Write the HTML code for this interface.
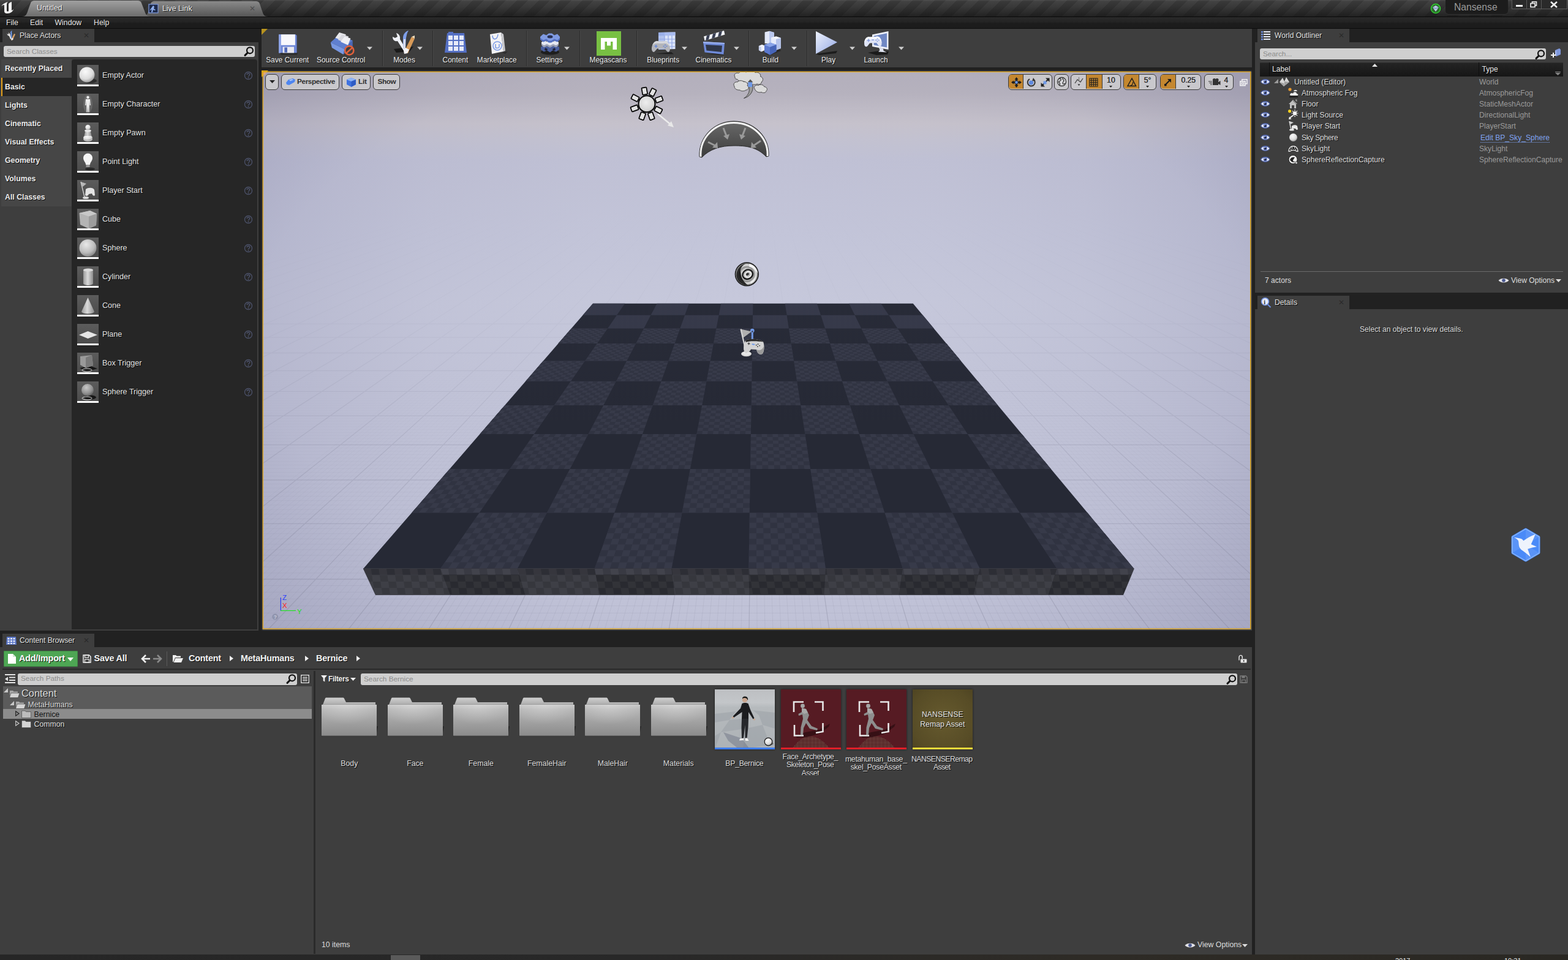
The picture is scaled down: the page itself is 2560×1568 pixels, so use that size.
<!DOCTYPE html><html><head><meta charset="utf-8"><title>Unreal Editor</title><style>
html,body{margin:0;padding:0;background:#212121;}
body{width:2560px;height:1568px;position:relative;overflow:hidden;font-family:"Liberation Sans",sans-serif;font-size:12px;color:#dedede;line-height:1;}
.a{position:absolute;white-space:nowrap}
.sh{text-shadow:1px 1px 0 rgba(0,0,0,.85)}
.b{font-weight:bold}
.panel{position:absolute;background:#3e3e3e}
.tab{position:absolute;background:#3e3e3e;height:22px}
.tab .t{position:absolute;left:28px;top:5px;font-size:12.1px;color:#e4e4e4;text-shadow:1px 1px 0 #000}
.tab .x{position:absolute;right:8px;top:5px;font-size:12px;color:#2a2a2a}
.search{position:absolute;background:#cfcfcf;border-radius:3px;color:#8c8c8c;font-size:11.8px}
.search span{position:absolute;left:5px;top:3.5px}
.mag{position:absolute}
svg{position:absolute;overflow:visible}
</style></head><body>
<div class="a" id="titlebar" style="left:0;top:0;width:2560px;height:27px;background:repeating-linear-gradient(135deg,#3d3d3d 0 12.7px,#313131 12.7px 25.4px);"></div>
<div class="a" style="left:0;top:0;width:2560px;height:27px;background:linear-gradient(#6a6a6a70 0,#50505040 8%,#30303050 40%,#161616b0 100%)"></div>
<svg style="left:0;top:0" width="480" height="28" viewBox="0 0 480 28">
 <defs>
  <linearGradient id="tg1" x1="0" y1="0" x2="0" y2="1"><stop offset="0" stop-color="#a0a0a0"/><stop offset="1" stop-color="#6c6c6c"/></linearGradient>
  <linearGradient id="tg2" x1="0" y1="0" x2="0" y2="1"><stop offset="0" stop-color="#8a8a8a"/><stop offset="1" stop-color="#565656"/></linearGradient>
 </defs>
 <path d="M232 27 C240 27 241 22 243 16 L246 6 C247 3 249 2 253 2 L417 2 C421 2 423 3 424 6 L428 18 C430 24 431 27 438 27 Z" fill="url(#tg2)"/>
 <path d="M36 27 C43 27 44 22 46 16 L50 5 C51 2 53 1 57 1 L224 1 C228 1 230 2 231 5 L236 18 C238 24 240 27 247 27 Z" fill="url(#tg1)"/>
 <!-- UE logo -->
 <g fill="#f2f2f2"><path d="M2 10 C5 6 9 4 13 3 C11 5 11 6 11 8 L11 17 C11 19 13 19 14 18 L14 7 C14 5 16 4 19 3 L19 17 C20 17 21 16 22 15 C21 19 17 22 12 22 C9 22 7 21 7 18 L7 9 C7 7 5 8 2 10 Z"/></g>
 <!-- live link icon -->
 <rect x="243" y="7" width="15" height="14" fill="#1d2a4a" stroke="#7f9be0" stroke-width="1.2"/>
 <path d="M250 9 l2 2 l-1 3 l3 2 l-1 1 l-3 -1 l-1 4 l-2 0 l1 -5 l-2 2 l-1 -1 l3 -4 z" fill="#8fb0f0"/>
</svg>
<div class="a sh" style="left:60px;top:6.5px;font-size:12.3px;color:#f0f0f0">Untitled</div>
<div class="a sh" style="left:265px;top:7.5px;font-size:12.3px;color:#f0f0f0">Live Link</div>
<div class="a" style="left:407px;top:8px;font-size:12px;color:#4c4c4c">✕</div>
<!-- right side -->
<div class="a" style="left:2360px;top:0;width:102px;height:23px;background:#1c1c1c;border-radius:0 0 5px 5px;box-shadow:0 1px 0 #333"></div>
<div class="a" style="left:2374px;top:4px;font-size:15.7px;color:#9a9a9a">Nansense</div>
<svg style="left:2334px;top:4px" width="20" height="20" viewBox="0 0 20 20"><circle cx="10" cy="10" r="7.5" fill="#2c6b2c" stroke="#2fd02f" stroke-width="1.6"/><path d="M5 8 L10 5 L15 8 L10 15 Z" fill="#b9c9e6"/><path d="M5 8 L10 10 L15 8" fill="none" stroke="#6c7fa8" stroke-width="1"/></svg>
<div class="a" style="left:2468px;top:0;width:89px;height:14px;border:1px solid #5a5a5a;border-top:none;background:#2a2a2a"></div>
<div class="a" style="left:2492px;top:0;width:1px;height:14px;background:#5a5a5a"></div>
<div class="a" style="left:2516px;top:0;width:1px;height:14px;background:#5a5a5a"></div>
<div class="a" style="left:2475px;top:8px;width:11px;height:3px;background:#f0f0f0"></div>
<svg style="left:2498px;top:2px" width="12" height="11" viewBox="0 0 12 11"><rect x="3.5" y="1" width="7" height="6" fill="none" stroke="#f0f0f0" stroke-width="1.6"/><rect x="1" y="3.5" width="7" height="6" fill="#2a2a2a" stroke="#f0f0f0" stroke-width="1.6"/></svg>
<svg style="left:2530px;top:2px" width="14" height="11" viewBox="0 0 14 11"><path d="M2 1 L12 10 M12 1 L2 10" stroke="#f0f0f0" stroke-width="2.6"/></svg>
<!-- menu bar -->
<div class="a" style="left:0;top:27px;width:2560px;height:20px;background:#202020;border-top:1px solid #0a0a0a;border-bottom:1px solid #0c0c0c;box-sizing:border-box"></div>
<div class="a" style="left:0;top:28px;width:2560px;height:18px;background:linear-gradient(#30303099 0,#26262688 45%,#1a1a1a99 55%,#18181888 100%)"></div>
<div class="a sh" style="left:10px;top:30.5px;font-size:12.3px;color:#e8e8e8">File</div>
<div class="a sh" style="left:49px;top:30.5px;font-size:12.3px;color:#e8e8e8">Edit</div>
<div class="a sh" style="left:89.5px;top:30.5px;font-size:12.3px;color:#e8e8e8">Window</div>
<div class="a sh" style="left:153px;top:30.5px;font-size:12.3px;color:#e8e8e8">Help</div>

<div class="tab" style="left:4px;top:47px;width:150px"><div class="t">Place Actors</div><div class="x">✕</div>
<svg style="left:5px;top:3px" width="18" height="17" viewBox="0 0 18 17"><path d="M3 4 C2 6 3 8 6 9 L8 14 L10 14 L8 8 C8 6 6 4 5 3 L5 6 L3.5 6 Z" fill="#e8e8e8"/><path d="M9 13 L8 3 C8.5 1 10 0 11 0 C10 1.5 10 3 10.5 4 L10.5 13Z" fill="#6f9ae8"/><path d="M9.5 14 L14 5 L16 6 L12 15 L9.5 16 Z" fill="#d8a26a"/><path d="M9.5 14 L10.5 12 L12.8 13 L12 15 L9.5 16 Z" fill="#f0f0f0"/></svg></div>
<div class="panel" style="left:0;top:69px;width:422px;height:961px"></div>
<div class="search" style="left:6px;top:75px;width:410px;height:18px"><span>Search Classes</span>
<svg style="right:1px;top:0px" width="18" height="18" viewBox="0 0 18 18"><circle cx="11" cy="7.3" r="5" fill="none" stroke="#111" stroke-width="2.2"/><path d="M7.2 11.2 L3 15.4" stroke="#111" stroke-width="3" stroke-linecap="round"/></svg></div>
<div class="a" style="left:2px;top:97px;width:115px;height:240px;background:#464646"></div>
<div class="a" style="left:2px;top:127px;width:115px;height:30px;background:#262626;border-left:2px solid #e6a11a;box-sizing:border-box"></div>
<div class="a" style="left:117px;top:97px;width:303px;height:931px;background:#262626;border-radius:4px 4px 0 0"></div>
<div class="a b sh" style="left:8px;top:105.5px;font-size:12.3px;color:#ececec">Recently Placed</div><div class="a b sh" style="left:8px;top:135.5px;font-size:12.3px;color:#ececec">Basic</div><div class="a b sh" style="left:8px;top:165.5px;font-size:12.3px;color:#ececec">Lights</div><div class="a b sh" style="left:8px;top:195.5px;font-size:12.3px;color:#ececec">Cinematic</div><div class="a b sh" style="left:8px;top:225.5px;font-size:12.3px;color:#ececec">Visual Effects</div><div class="a b sh" style="left:8px;top:255.5px;font-size:12.3px;color:#ececec">Geometry</div><div class="a b sh" style="left:8px;top:285.5px;font-size:12.3px;color:#ececec">Volumes</div><div class="a b sh" style="left:8px;top:315.5px;font-size:12.3px;color:#ececec">All Classes</div><svg width="0" height="0"><defs>
<radialGradient id="sph" cx=".4" cy=".3" r=".8"><stop offset="0" stop-color="#fafafa"/><stop offset=".6" stop-color="#dcdcdc"/><stop offset="1" stop-color="#8a8a8a"/></radialGradient>
<radialGradient id="sph2" cx=".4" cy=".3" r=".8"><stop offset="0" stop-color="#e8e8e8"/><stop offset=".6" stop-color="#bcbcbc"/><stop offset="1" stop-color="#767676"/></radialGradient>
<radialGradient id="sph3" cx=".4" cy=".3" r=".8"><stop offset="0" stop-color="#c8c8c8"/><stop offset=".6" stop-color="#909090"/><stop offset="1" stop-color="#505050"/></radialGradient>
<linearGradient id="cyl" x1="0" y1="0" x2="1" y2="0"><stop offset="0" stop-color="#9a9a9a"/><stop offset=".45" stop-color="#dadada"/><stop offset="1" stop-color="#8c8c8c"/></linearGradient>
<linearGradient id="thbg" x1="0" y1="0" x2="0" y2="1"><stop offset="0" stop-color="#5c5c5c"/><stop offset="1" stop-color="#4a4a4a"/></linearGradient>
</defs></svg><svg style="left:126px;top:105.7px" width="35" height="35" viewBox="0 0 35 35"><rect width="35" height="35" fill="url(#thbg)"/><ellipse cx="21" cy="26" rx="11" ry="4" fill="#2c2c2c"/><circle cx="16" cy="16" r="12.5" fill="url(#sph)"/><rect y="32" width="35" height="3" fill="#fafafa"/></svg><div class="a sh" style="left:167px;top:116.9px;font-size:12.6px;color:#e2e2e2">Empty Actor</div><svg style="left:398px;top:116.0px" width="15" height="15" viewBox="0 0 15 15"><circle cx="7.5" cy="7.5" r="6" fill="none" stroke="#4c526a" stroke-width="1.3"/><path d="M5.3 6 C5.3 3.4 9.7 3.4 9.7 6 C9.7 7.6 7.5 7.4 7.5 9.2" fill="none" stroke="#4c526a" stroke-width="1.4"/><circle cx="7.5" cy="11" r=".9" fill="#4c526a"/></svg><svg style="left:126px;top:152.7px" width="35" height="35" viewBox="0 0 35 35"><rect width="35" height="35" fill="url(#thbg)"/><ellipse cx="17.5" cy="17" rx="7.5" ry="15" fill="#777" opacity=".6"/><circle cx="17.5" cy="6" r="2.2" fill="#f0f0f0"/><path d="M14 9 H21 L22 19 H20.5 L20 12 L19.5 30 H18 L17.5 20 L17 30 H15.5 L15 12 L14.5 19 H13 Z" fill="#eeeeee"/><rect y="32" width="35" height="3" fill="#fafafa"/></svg><div class="a sh" style="left:167px;top:163.9px;font-size:12.6px;color:#e2e2e2">Empty Character</div><svg style="left:398px;top:163.0px" width="15" height="15" viewBox="0 0 15 15"><circle cx="7.5" cy="7.5" r="6" fill="none" stroke="#4c526a" stroke-width="1.3"/><path d="M5.3 6 C5.3 3.4 9.7 3.4 9.7 6 C9.7 7.6 7.5 7.4 7.5 9.2" fill="none" stroke="#4c526a" stroke-width="1.4"/><circle cx="7.5" cy="11" r=".9" fill="#4c526a"/></svg><svg style="left:126px;top:199.7px" width="35" height="35" viewBox="0 0 35 35"><rect width="35" height="35" fill="url(#thbg)"/><ellipse cx="17.5" cy="27.500" rx="7.500" ry="3.500" fill="#c4c4c4"/><ellipse cx="17.5" cy="25" rx="7.500" ry="4.500" fill="url(#sph)"/><path d="M13.500 13 H21.500 L23.500 22 H11.500Z" fill="url(#cyl)"/><ellipse cx="17.5" cy="13.500" rx="5.500" ry="2.200" fill="#e8e8e8"/><circle cx="17.5" cy="8" r="4.200" fill="url(#sph)"/><rect y="32" width="35" height="3" fill="#fafafa"/></svg><div class="a sh" style="left:167px;top:210.9px;font-size:12.6px;color:#e2e2e2">Empty Pawn</div><svg style="left:398px;top:210.0px" width="15" height="15" viewBox="0 0 15 15"><circle cx="7.5" cy="7.5" r="6" fill="none" stroke="#4c526a" stroke-width="1.3"/><path d="M5.3 6 C5.3 3.4 9.7 3.4 9.7 6 C9.7 7.6 7.5 7.4 7.5 9.2" fill="none" stroke="#4c526a" stroke-width="1.4"/><circle cx="7.5" cy="11" r=".9" fill="#4c526a"/></svg><svg style="left:126px;top:246.7px" width="35" height="35" viewBox="0 0 35 35"><rect width="35" height="35" fill="url(#thbg)"/><ellipse cx="21" cy="29" rx="8" ry="2.5" fill="#2a2a2a"/><path d="M10 11 A7.5 7.5 0 1 1 25 11 C25 16 21 18 21 22 H14 C14 18 10 16 10 11Z" fill="#f4f4f4"/><rect x="14.5" y="22" width="6" height="4" fill="#9a9a9a"/><rect y="32" width="35" height="3" fill="#fafafa"/></svg><div class="a sh" style="left:167px;top:257.9px;font-size:12.6px;color:#e2e2e2">Point Light</div><svg style="left:398px;top:257.0px" width="15" height="15" viewBox="0 0 15 15"><circle cx="7.5" cy="7.5" r="6" fill="none" stroke="#4c526a" stroke-width="1.3"/><path d="M5.3 6 C5.3 3.4 9.7 3.4 9.7 6 C9.7 7.6 7.5 7.4 7.5 9.2" fill="none" stroke="#4c526a" stroke-width="1.4"/><circle cx="7.5" cy="11" r=".9" fill="#4c526a"/></svg><svg style="left:126px;top:293.7px" width="35" height="35" viewBox="0 0 35 35"><rect width="35" height="35" fill="url(#thbg)"/><ellipse cx="14" cy="29" rx="5" ry="2" fill="#dcdcdc"/><path d="M6 3 L15 6 L9 11 Z" fill="#b8b8b8"/><path d="M6 3 L12 28" stroke="#d0d0d0" stroke-width="1.4"/><path d="M14 15 C18 12 26 12 28 16 L29 25 C27 27 25 25 24 22 L19 23 C18 26 15 27 13 25 Z" fill="#e4e4e4"/><rect y="32" width="35" height="3" fill="#fafafa"/></svg><div class="a sh" style="left:167px;top:304.9px;font-size:12.6px;color:#e2e2e2">Player Start</div><svg style="left:398px;top:304.0px" width="15" height="15" viewBox="0 0 15 15"><circle cx="7.5" cy="7.5" r="6" fill="none" stroke="#4c526a" stroke-width="1.3"/><path d="M5.3 6 C5.3 3.4 9.7 3.4 9.7 6 C9.7 7.6 7.5 7.4 7.5 9.2" fill="none" stroke="#4c526a" stroke-width="1.4"/><circle cx="7.5" cy="11" r=".9" fill="#4c526a"/></svg><svg style="left:126px;top:340.7px" width="35" height="35" viewBox="0 0 35 35"><rect width="35" height="35" fill="url(#thbg)"/><path d="M3.500 7 L21 3 L32 8 L31 27 L19 32.500 L5 26 Z" fill="#b4b4b4"/><path d="M3.500 7 L21 3 L32 8 L19 12.500 Z" fill="#c8c8c8"/><path d="M19 12.500 L32 8 L31 27 L19 32.500 Z" fill="#9c9c9c"/><rect y="32" width="35" height="3" fill="#fafafa"/></svg><div class="a sh" style="left:167px;top:351.9px;font-size:12.6px;color:#e2e2e2">Cube</div><svg style="left:398px;top:351.0px" width="15" height="15" viewBox="0 0 15 15"><circle cx="7.5" cy="7.5" r="6" fill="none" stroke="#4c526a" stroke-width="1.3"/><path d="M5.3 6 C5.3 3.4 9.7 3.4 9.7 6 C9.7 7.6 7.5 7.4 7.5 9.2" fill="none" stroke="#4c526a" stroke-width="1.4"/><circle cx="7.5" cy="11" r=".9" fill="#4c526a"/></svg><svg style="left:126px;top:387.7px" width="35" height="35" viewBox="0 0 35 35"><rect width="35" height="35" fill="url(#thbg)"/><circle cx="17.5" cy="17" r="14" fill="url(#sph2)"/><rect y="32" width="35" height="3" fill="#fafafa"/></svg><div class="a sh" style="left:167px;top:398.9px;font-size:12.6px;color:#e2e2e2">Sphere</div><svg style="left:398px;top:398.0px" width="15" height="15" viewBox="0 0 15 15"><circle cx="7.5" cy="7.5" r="6" fill="none" stroke="#4c526a" stroke-width="1.3"/><path d="M5.3 6 C5.3 3.4 9.7 3.4 9.7 6 C9.7 7.6 7.5 7.4 7.5 9.2" fill="none" stroke="#4c526a" stroke-width="1.4"/><circle cx="7.5" cy="11" r=".9" fill="#4c526a"/></svg><svg style="left:126px;top:434.7px" width="35" height="35" viewBox="0 0 35 35"><rect width="35" height="35" fill="url(#thbg)"/><path d="M10 6 V28 A8 3 0 0 0 26 28 V6 Z" fill="url(#cyl)"/><ellipse cx="18" cy="6" rx="8" ry="2.6" fill="#dcdcdc"/><rect y="32" width="35" height="3" fill="#fafafa"/></svg><div class="a sh" style="left:167px;top:445.9px;font-size:12.6px;color:#e2e2e2">Cylinder</div><svg style="left:398px;top:445.0px" width="15" height="15" viewBox="0 0 15 15"><circle cx="7.5" cy="7.5" r="6" fill="none" stroke="#4c526a" stroke-width="1.3"/><path d="M5.3 6 C5.3 3.4 9.7 3.4 9.7 6 C9.7 7.6 7.5 7.4 7.5 9.2" fill="none" stroke="#4c526a" stroke-width="1.4"/><circle cx="7.5" cy="11" r=".9" fill="#4c526a"/></svg><svg style="left:126px;top:481.7px" width="35" height="35" viewBox="0 0 35 35"><rect width="35" height="35" fill="url(#thbg)"/><path d="M17.5 4 L28 27 A10.5 3.5 0 0 1 7 27 Z" fill="url(#cyl)"/><rect y="32" width="35" height="3" fill="#fafafa"/></svg><div class="a sh" style="left:167px;top:492.9px;font-size:12.6px;color:#e2e2e2">Cone</div><svg style="left:398px;top:492.0px" width="15" height="15" viewBox="0 0 15 15"><circle cx="7.5" cy="7.5" r="6" fill="none" stroke="#4c526a" stroke-width="1.3"/><path d="M5.3 6 C5.3 3.4 9.7 3.4 9.7 6 C9.7 7.6 7.5 7.4 7.5 9.2" fill="none" stroke="#4c526a" stroke-width="1.4"/><circle cx="7.5" cy="11" r=".9" fill="#4c526a"/></svg><svg style="left:126px;top:528.7px" width="35" height="35" viewBox="0 0 35 35"><rect width="35" height="35" fill="url(#thbg)"/><path d="M3 18 L17.5 12 L33 18 L17.5 24 Z" fill="#e6e6e6"/><rect y="32" width="35" height="3" fill="#fafafa"/></svg><div class="a sh" style="left:167px;top:539.9px;font-size:12.6px;color:#e2e2e2">Plane</div><svg style="left:398px;top:539.0px" width="15" height="15" viewBox="0 0 15 15"><circle cx="7.5" cy="7.5" r="6" fill="none" stroke="#4c526a" stroke-width="1.3"/><path d="M5.3 6 C5.3 3.4 9.7 3.4 9.7 6 C9.7 7.6 7.5 7.4 7.5 9.2" fill="none" stroke="#4c526a" stroke-width="1.4"/><circle cx="7.5" cy="11" r=".9" fill="#4c526a"/></svg><svg style="left:126px;top:575.7px" width="35" height="35" viewBox="0 0 35 35"><rect width="35" height="35" fill="url(#thbg)"/><path d="M4 25 L22 22 L33 26 L16 31 Z" fill="#161616"/><ellipse cx="16" cy="28.5" rx="8" ry="2.5" fill="none" stroke="#ddd" stroke-width="1"/><path d="M5 6 L24 4 L26 21 L14 25 L5 20 Z" fill="#9a9a9a"/><path d="M14 8 L24 4 L26 21 L14 25Z" fill="#7a7a7a"/><rect y="32" width="35" height="3" fill="#fafafa"/></svg><div class="a sh" style="left:167px;top:586.9px;font-size:12.6px;color:#e2e2e2">Box Trigger</div><svg style="left:398px;top:586.0px" width="15" height="15" viewBox="0 0 15 15"><circle cx="7.5" cy="7.5" r="6" fill="none" stroke="#4c526a" stroke-width="1.3"/><path d="M5.3 6 C5.3 3.4 9.7 3.4 9.7 6 C9.7 7.6 7.5 7.4 7.5 9.2" fill="none" stroke="#4c526a" stroke-width="1.4"/><circle cx="7.5" cy="11" r=".9" fill="#4c526a"/></svg><svg style="left:126px;top:622.7px" width="35" height="35" viewBox="0 0 35 35"><rect width="35" height="35" fill="url(#thbg)"/><ellipse cx="21" cy="26" rx="10" ry="3.5" fill="#161616"/><ellipse cx="16" cy="27.5" rx="8" ry="2.5" fill="none" stroke="#ddd" stroke-width="1"/><circle cx="17" cy="14" r="10" fill="url(#sph3)"/><rect y="32" width="35" height="3" fill="#fafafa"/></svg><div class="a sh" style="left:167px;top:633.9px;font-size:12.6px;color:#e2e2e2">Sphere Trigger</div><svg style="left:398px;top:633.0px" width="15" height="15" viewBox="0 0 15 15"><circle cx="7.5" cy="7.5" r="6" fill="none" stroke="#4c526a" stroke-width="1.3"/><path d="M5.3 6 C5.3 3.4 9.7 3.4 9.7 6 C9.7 7.6 7.5 7.4 7.5 9.2" fill="none" stroke="#4c526a" stroke-width="1.4"/><circle cx="7.5" cy="11" r=".9" fill="#4c526a"/></svg><div class="a" style="left:427px;top:47px;width:1617px;height:63px;background:#3e3e3e"></div>
<svg style="left:427px;top:47px" width="10" height="10"><path d="M0 0 H10 L0 10Z" fill="#b8931f"/></svg><svg width="0" height="0"><defs><linearGradient id="playg" x1="0" y1="0" x2="1" y2="1"><stop offset="0" stop-color="#eef2fc"/><stop offset=".6" stop-color="#b8c6ee"/><stop offset="1" stop-color="#8ea4e0"/></linearGradient></defs></svg><svg style="left:450.0px;top:50px" width="40" height="40" viewBox="0 0 40 40"><g transform="translate(1.5 3.5) scale(.92)"><path d="M4 3 H34 L36 5 V36 H4 Z" fill="#6d86d6"/><path d="M4 3 H8 V36 H4Z" fill="#8ea4e6"/><rect x="8" y="3" width="25" height="19" fill="#f8f8fc"/><rect x="11" y="25" width="20" height="11" fill="#e8e8f0"/><rect x="14" y="26" width="5" height="9" fill="#5068b8"/><path d="M6 36 L38 36 L36 39 L8 39Z" fill="#202020" opacity=".6"/></g></svg><div class="a sh" style="left:409.4px;top:92.8px;width:120px;text-align:center;font-size:11.9px;color:#ececec">Save Current</div><svg style="left:538.0px;top:50px" width="40" height="40" viewBox="0 0 40 40"><g transform="translate(-1.500 -2.500) scale(1.09)"><path d="M3 20 L14 10 L36 17 L24 30 Z" fill="#5f7fd0"/><path d="M3 20 L24 30 L22 38 L5 28Z" fill="#7898e2"/><path d="M24 30 L36 17 L36 26 L22 38Z" fill="#4a68b8"/><path d="M10 13 L16 5 L26 8 L22 18Z" fill="#e8e8ec"/><path d="M14 16 L20 8 L30 11 L26 21Z" fill="#d8d8de"/><path d="M18 19 L24 11 L33 14 L29 24Z" fill="#f0f0f4"/><circle cx="31" cy="32" r="6.5" fill="#3e3e3e" stroke="#e0603a" stroke-width="2.4"/><path d="M26.5 36 L35.5 28" stroke="#e0603a" stroke-width="2.4"/></g></svg><div class="a sh" style="left:496.7px;top:92.8px;width:120px;text-align:center;font-size:11.9px;color:#ececec">Source Control</div><svg style="left:599.3px;top:76px" width="9" height="6"><path d="M0 .5 H9 L4.5 5.5Z" fill="#cfcfcf"/></svg><svg style="left:639.0px;top:50px" width="40" height="40" viewBox="0 0 40 40"><path d="M4 30 L36 26 L30 34 L8 36Z" fill="#111" opacity=".8"/><path d="M2 10 C2 16 6 18 10 17 L22 36 L26 34 L14 14 C15 9 12 5 8 4 L10 10 L6 12 Z" fill="#f0f2f8"/><path d="M19 30 L19 12 C19 6 23 1 28 0 C25 4 25 8 24 12 L23 30Z" fill="#7f9fe8"/><path d="M19 30 L20 14 L23 14 L23 30Z" fill="#d8dcec"/><path d="M21 34 L33 10 L38 13 L27 37Z" fill="#d89a58"/><path d="M33 10 L38 8 L38 13Z" fill="#f0e0c0"/><path d="M20 33 L23 28 L29 31 L26 37 L21 38Z" fill="#f4f4f8"/></svg><div class="a sh" style="left:600.0px;top:92.8px;width:120px;text-align:center;font-size:11.9px;color:#ececec">Modes</div><svg style="left:681.3px;top:76px" width="9" height="6"><path d="M0 .5 H9 L4.5 5.5Z" fill="#cfcfcf"/></svg><svg style="left:724.0px;top:50px" width="40" height="40" viewBox="0 0 40 40"><path d="M6 4 H34 L38 36 H2 Z" fill="#5570c4"/><path d="M8 2 H16 V5 H8Z" fill="#5570c4"/><rect x="8" y="8" width="7" height="7" fill="#e6eaf8"/><rect x="17" y="8" width="7" height="7" fill="#e6eaf8"/><rect x="26" y="8" width="7" height="7" fill="#e6eaf8"/><rect x="8" y="17" width="7" height="7" fill="#e6eaf8"/><rect x="17" y="17" width="7" height="7" fill="#e6eaf8"/><rect x="26" y="17" width="7" height="7" fill="#e6eaf8"/><rect x="8" y="26" width="7" height="7" fill="#e6eaf8"/><rect x="17" y="26" width="7" height="7" fill="#e6eaf8"/><rect x="26" y="26" width="7" height="7" fill="#e6eaf8"/></svg><div class="a sh" style="left:683.4px;top:92.8px;width:120px;text-align:center;font-size:11.9px;color:#ececec">Content</div><svg style="left:791.0px;top:50px" width="40" height="40" viewBox="0 0 40 40"><path d="M28 36 L38 34 L34 38 Z" fill="#222" opacity=".6"/><path d="M9 6 L27 3 L31 34 L12 38 Z" fill="#f2f2f4"/><path d="M27 3 L31 6 L34 33 L31 34Z" fill="#c8c8cc"/><path d="M13 8 C13 16 21 16 22 6" fill="none" stroke="#6f90e0" stroke-width="1.4"/><circle cx="21" cy="25" r="7" fill="none" stroke="#7f9de6" stroke-width="1.6"/><path d="M18 22 V27 C18 29 23 29 24 27 V22" fill="none" stroke="#7f9de6" stroke-width="1.6"/></svg><div class="a sh" style="left:751.2px;top:92.8px;width:120px;text-align:center;font-size:11.9px;color:#ececec">Marketplace</div><svg style="left:877.5px;top:50px" width="40" height="40" viewBox="0 0 40 40"><ellipse cx="20" cy="35" rx="15" ry="4.500" fill="#141414" opacity=".75"/><path d="M5 27 L9 24 L14 26 L20 24 L26 26 L31 24 L35 27 L35 31 L30 34.500 L24 32.500 L20 35.500 L15 32.500 L10 34.500 L5 31Z" fill="#4a5f9e"/><path d="M12 28 l4 2 l-1 3 l-4 -1z M24 30 l4 -2 l1 4 l-4 1z" fill="#1e2238"/><path d="M6 19 L10 16 L15 18 L20 16 L25 18 L30 16 L34 19 L34 23.500 L30 27 L25 25 L20 27.500 L15 25 L10 27 L6 23.500Z" fill="#e6e9f2"/><path d="M6 23.500 L10 27 L15 25 L20 27.500 L25 25 L30 27 L34 23.500 L34 21 L30 24 L25 22 L20 24.500 L15 22 L10 24 L6 21Z" fill="#9aa0b4"/><path d="M4 10 L9 5.500 L14 7.500 L18 4.500 L23 4.500 L27 7.500 L32 5.500 L36 10 L36 14.500 L32 18.500 L27 16.500 L22 19.500 L18 19.500 L14 16.500 L9 18.500 L4 14.500Z" fill="#7f9ae2"/><path d="M4 14.500 L9 18.500 L14 16.500 L18 19.500 L22 19.500 L27 16.500 L32 18.500 L36 14.500 L36 12 L32 15.500 L27 13.500 L22 16.500 L18 16.500 L14 13.500 L9 15.500 L4 12Z" fill="#536fc0"/><ellipse cx="20" cy="10" rx="4.500" ry="2.500" fill="#2a3152"/></svg><div class="a sh" style="left:837.0px;top:92.8px;width:120px;text-align:center;font-size:11.9px;color:#ececec">Settings</div><svg style="left:921.1px;top:76px" width="9" height="6"><path d="M0 .5 H9 L4.5 5.5Z" fill="#cfcfcf"/></svg><div class="a" style="left:974px;top:51px;width:40px;height:40px;background:#78c043"></div><svg style="left:981px;top:60.500px" width="26" height="21" viewBox="0 0 26 21"><path d="M0 20 V1 H26 V20 H19.500 V7 H16 V13.500 H10 V7 H6.500 V20Z" fill="#fff"/></svg><div class="a sh" style="left:933.0px;top:92.8px;width:120px;text-align:center;font-size:11.9px;color:#ececec">Megascans</div><svg style="left:1063.0px;top:50px" width="40" height="40" viewBox="0 0 40 40"><path d="M6 38 L33 35 L37 38.500Z" fill="#141414" opacity=".7"/><path d="M12 3 L39.500 2.500 L39.500 30 L12 31Z" fill="#dce5fa"/><path d="M12 3 L39.500 2.500 L39.500 8 L12 8.500Z" fill="#a9bcf0"/><path d="M22 8 V30 M28 8 V30 M34 8 V30 M12 14 H39.500 M12 20 H39.500 M12 26 H39.500" stroke="#8ea4e4" stroke-width="1.100"/><path d="M12 3 L22 3 L22 31 L12 31Z" fill="#8ea6e6" opacity=".55"/><path d="M2 24 C5 17 9 16 13 17.500 L20 17.500 C25 15.500 29 19 30.500 26 C32 33 29 37 26 34 L22 29.500 L10 29.500 L6 34 C3 37 -1 32 2 24Z" fill="#b4b5ba"/><path d="M2 24 C5 17 9 16 13 17.500 L20 17.500 C25 15.500 29 19 30.500 26 C27 21 24 20 20 21 L13 21 C8 20 5 21 2 24Z" fill="#d6d7dc"/><path d="M8 23 v5 M5.500 25.500 h5" stroke="#6a8ad8" stroke-width="1.600"/><circle cx="23" cy="23.500" r="1.100" fill="#6a8ad8"/><circle cx="25.500" cy="25.500" r="1.100" fill="#6a8ad8"/><circle cx="23" cy="27.500" r="1.100" fill="#6a8ad8"/><circle cx="20.500" cy="25.500" r="1.100" fill="#6a8ad8"/></svg><div class="a sh" style="left:1022.7px;top:92.8px;width:120px;text-align:center;font-size:11.9px;color:#ececec">Blueprints</div><svg style="left:1112.5px;top:76px" width="9" height="6"><path d="M0 .5 H9 L4.5 5.5Z" fill="#cfcfcf"/></svg><svg style="left:1144.5px;top:50px" width="40" height="40" viewBox="0 0 40 40"><path d="M8 38 L38 36 L36 40Z" fill="#141414" opacity=".65"/><path d="M4 9.500 L37 0 L38.500 6.500 L5.500 16.500Z" fill="#f2f4f8"/><path d="M9 8 L14 6.500 L12 14.500 L7 16Z M19 5.200 L24 3.700 L22 11.500 L17 13Z M29 2.300 L34 .8 L32 8.500 L27 10Z" fill="#3a4054"/><path d="M3 18 L38 20 L36.500 39 L5.500 35.500Z" fill="#6f8ad8"/><path d="M3 18 L38 20 L38 22 L3 20.500Z" fill="#9ab0ee"/><path d="M7 23 L34 24.500 L33 35 L8.500 32.500Z" fill="#2f3648"/></svg><div class="a sh" style="left:1105.0px;top:92.8px;width:120px;text-align:center;font-size:11.9px;color:#ececec">Cinematics</div><svg style="left:1197.5px;top:76px" width="9" height="6"><path d="M0 .5 H9 L4.5 5.5Z" fill="#cfcfcf"/></svg><svg style="left:1237.0px;top:50px" width="40" height="40" viewBox="0 0 40 40"><path d="M12 38 L36 30 L38 33 L20 40Z" fill="#141414" opacity=".5"/><path d="M11.600 2.500 L19 .8 L26.800 3 V21 H11.600Z" fill="#e2e8f8"/><path d="M19 .8 L26.800 3 V21 L19 21Z" fill="#bac8ee"/><path d="M22 11.500 L30 9.500 L37.800 12 V29 L30 32 L22 29Z" fill="#e6ebfa"/><path d="M30 9.500 L37.800 12 V29 L30 32Z" fill="#b4c2ea"/><path d="M22 11.500 L30 9.500 L37.800 12 L30 14Z" fill="#f4f6fc"/><path d="M1.900 25 L7 22.800 L11.600 24.500 V32 L6 34.500 L1.900 32Z" fill="#eef1fa"/><path d="M1.900 25 L6 27 L6 34.500 L1.900 32Z" fill="#c6d0ee"/><path d="M11 23 L21 19.800 L30.500 23 V34 L20 39.800 L11 35Z" fill="#5b79cf"/><path d="M11 23 L21 19.800 L30.500 23 L20 27Z" fill="#8aa4e8"/><path d="M20 27 L30.500 23 V34 L20 39.800Z" fill="#4765b8"/></svg><div class="a sh" style="left:1198.0px;top:92.8px;width:120px;text-align:center;font-size:11.9px;color:#ececec">Build</div><svg style="left:1292.3px;top:76px" width="9" height="6"><path d="M0 .5 H9 L4.5 5.5Z" fill="#cfcfcf"/></svg><svg style="left:1329.0px;top:50px" width="40" height="40" viewBox="0 0 40 40"><path d="M3 38 L38 33 L36 37 L8 40Z" fill="#141414" opacity=".8"/><path d="M3 1 L38 19 L3 38 Z" fill="url(#playg)"/></svg><div class="a sh" style="left:1292.6px;top:92.8px;width:120px;text-align:center;font-size:11.9px;color:#ececec">Play</div><svg style="left:1387.2px;top:76px" width="9" height="6"><path d="M0 .5 H9 L4.5 5.5Z" fill="#cfcfcf"/></svg><svg style="left:1411.0px;top:50px" width="40" height="40" viewBox="0 0 40 40"><path d="M6 36 L24 33 L40 34 L38 39 L20 40Z" fill="#111" opacity=".8"/><path d="M13 6.500 L39.500 1 L39.500 31 L13 26Z" fill="#eef1fa"/><path d="M15.500 8.800 L37 4.200 L37 27.600 L15.500 23.600Z" fill="#7088c4"/><path d="M24 28 L31 29.500 L31.500 33 L37 35.500 L23 34.500 L25.500 32Z" fill="#dfe3f0"/><path d="M0 21 C.5 13 4 9.500 9 10.500 L19 10 C24 8 28.500 13 28.500 21 C28.500 26.500 25 27 23 24 L20 20 L9 20.500 L6 24.500 C4 27.500 0 27 0 21Z" fill="#dfe4f6"/><path d="M0 21 C.5 13 4 9.500 9 10.500 L19 10 C24 8 28.500 13 28.500 21 C27 16 24 13.500 19 14 L9 14.500 C4 14 1.500 16 0 21Z" fill="#f6f8fd"/><path d="M7 13.500 v5 M4.500 16 h5" stroke="#8aa0e0" stroke-width="1.500"/><circle cx="21.500" cy="13.500" r="1" fill="#8aa0e0"/><circle cx="23.800" cy="15.500" r="1" fill="#8aa0e0"/><circle cx="21.500" cy="17.500" r="1" fill="#8aa0e0"/><circle cx="19.200" cy="15.500" r="1" fill="#8aa0e0"/><rect x="12" y="14.500" width="4" height="1.500" fill="#8aa0e0"/></svg><div class="a sh" style="left:1370.0px;top:92.8px;width:120px;text-align:center;font-size:11.9px;color:#ececec">Launch</div><svg style="left:1466.5px;top:76px" width="9" height="6"><path d="M0 .5 H9 L4.5 5.5Z" fill="#cfcfcf"/></svg><div class="a" style="left:623.8px;top:50px;width:1px;height:58px;background:#2c2c2c"></div><div class="a" style="left:624.8px;top:50px;width:1px;height:58px;background:#4a4a4a"></div><div class="a" style="left:705.8px;top:50px;width:1px;height:58px;background:#2c2c2c"></div><div class="a" style="left:706.8px;top:50px;width:1px;height:58px;background:#4a4a4a"></div><div class="a" style="left:859.0px;top:50px;width:1px;height:58px;background:#2c2c2c"></div><div class="a" style="left:860.0px;top:50px;width:1px;height:58px;background:#4a4a4a"></div><div class="a" style="left:945.6px;top:50px;width:1px;height:58px;background:#2c2c2c"></div><div class="a" style="left:946.6px;top:50px;width:1px;height:58px;background:#4a4a4a"></div><div class="a" style="left:1039.0px;top:50px;width:1px;height:58px;background:#2c2c2c"></div><div class="a" style="left:1040.0px;top:50px;width:1px;height:58px;background:#4a4a4a"></div><div class="a" style="left:1222.0px;top:50px;width:1px;height:58px;background:#2c2c2c"></div><div class="a" style="left:1223.0px;top:50px;width:1px;height:58px;background:#4a4a4a"></div><div class="a" style="left:1316.7px;top:50px;width:1px;height:58px;background:#2c2c2c"></div><div class="a" style="left:1317.7px;top:50px;width:1px;height:58px;background:#4a4a4a"></div><svg style="left:427px;top:115px" width="1617" height="914.5" viewBox="427 115 1617 914.5"><defs>
<linearGradient id="sky" x1="0" y1="0" x2="0" y2="1">
<stop offset="0" stop-color="#b3afbc"/><stop offset=".04" stop-color="#b6b2be"/><stop offset=".07" stop-color="#bfbbc6"/><stop offset=".095" stop-color="#c6c2cc"/>
<stop offset=".125" stop-color="#c3c2d1"/><stop offset=".16" stop-color="#c0c1d5"/><stop offset=".3" stop-color="#c3c5d9"/><stop offset=".415" stop-color="#c6c8db"/><stop offset=".7" stop-color="#c3c5d9"/><stop offset="1" stop-color="#c0c2d7"/></linearGradient>
<linearGradient id="vig" x1="0" y1="0" x2="1" y2="0"><stop offset="0" stop-color="#6c6c94" stop-opacity=".17"/><stop offset=".07" stop-color="#6c6c94" stop-opacity=".115"/><stop offset=".17" stop-color="#6c6c94" stop-opacity=".05"/><stop offset=".32" stop-color="#6c6c94" stop-opacity=".01"/><stop offset=".5" stop-color="#6c6c94" stop-opacity="0"/><stop offset=".68" stop-color="#6c6c94" stop-opacity=".01"/><stop offset=".83" stop-color="#6c6c94" stop-opacity=".05"/><stop offset=".93" stop-color="#6c6c94" stop-opacity=".115"/><stop offset="1" stop-color="#6c6c94" stop-opacity=".17"/></linearGradient>
<linearGradient id="gfade" gradientUnits="userSpaceOnUse" x1="0" y1="330" x2="0" y2="1029"><stop offset="0" stop-color="#77788e" stop-opacity="0"/><stop offset=".25" stop-color="#77788e" stop-opacity=".045"/><stop offset=".4" stop-color="#77788e" stop-opacity=".12"/><stop offset=".6" stop-color="#77788e" stop-opacity=".22"/><stop offset="1" stop-color="#77788e" stop-opacity=".3"/></linearGradient>
<linearGradient id="gfade2" gradientUnits="userSpaceOnUse" x1="0" y1="560" x2="0" y2="1029"><stop offset="0" stop-color="#77788e" stop-opacity="0"/><stop offset=".5" stop-color="#77788e" stop-opacity=".07"/><stop offset="1" stop-color="#77788e" stop-opacity=".13"/></linearGradient>
<radialGradient id="vig2" cx=".5" cy=".47" r=".72"><stop offset="0" stop-color="#55557a" stop-opacity="0"/><stop offset=".7" stop-color="#55557a" stop-opacity="0"/><stop offset="1" stop-color="#55557a" stop-opacity=".12"/></radialGradient><pattern id="ffx" width="25.200" height="21" patternUnits="userSpaceOnUse" patternTransform="translate(593.2 928.8) skewX(8)"><path d="M0 0 H12.600 V10.500 H0Z M12.600 10.500 H25.200 V21 H12.600Z" fill="#fff" opacity=".03"/><path d="M12.600 0 H25.200 V10.500 H12.600Z M0 10.500 H12.600 V21 H0Z" fill="#000" opacity=".045"/></pattern><clipPath id="vclip"><rect x="427" y="115" width="1615.500" height="913"/></clipPath>
<radialGradient id="rsph" cx=".5" cy=".5" r=".5"><stop offset="0" stop-color="#999"/><stop offset=".45" stop-color="#d8d8d8"/><stop offset=".62" stop-color="#8a8a8a"/><stop offset=".8" stop-color="#e8e8e8"/><stop offset=".93" stop-color="#777"/><stop offset="1" stop-color="#222"/></radialGradient>
<radialGradient id="sunb" cx=".45" cy=".4" r=".7"><stop offset="0" stop-color="#eeeeee"/><stop offset=".7" stop-color="#d4d4d4"/><stop offset="1" stop-color="#8a8a8a"/></radialGradient>
<linearGradient id="dome" x1="0" y1="0" x2="0" y2="1"><stop offset="0" stop-color="#6a6a6a"/><stop offset="1" stop-color="#3c3c3c"/></linearGradient>
</defs><defs><linearGradient id="ffog" x1="0" y1="495.7" x2="0" y2="928.8" gradientUnits="userSpaceOnUse"><stop offset="0" stop-color="#8088b0" stop-opacity=".02"/><stop offset=".5" stop-color="#8088b0" stop-opacity="0"/></linearGradient></defs><g clip-path="url(#vclip)"><rect x="427" y="115" width="1616" height="914" fill="url(#sky)"/><rect x="427" y="115" width="1616" height="914" fill="url(#vig)"/><rect x="427" y="115" width="1616" height="914" fill="url(#vig2)"/><path d="M742 338L-1528 1029M765 338L-1397 1029M788 338L-1266 1029M812 338L-1135 1029M835 338L-1004 1029M858 338L-873 1029M882 338L-742 1029M905 338L-611 1029M929 338L-480 1029M952 338L-349 1029M975 338L-218 1029M999 338L-87 1029M1022 338L44 1029M1045 338L175 1029M1069 338L306 1029M1092 338L437 1029M1115 338L568 1029M1139 338L699 1029M1162 338L830 1029M1186 338L961 1029M1209 338L1092 1029M1232 338L1223 1029M1256 338L1354 1029M1279 338L1485 1029M1302 338L1616 1029M1326 338L1747 1029M1349 338L1878 1029M1372 338L2009 1029M1396 338L2140 1029M1419 338L2271 1029M1443 338L2402 1029M1466 338L2533 1029M1489 338L2664 1029M1513 338L2795 1029M1536 338L2926 1029M1559 338L3057 1029M1583 338L3188 1029M1606 338L3318 1029M1629 338L3449 1029M1653 338L3580 1029M1676 338L3711 1029M1700 338L3842 1029M1723 338L3973 1029M427 946.0H2043M427 855.3H2043M427 784.0H2043M427 726.5H2043M427 679.1H2043M427 639.3H2043M427 605.5H2043M427 576.5H2043M427 551.2H2043M427 529.0H2043" stroke="url(#gfade)" stroke-width="1.3" fill="none"/><path d="M747 570L162 1029M759 570L188 1029M765 570L201 1029M771 570L214 1029M777 570L227 1029M783 570L240 1029M789 570L253 1029M795 570L266 1029M801 570L280 1029M807 570L293 1029M819 570L319 1029M824 570L332 1029M830 570L345 1029M836 570L358 1029M842 570L371 1029M848 570L384 1029M854 570L397 1029M860 570L411 1029M866 570L424 1029M878 570L450 1029M884 570L463 1029M890 570L476 1029M896 570L489 1029M902 570L502 1029M908 570L515 1029M914 570L528 1029M920 570L541 1029M926 570L555 1029M938 570L581 1029M943 570L594 1029M949 570L607 1029M955 570L620 1029M961 570L633 1029M967 570L646 1029M973 570L659 1029M979 570L672 1029M985 570L686 1029M997 570L712 1029M1003 570L725 1029M1009 570L738 1029M1015 570L751 1029M1021 570L764 1029M1027 570L777 1029M1033 570L790 1029M1039 570L803 1029M1045 570L817 1029M1057 570L843 1029M1062 570L856 1029M1068 570L869 1029M1074 570L882 1029M1080 570L895 1029M1086 570L908 1029M1092 570L921 1029M1098 570L934 1029M1104 570L948 1029M1116 570L974 1029M1122 570L987 1029M1128 570L1000 1029M1134 570L1013 1029M1140 570L1026 1029M1146 570L1039 1029M1152 570L1052 1029M1158 570L1065 1029M1164 570L1079 1029M1176 570L1105 1029M1181 570L1118 1029M1187 570L1131 1029M1193 570L1144 1029M1199 570L1157 1029M1205 570L1170 1029M1211 570L1183 1029M1217 570L1196 1029M1223 570L1210 1029M1235 570L1236 1029M1241 570L1249 1029M1247 570L1262 1029M1253 570L1275 1029M1259 570L1288 1029M1265 570L1301 1029M1271 570L1314 1029M1277 570L1327 1029M1283 570L1341 1029M1295 570L1367 1029M1300 570L1380 1029M1306 570L1393 1029M1312 570L1406 1029M1318 570L1419 1029M1324 570L1432 1029M1330 570L1445 1029M1336 570L1458 1029M1342 570L1472 1029M1354 570L1498 1029M1360 570L1511 1029M1366 570L1524 1029M1372 570L1537 1029M1378 570L1550 1029M1384 570L1563 1029M1390 570L1576 1029M1396 570L1589 1029M1402 570L1603 1029M1414 570L1629 1029M1419 570L1642 1029M1425 570L1655 1029M1431 570L1668 1029M1437 570L1681 1029M1443 570L1694 1029M1449 570L1707 1029M1455 570L1720 1029M1461 570L1734 1029M1473 570L1760 1029M1479 570L1773 1029M1485 570L1786 1029M1491 570L1799 1029M1497 570L1812 1029M1503 570L1825 1029M1509 570L1838 1029M1515 570L1851 1029M1521 570L1865 1029M1533 570L1891 1029M1538 570L1904 1029M1544 570L1917 1029M1550 570L1930 1029M1556 570L1943 1029M1562 570L1956 1029M1568 570L1969 1029M1574 570L1982 1029M1580 570L1995 1029M1592 570L2022 1029M1598 570L2035 1029M1604 570L2048 1029M1610 570L2061 1029M1616 570L2074 1029M1622 570L2087 1029M1628 570L2100 1029M1634 570L2113 1029M1640 570L2126 1029M1652 570L2153 1029M1657 570L2166 1029M1663 570L2179 1029M1669 570L2192 1029M1675 570L2205 1029M1681 570L2218 1029M1687 570L2231 1029M1693 570L2244 1029M1699 570L2257 1029M1711 570L2284 1029M1717 570L2297 1029M1723 570L2310 1029M427 1025.7H2043M427 1013.3H2043M427 1001.3H2043M427 989.6H2043M427 978.3H2043M427 967.2H2043M427 956.5H2043M427 935.9H2043M427 926.0H2043M427 916.3H2043M427 907.0H2043M427 897.8H2043M427 888.9H2043M427 880.2H2043M427 871.7H2043M427 863.4H2043M427 847.4H2043M427 839.7H2043M427 832.2H2043M427 824.9H2043M427 817.7H2043M427 810.6H2043M427 803.8H2043M427 797.0H2043M427 790.5H2043M427 777.7H2043M427 771.5H2043M427 765.5H2043M427 759.6H2043M427 753.8H2043M427 748.1H2043M427 742.5H2043M427 737.1H2043M427 731.7H2043M427 721.3H2043M427 716.3H2043M427 711.3H2043M427 706.5H2043M427 701.7H2043M427 697.0H2043M427 692.4H2043M427 687.9H2043M427 683.4H2043M427 674.8H2043M427 670.6H2043M427 666.4H2043M427 662.4H2043M427 658.4H2043M427 654.4H2043M427 650.6H2043M427 646.7H2043M427 643.0H2043M427 635.7H2043M427 632.1H2043M427 628.6H2043M427 625.2H2043M427 621.8H2043M427 618.4H2043M427 615.1H2043M427 611.9H2043M427 608.7H2043M427 602.4H2043" stroke="url(#gfade2)" stroke-width="1" fill="none"/><path d="M593.2 928.8 L1851.4 928.8 L1490.7 495.7 L968.1 495.7Z" fill="#262935"/><path d="M719.0 928.8 L844.8 928.8 L892.9 837.4 L782.6 837.4Z" fill="#373a49"/><path d="M970.7 928.8 L1096.5 928.8 L1113.5 837.4 L1003.2 837.4Z" fill="#373a49"/><path d="M1222.3 928.8 L1348.1 928.8 L1334.1 837.4 L1223.8 837.4Z" fill="#373a49"/><path d="M1473.9 928.8 L1599.8 928.8 L1554.7 837.4 L1444.4 837.4Z" fill="#373a49"/><path d="M1725.6 928.8 L1851.4 928.8 L1775.3 837.4 L1665.0 837.4Z" fill="#373a49"/><path d="M672.3 837.4 L782.6 837.4 L832.2 766.1 L734.1 766.1Z" fill="#373a49"/><path d="M892.9 837.4 L1003.2 837.4 L1028.6 766.1 L930.4 766.1Z" fill="#373a49"/><path d="M1113.5 837.4 L1223.8 837.4 L1225.0 766.1 L1126.8 766.1Z" fill="#373a49"/><path d="M1334.1 837.4 L1444.4 837.4 L1421.3 766.1 L1323.1 766.1Z" fill="#373a49"/><path d="M1554.7 837.4 L1665.0 837.4 L1617.7 766.1 L1519.5 766.1Z" fill="#373a49"/><path d="M832.2 766.1 L930.4 766.1 L960.5 708.9 L872.0 708.9Z" fill="#373a49"/><path d="M1028.6 766.1 L1126.8 766.1 L1137.4 708.9 L1049.0 708.9Z" fill="#373a49"/><path d="M1225.0 766.1 L1323.1 766.1 L1314.4 708.9 L1225.9 708.9Z" fill="#373a49"/><path d="M1421.3 766.1 L1519.5 766.1 L1491.3 708.9 L1402.8 708.9Z" fill="#373a49"/><path d="M1617.7 766.1 L1715.9 766.1 L1668.2 708.9 L1579.8 708.9Z" fill="#373a49"/><path d="M783.6 708.9 L872.0 708.9 L904.7 662.0 L824.2 662.0Z" fill="#373a49"/><path d="M960.5 708.9 L1049.0 708.9 L1065.7 662.0 L985.2 662.0Z" fill="#373a49"/><path d="M1137.4 708.9 L1225.9 708.9 L1226.7 662.0 L1146.2 662.0Z" fill="#373a49"/><path d="M1314.4 708.9 L1402.8 708.9 L1387.7 662.0 L1307.2 662.0Z" fill="#373a49"/><path d="M1491.3 708.9 L1579.8 708.9 L1548.7 662.0 L1468.2 662.0Z" fill="#373a49"/><path d="M904.7 662.0 L985.2 662.0 L1005.8 622.8 L931.9 622.8Z" fill="#373a49"/><path d="M1065.7 662.0 L1146.2 662.0 L1153.5 622.8 L1079.6 622.8Z" fill="#373a49"/><path d="M1226.7 662.0 L1307.2 662.0 L1301.1 622.8 L1227.3 622.8Z" fill="#373a49"/><path d="M1387.7 662.0 L1468.2 662.0 L1448.8 622.8 L1375.0 622.8Z" fill="#373a49"/><path d="M1548.7 662.0 L1629.1 662.0 L1596.5 622.8 L1522.7 622.8Z" fill="#373a49"/><path d="M858.1 622.8 L931.9 622.8 L955.0 589.6 L886.8 589.6Z" fill="#373a49"/><path d="M1005.8 622.8 L1079.6 622.8 L1091.4 589.6 L1023.2 589.6Z" fill="#373a49"/><path d="M1153.5 622.8 L1227.3 622.8 L1227.8 589.6 L1159.6 589.6Z" fill="#373a49"/><path d="M1301.1 622.8 L1375.0 622.8 L1364.3 589.6 L1296.1 589.6Z" fill="#373a49"/><path d="M1448.8 622.8 L1522.7 622.8 L1500.7 589.6 L1432.5 589.6Z" fill="#373a49"/><path d="M955.0 589.6 L1023.2 589.6 L1038.2 561.1 L974.8 561.1Z" fill="#373a49"/><path d="M1091.4 589.6 L1159.6 589.6 L1164.9 561.1 L1101.6 561.1Z" fill="#373a49"/><path d="M1227.8 589.6 L1296.1 589.6 L1291.7 561.1 L1228.3 561.1Z" fill="#373a49"/><path d="M1364.3 589.6 L1432.5 589.6 L1418.4 561.1 L1355.1 561.1Z" fill="#373a49"/><path d="M1500.7 589.6 L1568.9 589.6 L1545.2 561.1 L1481.8 561.1Z" fill="#373a49"/><path d="M911.4 561.1 L974.8 561.1 L992.0 536.4 L932.8 536.4Z" fill="#373a49"/><path d="M1038.2 561.1 L1101.6 561.1 L1110.3 536.4 L1051.2 536.4Z" fill="#373a49"/><path d="M1164.9 561.1 L1228.3 561.1 L1228.7 536.4 L1169.5 536.4Z" fill="#373a49"/><path d="M1291.7 561.1 L1355.1 561.1 L1347.1 536.4 L1287.9 536.4Z" fill="#373a49"/><path d="M1418.4 561.1 L1481.8 561.1 L1465.4 536.4 L1406.3 536.4Z" fill="#373a49"/><path d="M992.0 536.4 L1051.2 536.4 L1062.5 514.8 L1007.0 514.8Z" fill="#353848"/><path d="M1110.3 536.4 L1169.5 536.4 L1173.6 514.8 L1118.1 514.8Z" fill="#353848"/><path d="M1228.7 536.4 L1287.9 536.4 L1284.6 514.8 L1229.1 514.8Z" fill="#353848"/><path d="M1347.1 536.4 L1406.3 536.4 L1395.6 514.8 L1340.1 514.8Z" fill="#353848"/><path d="M1465.4 536.4 L1524.6 536.4 L1506.6 514.8 L1451.1 514.8Z" fill="#353848"/><path d="M951.5 514.8 L1007.0 514.8 L1020.3 495.7 L968.1 495.7Z" fill="#353848"/><path d="M1062.5 514.8 L1118.1 514.8 L1124.9 495.7 L1072.6 495.7Z" fill="#353848"/><path d="M1173.6 514.8 L1229.1 514.8 L1229.4 495.7 L1177.1 495.7Z" fill="#353848"/><path d="M1284.6 514.8 L1340.1 514.8 L1333.9 495.7 L1281.6 495.7Z" fill="#353848"/><path d="M1395.6 514.8 L1451.1 514.8 L1438.4 495.7 L1386.2 495.7Z" fill="#353848"/><path d="M719 928.8L731.6 928.8L738.6 918.5L726.2 918.5ZM744.2 928.8L756.8 928.8L763.4 918.5L751 918.5ZM769.3 928.8L781.9 928.8L788.2 918.5L775.8 918.5ZM794.5 928.8L807.1 928.8L813 918.5L800.6 918.5ZM819.7 928.8L832.3 928.8L837.8 918.5L825.4 918.5ZM738.6 918.5L751 918.5L757.6 908.5L745.4 908.5ZM763.4 918.5L775.8 918.5L782.1 908.5L769.8 908.5ZM788.2 918.5L800.6 918.5L806.6 908.5L794.3 908.5ZM813 918.5L825.4 918.5L831 908.5L818.8 908.5ZM837.8 918.5L850.2 918.5L855.5 908.5L843.3 908.5ZM733.1 908.5L745.4 908.5L752 898.8L739.9 898.8ZM757.6 908.5L769.8 908.5L776.1 898.8L764 898.8ZM782.1 908.5L794.3 908.5L800.3 898.8L788.2 898.8ZM806.6 908.5L818.8 908.5L824.4 898.8L812.3 898.8ZM831 908.5L843.3 908.5L848.6 898.8L836.5 898.8ZM752 898.8L764 898.8L770.3 889.3L758.4 889.3ZM776.1 898.8L788.2 898.8L794.1 889.3L782.2 889.3ZM800.3 898.8L812.3 898.8L818 889.3L806 889.3ZM824.4 898.8L836.5 898.8L841.8 889.3L829.9 889.3ZM848.6 898.8L860.6 898.8L865.6 889.3L853.7 889.3ZM746.5 889.3L758.4 889.3L764.7 880.1L752.9 880.1ZM770.3 889.3L782.2 889.3L788.2 880.1L776.4 880.1ZM794.1 889.3L806 889.3L811.7 880.1L799.9 880.1ZM818 889.3L829.9 889.3L835.2 880.1L823.4 880.1ZM841.8 889.3L853.7 889.3L858.7 880.1L846.9 880.1ZM764.7 880.1L776.4 880.1L782.4 871.1L770.8 871.1ZM788.2 880.1L799.9 880.1L805.6 871.1L794 871.1ZM811.7 880.1L823.4 880.1L828.8 871.1L817.2 871.1ZM835.2 880.1L846.9 880.1L852 871.1L840.4 871.1ZM858.7 880.1L870.5 880.1L875.2 871.1L863.6 871.1ZM759.2 871.1L770.8 871.1L776.7 862.4L765.2 862.4ZM782.4 871.1L794 871.1L799.6 862.4L788.2 862.4ZM805.6 871.1L817.2 871.1L822.5 862.4L811.1 862.4ZM828.8 871.1L840.4 871.1L845.4 862.4L834 862.4ZM852 871.1L863.6 871.1L868.3 862.4L856.9 862.4ZM776.7 862.4L788.2 862.4L793.8 853.8L782.5 853.8ZM799.6 862.4L811.1 862.4L816.4 853.8L805.1 853.8ZM822.5 862.4L834 862.4L839 853.8L827.7 853.8ZM845.4 862.4L856.9 862.4L861.6 853.8L850.3 853.8ZM868.3 862.4L879.8 862.4L884.3 853.8L873 853.8ZM771.2 853.8L782.5 853.8L788.1 845.5L777 845.5ZM793.8 853.8L805.1 853.8L810.5 845.5L799.3 845.5ZM816.4 853.8L827.7 853.8L832.8 845.5L821.6 845.5ZM839 853.8L850.3 853.8L855.1 845.5L844 845.5ZM861.6 853.8L873 853.8L877.5 845.5L866.3 845.5ZM788.1 845.5L799.3 845.5L804.7 837.4L793.6 837.4ZM810.5 845.5L821.6 845.5L826.7 837.4L815.7 837.4ZM832.8 845.5L844 845.5L848.8 837.4L837.8 837.4ZM855.1 845.5L866.3 845.5L870.8 837.4L859.8 837.4ZM877.5 845.5L888.6 845.5L892.9 837.4L881.9 837.4ZM970.7 928.8L983.2 928.8L986.7 918.5L974.3 918.5ZM995.8 928.8L1008.4 928.8L1011.5 918.5L999.1 918.5ZM1021 928.8L1033.6 928.8L1036.4 918.5L1024 918.5ZM1046.2 928.8L1058.7 928.8L1061.2 918.5L1048.8 918.5ZM1071.3 928.8L1083.9 928.8L1086 918.5L1073.6 918.5ZM986.7 918.5L999.1 918.5L1002.4 908.5L990.1 908.5ZM1011.5 918.5L1024 918.5L1026.8 908.5L1014.6 908.5ZM1036.4 918.5L1048.8 918.5L1051.3 908.5L1039.1 908.5ZM1061.2 918.5L1073.6 918.5L1075.8 908.5L1063.5 908.5ZM1086 918.5L1098.4 918.5L1100.3 908.5L1088 908.5ZM977.9 908.5L990.1 908.5L993.4 898.8L981.3 898.8ZM1002.4 908.5L1014.6 908.5L1017.6 898.8L1005.5 898.8ZM1026.8 908.5L1039.1 908.5L1041.7 898.8L1029.6 898.8ZM1051.3 908.5L1063.5 908.5L1065.9 898.8L1053.8 898.8ZM1075.8 908.5L1088 908.5L1090 898.8L1077.9 898.8ZM993.4 898.8L1005.5 898.8L1008.5 889.3L996.6 889.3ZM1017.6 898.8L1029.6 898.8L1032.4 889.3L1020.5 889.3ZM1041.7 898.8L1053.8 898.8L1056.2 889.3L1044.3 889.3ZM1065.9 898.8L1077.9 898.8L1080 889.3L1068.1 889.3ZM1090 898.8L1102.1 898.8L1103.8 889.3L1091.9 889.3ZM984.7 889.3L996.6 889.3L999.8 880.1L988 880.1ZM1008.5 889.3L1020.5 889.3L1023.3 880.1L1011.5 880.1ZM1032.4 889.3L1044.3 889.3L1046.8 880.1L1035 880.1ZM1056.2 889.3L1068.1 889.3L1070.3 880.1L1058.5 880.1ZM1080 889.3L1091.9 889.3L1093.8 880.1L1082 880.1ZM999.8 880.1L1011.5 880.1L1014.4 871.1L1002.8 871.1ZM1023.3 880.1L1035 880.1L1037.6 871.1L1026 871.1ZM1046.8 880.1L1058.5 880.1L1060.8 871.1L1049.2 871.1ZM1070.3 880.1L1082 880.1L1084 871.1L1072.4 871.1ZM1093.8 880.1L1105.5 880.1L1107.2 871.1L1095.6 871.1ZM991.2 871.1L1002.8 871.1L1005.8 862.4L994.3 862.4ZM1014.4 871.1L1026 871.1L1028.7 862.4L1017.2 862.4ZM1037.6 871.1L1049.2 871.1L1051.6 862.4L1040.1 862.4ZM1060.8 871.1L1072.4 871.1L1074.5 862.4L1063 862.4ZM1084 871.1L1095.6 871.1L1097.4 862.4L1085.9 862.4ZM1005.8 862.4L1017.2 862.4L1020 853.8L1008.7 853.8ZM1028.7 862.4L1040.1 862.4L1042.6 853.8L1031.3 853.8ZM1051.6 862.4L1063 862.4L1065.2 853.8L1053.9 853.8ZM1074.5 862.4L1085.9 862.4L1087.8 853.8L1076.5 853.8ZM1097.4 862.4L1108.9 862.4L1110.4 853.8L1099.1 853.8ZM997.4 853.8L1008.7 853.8L1011.5 845.5L1000.3 845.5ZM1020 853.8L1031.3 853.8L1033.8 845.5L1022.6 845.5ZM1042.6 853.8L1053.9 853.8L1056.2 845.5L1045 845.5ZM1065.2 853.8L1076.5 853.8L1078.5 845.5L1067.3 845.5ZM1087.8 853.8L1099.1 853.8L1100.8 845.5L1089.7 845.5ZM1011.5 845.5L1022.6 845.5L1025.3 837.4L1014.2 837.4ZM1033.8 845.5L1045 845.5L1047.3 837.4L1036.3 837.4ZM1056.2 845.5L1067.3 845.5L1069.4 837.4L1058.3 837.4ZM1078.5 845.5L1089.7 845.5L1091.4 837.4L1080.4 837.4ZM1100.8 845.5L1112 845.5L1113.5 837.4L1102.5 837.4ZM1222.3 928.8L1234.9 928.8L1234.9 918.5L1222.5 918.5ZM1247.5 928.8L1260 928.8L1259.7 918.5L1247.3 918.5ZM1272.6 928.8L1285.2 928.8L1284.5 918.5L1272.1 918.5ZM1297.8 928.8L1310.4 928.8L1309.3 918.5L1296.9 918.5ZM1323 928.8L1335.5 928.8L1334.1 918.5L1321.7 918.5ZM1234.9 918.5L1247.3 918.5L1247.1 908.5L1234.9 908.5ZM1259.7 918.5L1272.1 918.5L1271.6 908.5L1259.3 908.5ZM1284.5 918.5L1296.9 918.5L1296.1 908.5L1283.8 908.5ZM1309.3 918.5L1321.7 918.5L1320.5 908.5L1308.3 908.5ZM1334.1 918.5L1346.5 918.5L1345 908.5L1332.8 908.5ZM1222.6 908.5L1234.9 908.5L1234.9 898.8L1222.8 898.8ZM1247.1 908.5L1259.3 908.5L1259 898.8L1246.9 898.8ZM1271.6 908.5L1283.8 908.5L1283.2 898.8L1271.1 898.8ZM1296.1 908.5L1308.3 908.5L1307.3 898.8L1295.2 898.8ZM1320.5 908.5L1332.8 908.5L1331.4 898.8L1319.4 898.8ZM1234.9 898.8L1246.9 898.8L1246.8 889.3L1234.9 889.3ZM1259 898.8L1271.1 898.8L1270.6 889.3L1258.7 889.3ZM1283.2 898.8L1295.2 898.8L1294.4 889.3L1282.5 889.3ZM1307.3 898.8L1319.4 898.8L1318.2 889.3L1306.3 889.3ZM1331.4 898.8L1343.5 898.8L1342.1 889.3L1330.1 889.3ZM1222.9 889.3L1234.9 889.3L1234.9 880.1L1223.1 880.1ZM1246.8 889.3L1258.7 889.3L1258.4 880.1L1246.6 880.1ZM1270.6 889.3L1282.5 889.3L1281.9 880.1L1270.1 880.1ZM1294.4 889.3L1306.3 889.3L1305.4 880.1L1293.6 880.1ZM1318.2 889.3L1330.1 889.3L1328.9 880.1L1317.1 880.1ZM1234.9 880.1L1246.6 880.1L1246.4 871.1L1234.8 871.1ZM1258.4 880.1L1270.1 880.1L1269.7 871.1L1258 871.1ZM1281.9 880.1L1293.6 880.1L1292.9 871.1L1281.3 871.1ZM1305.4 880.1L1317.1 880.1L1316.1 871.1L1304.5 871.1ZM1328.9 880.1L1340.6 880.1L1339.3 871.1L1327.7 871.1ZM1223.2 871.1L1234.8 871.1L1234.8 862.4L1223.4 862.4ZM1246.4 871.1L1258 871.1L1257.7 862.4L1246.3 862.4ZM1269.7 871.1L1281.3 871.1L1280.7 862.4L1269.2 862.4ZM1292.9 871.1L1304.5 871.1L1303.6 862.4L1292.1 862.4ZM1316.1 871.1L1327.7 871.1L1326.5 862.4L1315 862.4ZM1234.8 862.4L1246.3 862.4L1246.1 853.8L1234.8 853.8ZM1257.7 862.4L1269.2 862.4L1268.8 853.8L1257.5 853.8ZM1280.7 862.4L1292.1 862.4L1291.4 853.8L1280.1 853.8ZM1303.6 862.4L1315 862.4L1314 853.8L1302.7 853.8ZM1326.5 862.4L1337.9 862.4L1336.6 853.8L1325.3 853.8ZM1223.5 853.8L1234.8 853.8L1234.8 845.5L1223.7 845.5ZM1246.1 853.8L1257.5 853.8L1257.2 845.5L1246 845.5ZM1268.8 853.8L1280.1 853.8L1279.5 845.5L1268.3 845.5ZM1291.4 853.8L1302.7 853.8L1301.8 845.5L1290.7 845.5ZM1314 853.8L1325.3 853.8L1324.2 845.5L1313 845.5ZM1234.8 845.5L1246 845.5L1245.9 837.4L1234.8 837.4ZM1257.2 845.5L1268.3 845.5L1267.9 837.4L1256.9 837.4ZM1279.5 845.5L1290.7 845.5L1290 837.4L1278.9 837.4ZM1301.8 845.5L1313 845.5L1312 837.4L1301 837.4ZM1324.2 845.5L1335.3 845.5L1334.1 837.4L1323.1 837.4ZM1473.9 928.8L1486.5 928.8L1483 918.5L1470.6 918.5ZM1499.1 928.8L1511.7 928.8L1507.8 918.5L1495.4 918.5ZM1524.3 928.8L1536.8 928.8L1532.7 918.5L1520.2 918.5ZM1549.4 928.8L1562 928.8L1557.5 918.5L1545.1 918.5ZM1574.6 928.8L1587.2 928.8L1582.3 918.5L1569.9 918.5ZM1483 918.5L1495.4 918.5L1491.9 908.5L1479.6 908.5ZM1507.8 918.5L1520.2 918.5L1516.3 908.5L1504.1 908.5ZM1532.7 918.5L1545.1 918.5L1540.8 908.5L1528.6 908.5ZM1557.5 918.5L1569.9 918.5L1565.3 908.5L1553 908.5ZM1582.3 918.5L1594.7 918.5L1589.8 908.5L1577.5 908.5ZM1467.4 908.5L1479.6 908.5L1476.3 898.8L1464.2 898.8ZM1491.9 908.5L1504.1 908.5L1500.5 898.8L1488.4 898.8ZM1516.3 908.5L1528.6 908.5L1524.6 898.8L1512.5 898.8ZM1540.8 908.5L1553 908.5L1548.7 898.8L1536.7 898.8ZM1565.3 908.5L1577.5 908.5L1572.9 898.8L1560.8 898.8ZM1476.3 898.8L1488.4 898.8L1485 889.3L1473.1 889.3ZM1500.5 898.8L1512.5 898.8L1508.8 889.3L1496.9 889.3ZM1524.6 898.8L1536.7 898.8L1532.6 889.3L1520.7 889.3ZM1548.7 898.8L1560.8 898.8L1556.5 889.3L1544.6 889.3ZM1572.9 898.8L1585 898.8L1580.3 889.3L1568.4 889.3ZM1461.2 889.3L1473.1 889.3L1469.9 880.1L1458.2 880.1ZM1485 889.3L1496.9 889.3L1493.5 880.1L1481.7 880.1ZM1508.8 889.3L1520.7 889.3L1517 880.1L1505.2 880.1ZM1532.6 889.3L1544.6 889.3L1540.5 880.1L1528.7 880.1ZM1556.5 889.3L1568.4 889.3L1564 880.1L1552.2 880.1ZM1469.9 880.1L1481.7 880.1L1478.5 871.1L1466.9 871.1ZM1493.5 880.1L1505.2 880.1L1501.7 871.1L1490.1 871.1ZM1517 880.1L1528.7 880.1L1524.9 871.1L1513.3 871.1ZM1540.5 880.1L1552.2 880.1L1548.1 871.1L1536.5 871.1ZM1564 880.1L1575.7 880.1L1571.3 871.1L1559.7 871.1ZM1455.3 871.1L1466.9 871.1L1463.9 862.4L1452.5 862.4ZM1478.5 871.1L1490.1 871.1L1486.8 862.4L1475.4 862.4ZM1501.7 871.1L1513.3 871.1L1509.7 862.4L1498.3 862.4ZM1524.9 871.1L1536.5 871.1L1532.6 862.4L1521.2 862.4ZM1548.1 871.1L1559.7 871.1L1555.5 862.4L1544.1 862.4ZM1463.9 862.4L1475.4 862.4L1472.3 853.8L1461 853.8ZM1486.8 862.4L1498.3 862.4L1494.9 853.8L1483.6 853.8ZM1509.7 862.4L1521.2 862.4L1517.5 853.8L1506.2 853.8ZM1532.6 862.4L1544.1 862.4L1540.2 853.8L1528.9 853.8ZM1555.5 862.4L1567 862.4L1562.8 853.8L1551.5 853.8ZM1449.7 853.8L1461 853.8L1458.2 845.5L1447 845.5ZM1472.3 853.8L1483.6 853.8L1480.5 845.5L1469.3 845.5ZM1494.9 853.8L1506.2 853.8L1502.8 845.5L1491.7 845.5ZM1517.5 853.8L1528.9 853.8L1525.2 845.5L1514 845.5ZM1540.2 853.8L1551.5 853.8L1547.5 845.5L1536.3 845.5ZM1458.2 845.5L1469.3 845.5L1466.4 837.4L1455.4 837.4ZM1480.5 845.5L1491.7 845.5L1488.5 837.4L1477.5 837.4ZM1502.8 845.5L1514 845.5L1510.6 837.4L1499.5 837.4ZM1525.2 845.5L1536.3 845.5L1532.6 837.4L1521.6 837.4ZM1547.5 845.5L1558.7 845.5L1554.7 837.4L1543.6 837.4ZM1725.6 928.8L1738.2 928.8L1731.2 918.5L1718.8 918.5ZM1750.7 928.8L1763.3 928.8L1756 918.5L1743.6 918.5ZM1775.9 928.8L1788.5 928.8L1780.8 918.5L1768.4 918.5ZM1801.1 928.8L1813.7 928.8L1805.6 918.5L1793.2 918.5ZM1826.2 928.8L1838.8 928.8L1830.4 918.5L1818 918.5ZM1731.2 918.5L1743.6 918.5L1736.6 908.5L1724.4 908.5ZM1756 918.5L1768.4 918.5L1761.1 908.5L1748.8 908.5ZM1780.8 918.5L1793.2 918.5L1785.6 908.5L1773.3 908.5ZM1805.6 918.5L1818 918.5L1810 908.5L1797.8 908.5ZM1830.4 918.5L1842.8 918.5L1834.5 908.5L1822.3 908.5ZM1712.1 908.5L1724.4 908.5L1717.8 898.8L1705.7 898.8ZM1736.6 908.5L1748.8 908.5L1741.9 898.8L1729.8 898.8ZM1761.1 908.5L1773.3 908.5L1766 898.8L1754 898.8ZM1785.6 908.5L1797.8 908.5L1790.2 898.8L1778.1 898.8ZM1810 908.5L1822.3 908.5L1814.3 898.8L1802.3 898.8ZM1717.8 898.8L1729.8 898.8L1723.2 889.3L1711.3 889.3ZM1741.9 898.8L1754 898.8L1747 889.3L1735.1 889.3ZM1766 898.8L1778.1 898.8L1770.9 889.3L1759 889.3ZM1790.2 898.8L1802.3 898.8L1794.7 889.3L1782.8 889.3ZM1814.3 898.8L1826.4 898.8L1818.5 889.3L1806.6 889.3ZM1699.4 889.3L1711.3 889.3L1705 880.1L1693.3 880.1ZM1723.2 889.3L1735.1 889.3L1728.5 880.1L1716.8 880.1ZM1747 889.3L1759 889.3L1752.1 880.1L1740.3 880.1ZM1770.9 889.3L1782.8 889.3L1775.6 880.1L1763.8 880.1ZM1794.7 889.3L1806.6 889.3L1799.1 880.1L1787.3 880.1ZM1705 880.1L1716.8 880.1L1710.5 871.1L1698.9 871.1ZM1728.5 880.1L1740.3 880.1L1733.7 871.1L1722.1 871.1ZM1752.1 880.1L1763.8 880.1L1756.9 871.1L1745.3 871.1ZM1775.6 880.1L1787.3 880.1L1780.1 871.1L1768.5 871.1ZM1799.1 880.1L1810.8 880.1L1803.4 871.1L1791.7 871.1ZM1687.3 871.1L1698.9 871.1L1693 862.4L1681.5 862.4ZM1710.5 871.1L1722.1 871.1L1715.9 862.4L1704.4 862.4ZM1733.7 871.1L1745.3 871.1L1738.8 862.4L1727.3 862.4ZM1756.9 871.1L1768.5 871.1L1761.7 862.4L1750.2 862.4ZM1780.1 871.1L1791.7 871.1L1784.6 862.4L1773.2 862.4ZM1693 862.4L1704.4 862.4L1698.5 853.8L1687.2 853.8ZM1715.9 862.4L1727.3 862.4L1721.1 853.8L1709.8 853.8ZM1738.8 862.4L1750.2 862.4L1743.7 853.8L1732.4 853.8ZM1761.7 862.4L1773.2 862.4L1766.3 853.8L1755 853.8ZM1784.6 862.4L1796.1 862.4L1789 853.8L1777.6 853.8ZM1675.9 853.8L1687.2 853.8L1681.5 845.5L1670.4 845.5ZM1698.5 853.8L1709.8 853.8L1703.9 845.5L1692.7 845.5ZM1721.1 853.8L1732.4 853.8L1726.2 845.5L1715 845.5ZM1743.7 853.8L1755 853.8L1748.5 845.5L1737.4 845.5ZM1766.3 853.8L1777.6 853.8L1770.9 845.5L1759.7 845.5ZM1681.5 845.5L1692.7 845.5L1687 837.4L1676 837.4ZM1703.9 845.5L1715 845.5L1709.1 837.4L1698.1 837.4ZM1726.2 845.5L1737.4 845.5L1731.2 837.4L1720.1 837.4ZM1748.5 845.5L1759.7 845.5L1753.2 837.4L1742.2 837.4ZM1770.9 845.5L1782 845.5L1775.3 837.4L1764.2 837.4ZM672.3 837.4L683.3 837.4L690.1 829.5L679.2 829.5ZM694.4 837.4L705.4 837.4L711.9 829.5L701 829.5ZM716.4 837.4L727.5 837.4L733.6 829.5L722.7 829.5ZM738.5 837.4L749.5 837.4L755.4 829.5L744.5 829.5ZM760.6 837.4L771.6 837.4L777.2 829.5L766.3 829.5ZM690.1 829.5L701 829.5L707.4 821.8L696.6 821.8ZM711.9 829.5L722.7 829.5L728.9 821.8L718.1 821.8ZM733.6 829.5L744.5 829.5L750.4 821.8L739.7 821.8ZM755.4 829.5L766.3 829.5L772 821.8L761.2 821.8ZM777.2 829.5L788.1 829.5L793.5 821.8L782.7 821.8ZM685.9 821.8L696.6 821.8L703 814.2L692.4 814.2ZM707.4 821.8L718.1 821.8L724.3 814.2L713.7 814.2ZM728.9 821.8L739.7 821.8L745.6 814.2L734.9 814.2ZM750.4 821.8L761.2 821.8L766.8 814.2L756.2 814.2ZM772 821.8L782.7 821.8L788.1 814.2L777.5 814.2ZM703 814.2L713.7 814.2L719.8 806.9L709.3 806.9ZM724.3 814.2L734.9 814.2L740.8 806.9L730.3 806.9ZM745.6 814.2L756.2 814.2L761.8 806.9L751.3 806.9ZM766.8 814.2L777.5 814.2L782.8 806.9L772.3 806.9ZM788.1 814.2L798.7 814.2L803.9 806.9L793.3 806.9ZM698.8 806.9L709.3 806.9L715.4 799.7L705 799.7ZM719.8 806.9L730.3 806.9L736.1 799.7L725.8 799.7ZM740.8 806.9L751.3 806.9L756.9 799.7L746.5 799.7ZM761.8 806.9L772.3 806.9L777.7 799.7L767.3 799.7ZM782.8 806.9L793.3 806.9L798.5 799.7L788.1 799.7ZM715.4 799.7L725.8 799.7L731.6 792.6L721.3 792.6ZM736.1 799.7L746.5 799.7L752.1 792.6L741.9 792.6ZM756.9 799.7L767.3 799.7L772.7 792.6L762.4 792.6ZM777.7 799.7L788.1 799.7L793.2 792.6L782.9 792.6ZM798.5 799.7L808.9 799.7L813.8 792.6L803.5 792.6ZM711.1 792.6L721.3 792.6L727.2 785.8L717 785.8ZM731.6 792.6L741.9 792.6L747.5 785.8L737.3 785.8ZM752.1 792.6L762.4 792.6L767.8 785.8L757.6 785.8ZM772.7 792.6L782.9 792.6L788.1 785.8L777.9 785.8ZM793.2 792.6L803.5 792.6L808.4 785.8L798.2 785.8ZM727.2 785.8L737.3 785.8L742.9 779.1L732.9 779.1ZM747.5 785.8L757.6 785.8L763 779.1L752.9 779.1ZM767.8 785.8L777.9 785.8L783 779.1L773 779.1ZM788.1 785.8L798.2 785.8L803.1 779.1L793.1 779.1ZM808.4 785.8L818.5 785.8L823.2 779.1L813.2 779.1ZM722.8 779.1L732.9 779.1L738.4 772.5L728.5 772.5ZM742.9 779.1L752.9 779.1L758.3 772.5L748.3 772.5ZM763 779.1L773 779.1L778.1 772.5L768.2 772.5ZM783 779.1L793.1 779.1L798 772.5L788.1 772.5ZM803.1 779.1L813.2 779.1L817.8 772.5L807.9 772.5ZM738.4 772.5L748.3 772.5L753.7 766.1L743.9 766.1ZM758.3 772.5L768.2 772.5L773.3 766.1L763.5 766.1ZM778.1 772.5L788.1 772.5L793 766.1L783.1 766.1ZM798 772.5L807.9 772.5L812.6 766.1L802.8 766.1ZM817.8 772.5L827.8 772.5L832.2 766.1L822.4 766.1ZM892.9 837.4L903.9 837.4L908 829.5L897.1 829.5ZM915 837.4L926 837.4L929.8 829.5L918.9 829.5ZM937 837.4L948.1 837.4L951.5 829.5L940.6 829.5ZM959.1 837.4L970.1 837.4L973.3 829.5L962.4 829.5ZM981.1 837.4L992.2 837.4L995.1 829.5L984.2 829.5ZM908 829.5L918.9 829.5L922.7 821.8L911.9 821.8ZM929.8 829.5L940.6 829.5L944.2 821.8L933.4 821.8ZM951.5 829.5L962.4 829.5L965.7 821.8L955 821.8ZM973.3 829.5L984.2 829.5L987.2 821.8L976.5 821.8ZM995.1 829.5L1006 829.5L1008.8 821.8L998 821.8ZM901.1 821.8L911.9 821.8L915.7 814.2L905.1 814.2ZM922.7 821.8L933.4 821.8L937 814.2L926.4 814.2ZM944.2 821.8L955 821.8L958.3 814.2L947.6 814.2ZM965.7 821.8L976.5 821.8L979.5 814.2L968.9 814.2ZM987.2 821.8L998 821.8L1000.8 814.2L990.2 814.2ZM915.7 814.2L926.4 814.2L930 806.9L919.5 806.9ZM937 814.2L947.6 814.2L951 806.9L940.5 806.9ZM958.3 814.2L968.9 814.2L972 806.9L961.5 806.9ZM979.5 814.2L990.2 814.2L993.1 806.9L982.5 806.9ZM1000.8 814.2L1011.5 814.2L1014.1 806.9L1003.6 806.9ZM909 806.9L919.5 806.9L923.1 799.7L912.8 799.7ZM930 806.9L940.5 806.9L943.9 799.7L933.5 799.7ZM951 806.9L961.5 806.9L964.7 799.7L954.3 799.7ZM972 806.9L982.5 806.9L985.5 799.7L975.1 799.7ZM993.1 806.9L1003.6 806.9L1006.2 799.7L995.9 799.7ZM923.1 799.7L933.5 799.7L937 792.6L926.7 792.6ZM943.9 799.7L954.3 799.7L957.5 792.6L947.3 792.6ZM964.7 799.7L975.1 799.7L978.1 792.6L967.8 792.6ZM985.5 799.7L995.9 799.7L998.6 792.6L988.3 792.6ZM1006.2 799.7L1016.6 799.7L1019.1 792.6L1008.9 792.6ZM916.4 792.6L926.7 792.6L930.2 785.8L920.1 785.8ZM937 792.6L947.3 792.6L950.5 785.8L940.4 785.8ZM957.5 792.6L967.8 792.6L970.8 785.8L960.7 785.8ZM978.1 792.6L988.3 792.6L991.1 785.8L981 785.8ZM998.6 792.6L1008.9 792.6L1011.4 785.8L1001.3 785.8ZM930.2 785.8L940.4 785.8L943.7 779.1L933.6 779.1ZM950.5 785.8L960.7 785.8L963.7 779.1L953.7 779.1ZM970.8 785.8L981 785.8L983.8 779.1L973.8 779.1ZM991.1 785.8L1001.3 785.8L1003.9 779.1L993.9 779.1ZM1011.4 785.8L1021.6 785.8L1024 779.1L1013.9 779.1ZM923.6 779.1L933.6 779.1L937 772.5L927 772.5ZM943.7 779.1L953.7 779.1L956.8 772.5L946.9 772.5ZM963.7 779.1L973.8 779.1L976.7 772.5L966.7 772.5ZM983.8 779.1L993.9 779.1L996.5 772.5L986.6 772.5ZM1003.9 779.1L1013.9 779.1L1016.4 772.5L1006.5 772.5ZM937 772.5L946.9 772.5L950.1 766.1L940.2 766.1ZM956.8 772.5L966.7 772.5L969.7 766.1L959.9 766.1ZM976.7 772.5L986.6 772.5L989.3 766.1L979.5 766.1ZM996.5 772.5L1006.5 772.5L1009 766.1L999.1 766.1ZM1016.4 772.5L1026.3 772.5L1028.6 766.1L1018.8 766.1ZM1113.5 837.4L1124.5 837.4L1125.9 829.5L1115 829.5ZM1135.6 837.4L1146.6 837.4L1147.7 829.5L1136.8 829.5ZM1157.6 837.4L1168.6 837.4L1169.4 829.5L1158.6 829.5ZM1179.7 837.4L1190.7 837.4L1191.2 829.5L1180.3 829.5ZM1201.7 837.4L1212.8 837.4L1213 829.5L1202.1 829.5ZM1125.9 829.5L1136.8 829.5L1137.9 821.8L1127.2 821.8ZM1147.7 829.5L1158.6 829.5L1159.5 821.8L1148.7 821.8ZM1169.4 829.5L1180.3 829.5L1181 821.8L1170.2 821.8ZM1191.2 829.5L1202.1 829.5L1202.5 821.8L1191.8 821.8ZM1213 829.5L1223.9 829.5L1224 821.8L1213.3 821.8ZM1116.4 821.8L1127.2 821.8L1128.4 814.2L1117.8 814.2ZM1137.9 821.8L1148.7 821.8L1149.7 814.2L1139.1 814.2ZM1159.5 821.8L1170.2 821.8L1171 814.2L1160.4 814.2ZM1181 821.8L1191.8 821.8L1192.3 814.2L1181.6 814.2ZM1202.5 821.8L1213.3 821.8L1213.5 814.2L1202.9 814.2ZM1128.4 814.2L1139.1 814.2L1140.2 806.9L1129.7 806.9ZM1149.7 814.2L1160.4 814.2L1161.2 806.9L1150.7 806.9ZM1171 814.2L1181.6 814.2L1182.2 806.9L1171.7 806.9ZM1192.3 814.2L1202.9 814.2L1203.3 806.9L1192.8 806.9ZM1213.5 814.2L1224.2 814.2L1224.3 806.9L1213.8 806.9ZM1119.2 806.9L1129.7 806.9L1130.9 799.7L1120.5 799.7ZM1140.2 806.9L1150.7 806.9L1151.7 799.7L1141.3 799.7ZM1161.2 806.9L1171.7 806.9L1172.5 799.7L1162.1 799.7ZM1182.2 806.9L1192.8 806.9L1193.2 799.7L1182.9 799.7ZM1203.3 806.9L1213.8 806.9L1214 799.7L1203.6 799.7ZM1130.9 799.7L1141.3 799.7L1142.4 792.6L1132.1 792.6ZM1151.7 799.7L1162.1 799.7L1162.9 792.6L1152.6 792.6ZM1172.5 799.7L1182.9 799.7L1183.4 792.6L1173.2 792.6ZM1193.2 799.7L1203.6 799.7L1204 792.6L1193.7 792.6ZM1214 799.7L1224.4 799.7L1224.5 792.6L1214.3 792.6ZM1121.8 792.6L1132.1 792.6L1133.3 785.8L1123.1 785.8ZM1142.4 792.6L1152.6 792.6L1153.6 785.8L1143.4 785.8ZM1162.9 792.6L1173.2 792.6L1173.9 785.8L1163.7 785.8ZM1183.4 792.6L1193.7 792.6L1194.2 785.8L1184 785.8ZM1204 792.6L1214.3 792.6L1214.5 785.8L1204.3 785.8ZM1133.3 785.8L1143.4 785.8L1144.4 779.1L1134.4 779.1ZM1153.6 785.8L1163.7 785.8L1164.5 779.1L1154.5 779.1ZM1173.9 785.8L1184 785.8L1184.6 779.1L1174.6 779.1ZM1194.2 785.8L1204.3 785.8L1204.7 779.1L1194.6 779.1ZM1214.5 785.8L1224.6 785.8L1224.7 779.1L1214.7 779.1ZM1124.4 779.1L1134.4 779.1L1135.5 772.5L1125.6 772.5ZM1144.4 779.1L1154.5 779.1L1155.4 772.5L1145.4 772.5ZM1164.5 779.1L1174.6 779.1L1175.2 772.5L1165.3 772.5ZM1184.6 779.1L1194.6 779.1L1195.1 772.5L1185.1 772.5ZM1204.7 779.1L1214.7 779.1L1214.9 772.5L1205 772.5ZM1135.5 772.5L1145.4 772.5L1146.4 766.1L1136.6 766.1ZM1155.4 772.5L1165.3 772.5L1166 766.1L1156.2 766.1ZM1175.2 772.5L1185.1 772.5L1185.7 766.1L1175.9 766.1ZM1195.1 772.5L1205 772.5L1205.3 766.1L1195.5 766.1ZM1214.9 772.5L1224.9 772.5L1225 766.1L1215.1 766.1ZM1334.1 837.4L1345.1 837.4L1343.8 829.5L1332.9 829.5ZM1356.1 837.4L1367.2 837.4L1365.6 829.5L1354.7 829.5ZM1378.2 837.4L1389.2 837.4L1387.3 829.5L1376.5 829.5ZM1400.3 837.4L1411.3 837.4L1409.1 829.5L1398.2 829.5ZM1422.3 837.4L1433.4 837.4L1430.9 829.5L1420 829.5ZM1343.8 829.5L1354.7 829.5L1353.2 821.8L1342.5 821.8ZM1365.6 829.5L1376.5 829.5L1374.7 821.8L1364 821.8ZM1387.3 829.5L1398.2 829.5L1396.3 821.8L1385.5 821.8ZM1409.1 829.5L1420 829.5L1417.8 821.8L1407 821.8ZM1430.9 829.5L1441.8 829.5L1439.3 821.8L1428.6 821.8ZM1331.7 821.8L1342.5 821.8L1341.2 814.2L1330.5 814.2ZM1353.2 821.8L1364 821.8L1362.4 814.2L1351.8 814.2ZM1374.7 821.8L1385.5 821.8L1383.7 814.2L1373.1 814.2ZM1396.3 821.8L1407 821.8L1405 814.2L1394.3 814.2ZM1417.8 821.8L1428.6 821.8L1426.3 814.2L1415.6 814.2ZM1341.2 814.2L1351.8 814.2L1350.4 806.9L1339.9 806.9ZM1362.4 814.2L1373.1 814.2L1371.4 806.9L1360.9 806.9ZM1383.7 814.2L1394.3 814.2L1392.5 806.9L1382 806.9ZM1405 814.2L1415.6 814.2L1413.5 806.9L1403 806.9ZM1426.3 814.2L1436.9 814.2L1434.5 806.9L1424 806.9ZM1329.4 806.9L1339.9 806.9L1338.7 799.7L1328.3 799.7ZM1350.4 806.9L1360.9 806.9L1359.5 799.7L1349.1 799.7ZM1371.4 806.9L1382 806.9L1380.2 799.7L1369.9 799.7ZM1392.5 806.9L1403 806.9L1401 799.7L1390.6 799.7ZM1413.5 806.9L1424 806.9L1421.8 799.7L1411.4 799.7ZM1338.7 799.7L1349.1 799.7L1347.8 792.6L1337.5 792.6ZM1359.5 799.7L1369.9 799.7L1368.3 792.6L1358 792.6ZM1380.2 799.7L1390.6 799.7L1388.8 792.6L1378.6 792.6ZM1401 799.7L1411.4 799.7L1409.4 792.6L1399.1 792.6ZM1421.8 799.7L1432.2 799.7L1429.9 792.6L1419.6 792.6ZM1327.2 792.6L1337.5 792.6L1336.3 785.8L1326.2 785.8ZM1347.8 792.6L1358 792.6L1356.6 785.8L1346.5 785.8ZM1368.3 792.6L1378.6 792.6L1376.9 785.8L1366.8 785.8ZM1388.8 792.6L1399.1 792.6L1397.2 785.8L1387.1 785.8ZM1409.4 792.6L1419.6 792.6L1417.5 785.8L1407.4 785.8ZM1336.3 785.8L1346.5 785.8L1345.2 779.1L1335.2 779.1ZM1356.6 785.8L1366.8 785.8L1365.3 779.1L1355.2 779.1ZM1376.9 785.8L1387.1 785.8L1385.4 779.1L1375.3 779.1ZM1397.2 785.8L1407.4 785.8L1405.4 779.1L1395.4 779.1ZM1417.5 785.8L1427.7 785.8L1425.5 779.1L1415.5 779.1ZM1325.1 779.1L1335.2 779.1L1334.1 772.5L1324.1 772.5ZM1345.2 779.1L1355.2 779.1L1353.9 772.5L1344 772.5ZM1365.3 779.1L1375.3 779.1L1373.8 772.5L1363.8 772.5ZM1385.4 779.1L1395.4 779.1L1393.6 772.5L1383.7 772.5ZM1405.4 779.1L1415.5 779.1L1413.5 772.5L1403.5 772.5ZM1334.1 772.5L1344 772.5L1342.8 766.1L1333 766.1ZM1353.9 772.5L1363.8 772.5L1362.4 766.1L1352.6 766.1ZM1373.8 772.5L1383.7 772.5L1382 766.1L1372.2 766.1ZM1393.6 772.5L1403.5 772.5L1401.7 766.1L1391.9 766.1ZM1413.5 772.5L1423.4 772.5L1421.3 766.1L1411.5 766.1ZM1554.7 837.4L1565.7 837.4L1561.7 829.5L1550.8 829.5ZM1576.7 837.4L1587.8 837.4L1583.5 829.5L1572.6 829.5ZM1598.8 837.4L1609.8 837.4L1605.3 829.5L1594.4 829.5ZM1620.9 837.4L1631.9 837.4L1627 829.5L1616.1 829.5ZM1642.9 837.4L1653.9 837.4L1648.8 829.5L1637.9 829.5ZM1561.7 829.5L1572.6 829.5L1568.5 821.8L1557.7 821.8ZM1583.5 829.5L1594.4 829.5L1590 821.8L1579.3 821.8ZM1605.3 829.5L1616.1 829.5L1611.5 821.8L1600.8 821.8ZM1627 829.5L1637.9 829.5L1633.1 821.8L1622.3 821.8ZM1648.8 829.5L1659.7 829.5L1654.6 821.8L1643.8 821.8ZM1547 821.8L1557.7 821.8L1553.9 814.2L1543.2 814.2ZM1568.5 821.8L1579.3 821.8L1575.2 814.2L1564.5 814.2ZM1590 821.8L1600.8 821.8L1596.4 814.2L1585.8 814.2ZM1611.5 821.8L1622.3 821.8L1617.7 814.2L1607.1 814.2ZM1633.1 821.8L1643.8 821.8L1639 814.2L1628.3 814.2ZM1553.9 814.2L1564.5 814.2L1560.6 806.9L1550.1 806.9ZM1575.2 814.2L1585.8 814.2L1581.7 806.9L1571.1 806.9ZM1596.4 814.2L1607.1 814.2L1602.7 806.9L1592.2 806.9ZM1617.7 814.2L1628.3 814.2L1623.7 806.9L1613.2 806.9ZM1639 814.2L1649.6 814.2L1644.7 806.9L1634.2 806.9ZM1539.6 806.9L1550.1 806.9L1546.5 799.7L1536.1 799.7ZM1560.6 806.9L1571.1 806.9L1567.2 799.7L1556.8 799.7ZM1581.7 806.9L1592.2 806.9L1588 799.7L1577.6 799.7ZM1602.7 806.9L1613.2 806.9L1608.8 799.7L1598.4 799.7ZM1623.7 806.9L1634.2 806.9L1629.6 799.7L1619.2 799.7ZM1546.5 799.7L1556.8 799.7L1553.1 792.6L1542.9 792.6ZM1567.2 799.7L1577.6 799.7L1573.7 792.6L1563.4 792.6ZM1588 799.7L1598.4 799.7L1594.2 792.6L1583.9 792.6ZM1608.8 799.7L1619.2 799.7L1614.8 792.6L1604.5 792.6ZM1629.6 799.7L1640 799.7L1635.3 792.6L1625 792.6ZM1532.6 792.6L1542.9 792.6L1539.4 785.8L1529.2 785.8ZM1553.1 792.6L1563.4 792.6L1559.7 785.8L1549.5 785.8ZM1573.7 792.6L1583.9 792.6L1580 785.8L1569.8 785.8ZM1594.2 792.6L1604.5 792.6L1600.3 785.8L1590.1 785.8ZM1614.8 792.6L1625 792.6L1620.6 785.8L1610.4 785.8ZM1539.4 785.8L1549.5 785.8L1546 779.1L1535.9 779.1ZM1559.7 785.8L1569.8 785.8L1566.1 779.1L1556 779.1ZM1580 785.8L1590.1 785.8L1586.1 779.1L1576.1 779.1ZM1600.3 785.8L1610.4 785.8L1606.2 779.1L1596.2 779.1ZM1620.6 785.8L1630.7 785.8L1626.3 779.1L1616.3 779.1ZM1525.9 779.1L1535.9 779.1L1532.6 772.5L1522.7 772.5ZM1546 779.1L1556 779.1L1552.4 772.5L1542.5 772.5ZM1566.1 779.1L1576.1 779.1L1572.3 772.5L1562.4 772.5ZM1586.1 779.1L1596.2 779.1L1592.2 772.5L1582.2 772.5ZM1606.2 779.1L1616.3 779.1L1612 772.5L1602.1 772.5ZM1532.6 772.5L1542.5 772.5L1539.1 766.1L1529.3 766.1ZM1552.4 772.5L1562.4 772.5L1558.8 766.1L1549 766.1ZM1572.3 772.5L1582.2 772.5L1578.4 766.1L1568.6 766.1ZM1592.2 772.5L1602.1 772.5L1598 766.1L1588.2 766.1ZM1612 772.5L1621.9 772.5L1617.7 766.1L1607.9 766.1ZM832.2 766.1L842.1 766.1L846.3 759.8L836.6 759.8ZM851.9 766.1L861.7 766.1L865.7 759.8L856 759.8ZM871.5 766.1L881.3 766.1L885.2 759.8L875.4 759.8ZM891.1 766.1L901 766.1L904.6 759.8L894.9 759.8ZM910.8 766.1L920.6 766.1L924 759.8L914.3 759.8ZM846.3 759.8L856 759.8L860.1 753.6L850.5 753.6ZM865.7 759.8L875.4 759.8L879.3 753.6L869.7 753.6ZM885.2 759.8L894.9 759.8L898.5 753.6L888.9 753.6ZM904.6 759.8L914.3 759.8L917.7 753.6L908.1 753.6ZM924 759.8L933.7 759.8L936.9 753.6L927.3 753.6ZM840.9 753.6L850.5 753.6L854.6 747.6L845.1 747.6ZM860.1 753.6L869.7 753.6L873.6 747.6L864.1 747.6ZM879.3 753.6L888.9 753.6L892.6 747.6L883.1 747.6ZM898.5 753.6L908.1 753.6L911.6 747.6L902.1 747.6ZM917.7 753.6L927.3 753.6L930.6 747.6L921.1 747.6ZM854.6 747.6L864.1 747.6L868 741.7L858.6 741.7ZM873.6 747.6L883.1 747.6L886.8 741.7L877.4 741.7ZM892.6 747.6L902.1 747.6L905.6 741.7L896.2 741.7ZM911.6 747.6L921.1 747.6L924.4 741.7L915 741.7ZM930.6 747.6L940.1 747.6L943.2 741.7L933.8 741.7ZM849.2 741.7L858.6 741.7L862.5 736L853.2 736ZM868 741.7L877.4 741.7L881.1 736L871.8 736ZM886.8 741.7L896.2 741.7L899.7 736L890.4 736ZM905.6 741.7L915 741.7L918.3 736L909 736ZM924.4 741.7L933.8 741.7L936.9 736L927.6 736ZM862.5 736L871.8 736L875.5 730.3L866.3 730.3ZM881.1 736L890.4 736L893.9 730.3L884.7 730.3ZM899.7 736L909 736L912.4 730.3L903.2 730.3ZM918.3 736L927.6 736L930.8 730.3L921.6 730.3ZM936.9 736L946.2 736L949.2 730.3L940 730.3ZM857.1 730.3L866.3 730.3L870.1 724.8L860.9 724.8ZM875.5 730.3L884.7 730.3L888.3 724.8L879.2 724.8ZM893.9 730.3L903.2 730.3L906.5 724.8L897.4 724.8ZM912.4 730.3L921.6 730.3L924.8 724.8L915.6 724.8ZM930.8 730.3L940 730.3L943 724.8L933.9 724.8ZM870.1 724.8L879.2 724.8L882.8 719.4L873.7 719.4ZM888.3 724.8L897.4 724.8L900.8 719.4L891.8 719.4ZM906.5 724.8L915.6 724.8L918.9 719.4L909.8 719.4ZM924.8 724.8L933.9 724.8L936.9 719.4L927.9 719.4ZM943 724.8L952.1 724.8L955 719.4L945.9 719.4ZM864.7 719.4L873.7 719.4L877.3 714.1L868.4 714.1ZM882.8 719.4L891.8 719.4L895.2 714.1L886.3 714.1ZM900.8 719.4L909.8 719.4L913.1 714.1L904.2 714.1ZM918.9 719.4L927.9 719.4L931 714.1L922 714.1ZM936.9 719.4L945.9 719.4L948.8 714.1L939.9 714.1ZM877.3 714.1L886.3 714.1L889.7 708.9L880.9 708.9ZM895.2 714.1L904.2 714.1L907.4 708.9L898.6 708.9ZM913.1 714.1L922 714.1L925.1 708.9L916.3 708.9ZM931 714.1L939.9 714.1L942.8 708.9L934 708.9ZM948.8 714.1L957.8 714.1L960.5 708.9L951.7 708.9ZM1028.6 766.1L1038.4 766.1L1040.5 759.8L1030.8 759.8ZM1048.2 766.1L1058 766.1L1060 759.8L1050.3 759.8ZM1067.9 766.1L1077.7 766.1L1079.4 759.8L1069.7 759.8ZM1087.5 766.1L1097.3 766.1L1098.8 759.8L1089.1 759.8ZM1107.1 766.1L1117 766.1L1118.2 759.8L1108.5 759.8ZM1040.5 759.8L1050.3 759.8L1052.2 753.6L1042.6 753.6ZM1060 759.8L1069.7 759.8L1071.4 753.6L1061.8 753.6ZM1079.4 759.8L1089.1 759.8L1090.7 753.6L1081.1 753.6ZM1098.8 759.8L1108.5 759.8L1109.9 753.6L1100.3 753.6ZM1118.2 759.8L1127.9 759.8L1129.1 753.6L1119.5 753.6ZM1033 753.6L1042.6 753.6L1044.7 747.6L1035.2 747.6ZM1052.2 753.6L1061.8 753.6L1063.7 747.6L1054.2 747.6ZM1071.4 753.6L1081.1 753.6L1082.7 747.6L1073.2 747.6ZM1090.7 753.6L1100.3 753.6L1101.7 747.6L1092.2 747.6ZM1109.9 753.6L1119.5 753.6L1120.7 747.6L1111.2 747.6ZM1044.7 747.6L1054.2 747.6L1056.1 741.7L1046.7 741.7ZM1063.7 747.6L1073.2 747.6L1074.9 741.7L1065.5 741.7ZM1082.7 747.6L1092.2 747.6L1093.7 741.7L1084.3 741.7ZM1101.7 747.6L1111.2 747.6L1112.5 741.7L1103.1 741.7ZM1120.7 747.6L1130.2 747.6L1131.3 741.7L1121.9 741.7ZM1037.3 741.7L1046.7 741.7L1048.6 736L1039.3 736ZM1056.1 741.7L1065.5 741.7L1067.2 736L1057.9 736ZM1074.9 741.7L1084.3 741.7L1085.8 736L1076.5 736ZM1093.7 741.7L1103.1 741.7L1104.5 736L1095.2 736ZM1112.5 741.7L1121.9 741.7L1123.1 736L1113.8 736ZM1048.6 736L1057.9 736L1059.7 730.3L1050.5 730.3ZM1067.2 736L1076.5 736L1078.2 730.3L1069 730.3ZM1085.8 736L1095.2 736L1096.6 730.3L1087.4 730.3ZM1104.5 736L1113.8 736L1115 730.3L1105.8 730.3ZM1123.1 736L1132.4 736L1133.4 730.3L1124.2 730.3ZM1041.3 730.3L1050.5 730.3L1052.4 724.8L1043.3 724.8ZM1059.7 730.3L1069 730.3L1070.6 724.8L1061.5 724.8ZM1078.2 730.3L1087.4 730.3L1088.9 724.8L1079.8 724.8ZM1096.6 730.3L1105.8 730.3L1107.1 724.8L1098 724.8ZM1115 730.3L1124.2 730.3L1125.3 724.8L1116.2 724.8ZM1052.4 724.8L1061.5 724.8L1063.3 719.4L1054.2 719.4ZM1070.6 724.8L1079.8 724.8L1081.3 719.4L1072.3 719.4ZM1088.9 724.8L1098 724.8L1099.4 719.4L1090.3 719.4ZM1107.1 724.8L1116.2 724.8L1117.4 719.4L1108.4 719.4ZM1125.3 724.8L1134.5 724.8L1135.5 719.4L1126.4 719.4ZM1045.2 719.4L1054.2 719.4L1056 714.1L1047.1 714.1ZM1063.3 719.4L1072.3 719.4L1073.9 714.1L1065 714.1ZM1081.3 719.4L1090.3 719.4L1091.8 714.1L1082.8 714.1ZM1099.4 719.4L1108.4 719.4L1109.7 714.1L1100.7 714.1ZM1117.4 719.4L1126.4 719.4L1127.5 714.1L1118.6 714.1ZM1056 714.1L1065 714.1L1066.7 708.9L1057.8 708.9ZM1073.9 714.1L1082.8 714.1L1084.3 708.9L1075.5 708.9ZM1091.8 714.1L1100.7 714.1L1102 708.9L1093.2 708.9ZM1109.7 714.1L1118.6 714.1L1119.7 708.9L1110.9 708.9ZM1127.5 714.1L1136.5 714.1L1137.4 708.9L1128.6 708.9ZM1225 766.1L1234.8 766.1L1234.8 759.8L1225.1 759.8ZM1244.6 766.1L1254.4 766.1L1254.2 759.8L1244.5 759.8ZM1264.2 766.1L1274 766.1L1273.6 759.8L1263.9 759.8ZM1283.9 766.1L1293.7 766.1L1293 759.8L1283.3 759.8ZM1303.5 766.1L1313.3 766.1L1312.5 759.8L1302.8 759.8ZM1234.8 759.8L1244.5 759.8L1244.4 753.6L1234.8 753.6ZM1254.2 759.8L1263.9 759.8L1263.6 753.6L1254 753.6ZM1273.6 759.8L1283.3 759.8L1282.8 753.6L1273.2 753.6ZM1293 759.8L1302.8 759.8L1302 753.6L1292.4 753.6ZM1312.5 759.8L1322.2 759.8L1321.2 753.6L1311.6 753.6ZM1225.2 753.6L1234.8 753.6L1234.8 747.6L1225.3 747.6ZM1244.4 753.6L1254 753.6L1253.8 747.6L1244.3 747.6ZM1263.6 753.6L1273.2 753.6L1272.8 747.6L1263.3 747.6ZM1282.8 753.6L1292.4 753.6L1291.8 747.6L1282.3 747.6ZM1302 753.6L1311.6 753.6L1310.8 747.6L1301.3 747.6ZM1234.8 747.6L1244.3 747.6L1244.2 741.7L1234.8 741.7ZM1253.8 747.6L1263.3 747.6L1263 741.7L1253.6 741.7ZM1272.8 747.6L1282.3 747.6L1281.8 741.7L1272.4 741.7ZM1291.8 747.6L1301.3 747.6L1300.6 741.7L1291.2 741.7ZM1310.8 747.6L1320.3 747.6L1319.4 741.7L1310 741.7ZM1225.4 741.7L1234.8 741.7L1234.8 736L1225.4 736ZM1244.2 741.7L1253.6 741.7L1253.4 736L1244.1 736ZM1263 741.7L1272.4 741.7L1272 736L1262.7 736ZM1281.8 741.7L1291.2 741.7L1290.6 736L1281.3 736ZM1300.6 741.7L1310 741.7L1309.2 736L1299.9 736ZM1234.8 736L1244.1 736L1244 730.3L1234.8 730.3ZM1253.4 736L1262.7 736L1262.4 730.3L1253.2 730.3ZM1272 736L1281.3 736L1280.8 730.3L1271.6 730.3ZM1290.6 736L1299.9 736L1299.2 730.3L1290 730.3ZM1309.2 736L1318.5 736L1317.7 730.3L1308.4 730.3ZM1225.5 730.3L1234.8 730.3L1234.7 724.8L1225.6 724.8ZM1244 730.3L1253.2 730.3L1253 724.8L1243.9 724.8ZM1262.4 730.3L1271.6 730.3L1271.2 724.8L1262.1 724.8ZM1280.8 730.3L1290 730.3L1289.5 724.8L1280.3 724.8ZM1299.2 730.3L1308.4 730.3L1307.7 724.8L1298.6 724.8ZM1234.7 724.8L1243.9 724.8L1243.8 719.4L1234.7 719.4ZM1253 724.8L1262.1 724.8L1261.8 719.4L1252.8 719.4ZM1271.2 724.8L1280.3 724.8L1279.9 719.4L1270.8 719.4ZM1289.5 724.8L1298.6 724.8L1297.9 719.4L1288.9 719.4ZM1307.7 724.8L1316.8 724.8L1316 719.4L1306.9 719.4ZM1225.7 719.4L1234.7 719.4L1234.7 714.1L1225.8 714.1ZM1243.8 719.4L1252.8 719.4L1252.6 714.1L1243.7 714.1ZM1261.8 719.4L1270.8 719.4L1270.5 714.1L1261.5 714.1ZM1279.9 719.4L1288.9 719.4L1288.4 714.1L1279.4 714.1ZM1297.9 719.4L1306.9 719.4L1306.2 714.1L1297.3 714.1ZM1234.7 714.1L1243.7 714.1L1243.6 708.9L1234.7 708.9ZM1252.6 714.1L1261.5 714.1L1261.3 708.9L1252.4 708.9ZM1270.5 714.1L1279.4 714.1L1279 708.9L1270.1 708.9ZM1288.4 714.1L1297.3 714.1L1296.7 708.9L1287.8 708.9ZM1306.2 714.1L1315.2 714.1L1314.4 708.9L1305.5 708.9ZM1421.3 766.1L1431.1 766.1L1429 759.8L1419.3 759.8ZM1441 766.1L1450.8 766.1L1448.4 759.8L1438.7 759.8ZM1460.6 766.1L1470.4 766.1L1467.8 759.8L1458.1 759.8ZM1480.2 766.1L1490 766.1L1487.3 759.8L1477.6 759.8ZM1499.9 766.1L1509.7 766.1L1506.7 759.8L1497 759.8ZM1429 759.8L1438.7 759.8L1436.5 753.6L1426.9 753.6ZM1448.4 759.8L1458.1 759.8L1455.7 753.6L1446.1 753.6ZM1467.8 759.8L1477.6 759.8L1474.9 753.6L1465.3 753.6ZM1487.3 759.8L1497 759.8L1494.2 753.6L1484.6 753.6ZM1506.7 759.8L1516.4 759.8L1513.4 753.6L1503.8 753.6ZM1417.3 753.6L1426.9 753.6L1424.9 747.6L1415.4 747.6ZM1436.5 753.6L1446.1 753.6L1443.9 747.6L1434.4 747.6ZM1455.7 753.6L1465.3 753.6L1462.9 747.6L1453.4 747.6ZM1474.9 753.6L1484.6 753.6L1481.9 747.6L1472.4 747.6ZM1494.2 753.6L1503.8 753.6L1500.9 747.6L1491.4 747.6ZM1424.9 747.6L1434.4 747.6L1432.3 741.7L1422.9 741.7ZM1443.9 747.6L1453.4 747.6L1451.1 741.7L1441.7 741.7ZM1462.9 747.6L1472.4 747.6L1469.9 741.7L1460.5 741.7ZM1481.9 747.6L1491.4 747.6L1488.7 741.7L1479.3 741.7ZM1500.9 747.6L1510.4 747.6L1507.5 741.7L1498.1 741.7ZM1413.5 741.7L1422.9 741.7L1420.9 736L1411.6 736ZM1432.3 741.7L1441.7 741.7L1439.5 736L1430.2 736ZM1451.1 741.7L1460.5 741.7L1458.1 736L1448.8 736ZM1469.9 741.7L1479.3 741.7L1476.7 736L1467.4 736ZM1488.7 741.7L1498.1 741.7L1495.4 736L1486 736ZM1420.9 736L1430.2 736L1428.2 730.3L1419 730.3ZM1439.5 736L1448.8 736L1446.6 730.3L1437.4 730.3ZM1458.1 736L1467.4 736L1465 730.3L1455.8 730.3ZM1476.7 736L1486 736L1483.5 730.3L1474.2 730.3ZM1495.4 736L1504.7 736L1501.9 730.3L1492.7 730.3ZM1409.8 730.3L1419 730.3L1417.1 724.8L1408 724.8ZM1428.2 730.3L1437.4 730.3L1435.3 724.8L1426.2 724.8ZM1446.6 730.3L1455.8 730.3L1453.6 724.8L1444.4 724.8ZM1465 730.3L1474.2 730.3L1471.8 724.8L1462.7 724.8ZM1483.5 730.3L1492.7 730.3L1490 724.8L1480.9 724.8ZM1417.1 724.8L1426.2 724.8L1424.3 719.4L1415.2 719.4ZM1435.3 724.8L1444.4 724.8L1442.3 719.4L1433.3 719.4ZM1453.6 724.8L1462.7 724.8L1460.4 719.4L1451.3 719.4ZM1471.8 724.8L1480.9 724.8L1478.4 719.4L1469.4 719.4ZM1490 724.8L1499.1 724.8L1496.5 719.4L1487.4 719.4ZM1406.2 719.4L1415.2 719.4L1413.4 714.1L1404.5 714.1ZM1424.3 719.4L1433.3 719.4L1431.3 714.1L1422.4 714.1ZM1442.3 719.4L1451.3 719.4L1449.2 714.1L1440.2 714.1ZM1460.4 719.4L1469.4 719.4L1467 714.1L1458.1 714.1ZM1478.4 719.4L1487.4 719.4L1484.9 714.1L1476 714.1ZM1413.4 714.1L1422.4 714.1L1420.5 708.9L1411.7 708.9ZM1431.3 714.1L1440.2 714.1L1438.2 708.9L1429.4 708.9ZM1449.2 714.1L1458.1 714.1L1455.9 708.9L1447.1 708.9ZM1467 714.1L1476 714.1L1473.6 708.9L1464.7 708.9ZM1484.9 714.1L1493.9 714.1L1491.3 708.9L1482.4 708.9ZM1617.7 766.1L1627.5 766.1L1623.2 759.8L1613.5 759.8ZM1637.3 766.1L1647.1 766.1L1642.7 759.8L1632.9 759.8ZM1657 766.1L1666.8 766.1L1662.1 759.8L1652.4 759.8ZM1676.6 766.1L1686.4 766.1L1681.5 759.8L1671.8 759.8ZM1696.2 766.1L1706 766.1L1700.9 759.8L1691.2 759.8ZM1623.2 759.8L1632.9 759.8L1628.7 753.6L1619.1 753.6ZM1642.7 759.8L1652.4 759.8L1647.9 753.6L1638.3 753.6ZM1662.1 759.8L1671.8 759.8L1667.1 753.6L1657.5 753.6ZM1681.5 759.8L1691.2 759.8L1686.3 753.6L1676.7 753.6ZM1700.9 759.8L1710.6 759.8L1705.5 753.6L1695.9 753.6ZM1609.4 753.6L1619.1 753.6L1615 747.6L1605.5 747.6ZM1628.7 753.6L1638.3 753.6L1634 747.6L1624.5 747.6ZM1647.9 753.6L1657.5 753.6L1653 747.6L1643.5 747.6ZM1667.1 753.6L1676.7 753.6L1672 747.6L1662.5 747.6ZM1686.3 753.6L1695.9 753.6L1691 747.6L1681.5 747.6ZM1615 747.6L1624.5 747.6L1620.4 741.7L1611 741.7ZM1634 747.6L1643.5 747.6L1639.2 741.7L1629.8 741.7ZM1653 747.6L1662.5 747.6L1658 741.7L1648.6 741.7ZM1672 747.6L1681.5 747.6L1676.8 741.7L1667.4 741.7ZM1691 747.6L1700.5 747.6L1695.6 741.7L1686.2 741.7ZM1601.6 741.7L1611 741.7L1607 736L1597.7 736ZM1620.4 741.7L1629.8 741.7L1625.7 736L1616.3 736ZM1639.2 741.7L1648.6 741.7L1644.3 736L1635 736ZM1658 741.7L1667.4 741.7L1662.9 736L1653.6 736ZM1676.8 741.7L1686.2 741.7L1681.5 736L1672.2 736ZM1607 736L1616.3 736L1612.4 730.3L1603.2 730.3ZM1625.7 736L1635 736L1630.8 730.3L1621.6 730.3ZM1644.3 736L1653.6 736L1649.3 730.3L1640 730.3ZM1662.9 736L1672.2 736L1667.7 730.3L1658.5 730.3ZM1681.5 736L1690.8 736L1686.1 730.3L1676.9 730.3ZM1594 730.3L1603.2 730.3L1599.4 724.8L1590.3 724.8ZM1612.4 730.3L1621.6 730.3L1617.7 724.8L1608.6 724.8ZM1630.8 730.3L1640 730.3L1635.9 724.8L1626.8 724.8ZM1649.3 730.3L1658.5 730.3L1654.1 724.8L1645 724.8ZM1667.7 730.3L1676.9 730.3L1672.4 724.8L1663.3 724.8ZM1599.4 724.8L1608.6 724.8L1604.8 719.4L1595.7 719.4ZM1617.7 724.8L1626.8 724.8L1622.8 719.4L1613.8 719.4ZM1635.9 724.8L1645 724.8L1640.9 719.4L1631.9 719.4ZM1654.1 724.8L1663.3 724.8L1658.9 719.4L1649.9 719.4ZM1672.4 724.8L1681.5 724.8L1677 719.4L1668 719.4ZM1586.7 719.4L1595.7 719.4L1592.1 714.1L1583.2 714.1ZM1604.8 719.4L1613.8 719.4L1610 714.1L1601.1 714.1ZM1622.8 719.4L1631.9 719.4L1627.9 714.1L1618.9 714.1ZM1640.9 719.4L1649.9 719.4L1645.7 714.1L1636.8 714.1ZM1658.9 719.4L1668 719.4L1663.6 714.1L1654.7 714.1ZM1592.1 714.1L1601.1 714.1L1597.4 708.9L1588.6 708.9ZM1610 714.1L1618.9 714.1L1615.1 708.9L1606.3 708.9ZM1627.9 714.1L1636.8 714.1L1632.8 708.9L1624 708.9ZM1645.7 714.1L1654.7 714.1L1650.5 708.9L1641.7 708.9ZM1663.6 714.1L1672.6 714.1L1668.2 708.9L1659.4 708.9ZM783.6 708.9L792.4 708.9L796.7 703.8L788 703.8ZM801.3 708.9L810.1 708.9L814.3 703.8L805.5 703.8ZM819 708.9L827.8 708.9L831.8 703.8L823 703.8ZM836.6 708.9L845.5 708.9L849.3 703.8L840.5 703.8ZM854.3 708.9L863.2 708.9L866.8 703.8L858.1 703.8ZM796.7 703.8L805.5 703.8L809.7 698.8L801 698.8ZM814.3 703.8L823 703.8L827 698.8L818.3 698.8ZM831.8 703.8L840.5 703.8L844.4 698.8L835.7 698.8ZM849.3 703.8L858.1 703.8L861.7 698.8L853 698.8ZM866.8 703.8L875.6 703.8L879.1 698.8L870.4 698.8ZM792.3 698.8L801 698.8L805.2 693.8L796.6 693.8ZM809.7 698.8L818.3 698.8L822.3 693.8L813.8 693.8ZM827 698.8L835.7 698.8L839.5 693.8L830.9 693.8ZM844.4 698.8L853 698.8L856.7 693.8L848.1 693.8ZM861.7 698.8L870.4 698.8L873.9 693.8L865.3 693.8ZM805.2 693.8L813.8 693.8L817.8 689L809.2 689ZM822.3 693.8L830.9 693.8L834.8 689L826.3 689ZM839.5 693.8L848.1 693.8L851.8 689L843.3 689ZM856.7 693.8L865.3 693.8L868.8 689L860.3 689ZM873.9 693.8L882.5 693.8L885.8 689L877.3 689ZM800.7 689L809.2 689L813.3 684.3L804.8 684.3ZM817.8 689L826.3 689L830.1 684.3L821.7 684.3ZM834.8 689L843.3 689L847 684.3L838.5 684.3ZM851.8 689L860.3 689L863.8 684.3L855.4 684.3ZM868.8 689L877.3 689L880.7 684.3L872.3 684.3ZM813.3 684.3L821.7 684.3L825.5 679.7L817.2 679.7ZM830.1 684.3L838.5 684.3L842.2 679.7L833.9 679.7ZM847 684.3L855.4 684.3L858.9 679.7L850.6 679.7ZM863.8 684.3L872.3 684.3L875.6 679.7L867.3 679.7ZM880.7 684.3L889.1 684.3L892.3 679.7L884 679.7ZM808.8 679.7L817.2 679.7L821.1 675.1L812.8 675.1ZM825.5 679.7L833.9 679.7L837.6 675.1L829.3 675.1ZM842.2 679.7L850.6 679.7L854.1 675.1L845.9 675.1ZM858.9 679.7L867.3 679.7L870.7 675.1L862.4 675.1ZM875.6 679.7L884 679.7L887.2 675.1L879 675.1ZM821.1 675.1L829.3 675.1L833 670.6L824.8 670.6ZM837.6 675.1L845.9 675.1L849.4 670.6L841.2 670.6ZM854.1 675.1L862.4 675.1L865.8 670.6L857.6 670.6ZM870.7 675.1L879 675.1L882.2 670.6L874 670.6ZM887.2 675.1L895.5 675.1L898.6 670.6L890.4 670.6ZM816.6 670.6L824.8 670.6L828.6 666.3L820.4 666.3ZM833 670.6L841.2 670.6L844.8 666.3L836.7 666.3ZM849.4 670.6L857.6 670.6L861.1 666.3L852.9 666.3ZM865.8 670.6L874 670.6L877.3 666.3L869.2 666.3ZM882.2 670.6L890.4 670.6L893.5 666.3L885.4 666.3ZM828.6 666.3L836.7 666.3L840.3 662L832.2 662ZM844.8 666.3L852.9 666.3L856.4 662L848.3 662ZM861.1 666.3L869.2 666.3L872.5 662L864.4 662ZM877.3 666.3L885.4 666.3L888.6 662L880.5 662ZM893.5 666.3L901.7 666.3L904.7 662L896.6 662ZM960.5 708.9L969.3 708.9L971.9 703.8L963.2 703.8ZM978.2 708.9L987 708.9L989.5 703.8L980.7 703.8ZM995.9 708.9L1004.7 708.9L1007 703.8L998.2 703.8ZM1013.6 708.9L1022.4 708.9L1024.5 703.8L1015.7 703.8ZM1031.3 708.9L1040.1 708.9L1042 703.8L1033.3 703.8ZM971.9 703.8L980.7 703.8L983.2 698.8L974.5 698.8ZM989.5 703.8L998.2 703.8L1000.5 698.8L991.8 698.8ZM1007 703.8L1015.7 703.8L1017.9 698.8L1009.2 698.8ZM1024.5 703.8L1033.3 703.8L1035.2 698.8L1026.5 698.8ZM1042 703.8L1050.8 703.8L1052.6 698.8L1043.9 698.8ZM965.8 698.8L974.5 698.8L977 693.8L968.4 693.8ZM983.2 698.8L991.8 698.8L994.2 693.8L985.6 693.8ZM1000.5 698.8L1009.2 698.8L1011.4 693.8L1002.8 693.8ZM1017.9 698.8L1026.5 698.8L1028.5 693.8L1019.9 693.8ZM1035.2 698.8L1043.9 698.8L1045.7 693.8L1037.1 693.8ZM977 693.8L985.6 693.8L987.9 689L979.4 689ZM994.2 693.8L1002.8 693.8L1005 689L996.5 689ZM1011.4 693.8L1019.9 693.8L1022 689L1013.5 689ZM1028.5 693.8L1037.1 693.8L1039 689L1030.5 689ZM1045.7 693.8L1054.3 693.8L1056 689L1047.5 689ZM970.9 689L979.4 689L981.8 684.3L973.4 684.3ZM987.9 689L996.5 689L998.7 684.3L990.3 684.3ZM1005 689L1013.5 689L1015.6 684.3L1007.1 684.3ZM1022 689L1030.5 689L1032.4 684.3L1024 684.3ZM1039 689L1047.5 689L1049.3 684.3L1040.8 684.3ZM981.8 684.3L990.3 684.3L992.6 679.7L984.2 679.7ZM998.7 684.3L1007.1 684.3L1009.3 679.7L1000.9 679.7ZM1015.6 684.3L1024 684.3L1026 679.7L1017.6 679.7ZM1032.4 684.3L1040.8 684.3L1042.7 679.7L1034.3 679.7ZM1049.3 684.3L1057.7 684.3L1059.4 679.7L1051 679.7ZM975.9 679.7L984.2 679.7L986.5 675.1L978.2 675.1ZM992.6 679.7L1000.9 679.7L1003.1 675.1L994.8 675.1ZM1009.3 679.7L1017.6 679.7L1019.6 675.1L1011.3 675.1ZM1026 679.7L1034.3 679.7L1036.2 675.1L1027.9 675.1ZM1042.7 679.7L1051 679.7L1052.7 675.1L1044.4 675.1ZM986.5 675.1L994.8 675.1L997 670.6L988.8 670.6ZM1003.1 675.1L1011.3 675.1L1013.4 670.6L1005.2 670.6ZM1019.6 675.1L1027.9 675.1L1029.8 670.6L1021.6 670.6ZM1036.2 675.1L1044.4 675.1L1046.2 670.6L1038 670.6ZM1052.7 675.1L1061 675.1L1062.6 670.6L1054.4 670.6ZM980.6 670.6L988.8 670.6L991 666.3L982.9 666.3ZM997 670.6L1005.2 670.6L1007.3 666.3L999.1 666.3ZM1013.4 670.6L1021.6 670.6L1023.5 666.3L1015.4 666.3ZM1029.8 670.6L1038 670.6L1039.8 666.3L1031.6 666.3ZM1046.2 670.6L1054.4 670.6L1056 666.3L1047.9 666.3ZM991 666.3L999.1 666.3L1001.3 662L993.2 662ZM1007.3 666.3L1015.4 666.3L1017.4 662L1009.3 662ZM1023.5 666.3L1031.6 666.3L1033.5 662L1025.4 662ZM1039.8 666.3L1047.9 666.3L1049.6 662L1041.5 662ZM1056 666.3L1064.1 666.3L1065.7 662L1057.6 662ZM1137.4 708.9L1146.3 708.9L1147.1 703.8L1138.4 703.8ZM1155.1 708.9L1164 708.9L1164.7 703.8L1155.9 703.8ZM1172.8 708.9L1181.7 708.9L1182.2 703.8L1173.4 703.8ZM1190.5 708.9L1199.4 708.9L1199.7 703.8L1190.9 703.8ZM1208.2 708.9L1217 708.9L1217.2 703.8L1208.5 703.8ZM1147.1 703.8L1155.9 703.8L1156.7 698.8L1148 698.8ZM1164.7 703.8L1173.4 703.8L1174 698.8L1165.3 698.8ZM1182.2 703.8L1190.9 703.8L1191.4 698.8L1182.7 698.8ZM1199.7 703.8L1208.5 703.8L1208.7 698.8L1200 698.8ZM1217.2 703.8L1226 703.8L1226.1 698.8L1217.4 698.8ZM1139.3 698.8L1148 698.8L1148.8 693.8L1140.2 693.8ZM1156.7 698.8L1165.3 698.8L1166 693.8L1157.4 693.8ZM1174 698.8L1182.7 698.8L1183.2 693.8L1174.6 693.8ZM1191.4 698.8L1200 698.8L1200.4 693.8L1191.8 693.8ZM1208.7 698.8L1217.4 698.8L1217.5 693.8L1209 693.8ZM1148.8 693.8L1157.4 693.8L1158.1 689L1149.6 689ZM1166 693.8L1174.6 693.8L1175.2 689L1166.6 689ZM1183.2 693.8L1191.8 693.8L1192.2 689L1183.7 689ZM1200.4 693.8L1209 693.8L1209.2 689L1200.7 689ZM1217.5 693.8L1226.1 693.8L1226.2 689L1217.7 689ZM1141.1 689L1149.6 689L1150.4 684.3L1142 684.3ZM1158.1 689L1166.6 689L1167.3 684.3L1158.9 684.3ZM1175.2 689L1183.7 689L1184.1 684.3L1175.7 684.3ZM1192.2 689L1200.7 689L1201 684.3L1192.6 684.3ZM1209.2 689L1217.7 689L1217.9 684.3L1209.4 684.3ZM1150.4 684.3L1158.9 684.3L1159.6 679.7L1151.2 679.7ZM1167.3 684.3L1175.7 684.3L1176.3 679.7L1167.9 679.7ZM1184.1 684.3L1192.6 684.3L1193 679.7L1184.6 679.7ZM1201 684.3L1209.4 684.3L1209.7 679.7L1201.3 679.7ZM1217.9 684.3L1226.3 684.3L1226.4 679.7L1218 679.7ZM1142.9 679.7L1151.2 679.7L1152 675.1L1143.7 675.1ZM1159.6 679.7L1167.9 679.7L1168.5 675.1L1160.3 675.1ZM1176.3 679.7L1184.6 679.7L1185.1 675.1L1176.8 675.1ZM1193 679.7L1201.3 679.7L1201.6 675.1L1193.4 675.1ZM1209.7 679.7L1218 679.7L1218.2 675.1L1209.9 675.1ZM1152 675.1L1160.3 675.1L1160.9 670.6L1152.7 670.6ZM1168.5 675.1L1176.8 675.1L1177.3 670.6L1169.1 670.6ZM1185.1 675.1L1193.4 675.1L1193.7 670.6L1185.5 670.6ZM1201.6 675.1L1209.9 675.1L1210.1 670.6L1201.9 670.6ZM1218.2 675.1L1226.4 675.1L1226.5 670.6L1218.3 670.6ZM1144.5 670.6L1152.7 670.6L1153.5 666.3L1145.4 666.3ZM1160.9 670.6L1169.1 670.6L1169.7 666.3L1161.6 666.3ZM1177.3 670.6L1185.5 670.6L1186 666.3L1177.9 666.3ZM1193.7 670.6L1201.9 670.6L1202.2 666.3L1194.1 666.3ZM1210.1 670.6L1218.3 670.6L1218.5 666.3L1210.3 666.3ZM1153.5 666.3L1161.6 666.3L1162.3 662L1154.2 662ZM1169.7 666.3L1177.9 666.3L1178.4 662L1170.3 662ZM1186 666.3L1194.1 666.3L1194.5 662L1186.4 662ZM1202.2 666.3L1210.3 666.3L1210.6 662L1202.5 662ZM1218.5 666.3L1226.6 666.3L1226.7 662L1218.6 662ZM1314.4 708.9L1323.2 708.9L1322.3 703.8L1313.6 703.8ZM1332.1 708.9L1340.9 708.9L1339.9 703.8L1331.1 703.8ZM1349.7 708.9L1358.6 708.9L1357.4 703.8L1348.6 703.8ZM1367.4 708.9L1376.3 708.9L1374.9 703.8L1366.1 703.8ZM1385.1 708.9L1394 708.9L1392.4 703.8L1383.7 703.8ZM1322.3 703.8L1331.1 703.8L1330.2 698.8L1321.5 698.8ZM1339.9 703.8L1348.6 703.8L1347.5 698.8L1338.8 698.8ZM1357.4 703.8L1366.1 703.8L1364.9 698.8L1356.2 698.8ZM1374.9 703.8L1383.7 703.8L1382.2 698.8L1373.5 698.8ZM1392.4 703.8L1401.2 703.8L1399.6 698.8L1390.9 698.8ZM1312.8 698.8L1321.5 698.8L1320.6 693.8L1312.1 693.8ZM1330.2 698.8L1338.8 698.8L1337.8 693.8L1329.2 693.8ZM1347.5 698.8L1356.2 698.8L1355 693.8L1346.4 693.8ZM1364.9 698.8L1373.5 698.8L1372.2 693.8L1363.6 693.8ZM1382.2 698.8L1390.9 698.8L1389.4 693.8L1380.8 693.8ZM1320.6 693.8L1329.2 693.8L1328.3 689L1319.8 689ZM1337.8 693.8L1346.4 693.8L1345.4 689L1336.8 689ZM1355 693.8L1363.6 693.8L1362.4 689L1353.9 689ZM1372.2 693.8L1380.8 693.8L1379.4 689L1370.9 689ZM1389.4 693.8L1398 693.8L1396.4 689L1387.9 689ZM1311.3 689L1319.8 689L1319 684.3L1310.6 684.3ZM1328.3 689L1336.8 689L1335.9 684.3L1327.4 684.3ZM1345.4 689L1353.9 689L1352.7 684.3L1344.3 684.3ZM1362.4 689L1370.9 689L1369.6 684.3L1361.2 684.3ZM1379.4 689L1387.9 689L1386.5 684.3L1378 684.3ZM1319 684.3L1327.4 684.3L1326.6 679.7L1318.2 679.7ZM1335.9 684.3L1344.3 684.3L1343.3 679.7L1334.9 679.7ZM1352.7 684.3L1361.2 684.3L1360 679.7L1351.6 679.7ZM1369.6 684.3L1378 684.3L1376.7 679.7L1368.3 679.7ZM1386.5 684.3L1394.9 684.3L1393.4 679.7L1385 679.7ZM1309.9 679.7L1318.2 679.7L1317.5 675.1L1309.2 675.1ZM1326.6 679.7L1334.9 679.7L1334 675.1L1325.7 675.1ZM1343.3 679.7L1351.6 679.7L1350.5 675.1L1342.3 675.1ZM1360 679.7L1368.3 679.7L1367.1 675.1L1358.8 675.1ZM1376.7 679.7L1385 679.7L1383.6 675.1L1375.4 675.1ZM1317.5 675.1L1325.7 675.1L1324.9 670.6L1316.7 670.6ZM1334 675.1L1342.3 675.1L1341.3 670.6L1333.1 670.6ZM1350.5 675.1L1358.8 675.1L1357.7 670.6L1349.5 670.6ZM1367.1 675.1L1375.4 675.1L1374.1 670.6L1365.9 670.6ZM1383.6 675.1L1391.9 675.1L1390.5 670.6L1382.3 670.6ZM1308.5 670.6L1316.7 670.6L1315.9 666.3L1307.8 666.3ZM1324.9 670.6L1333.1 670.6L1332.2 666.3L1324.1 666.3ZM1341.3 670.6L1349.5 670.6L1348.4 666.3L1340.3 666.3ZM1357.7 670.6L1365.9 670.6L1364.7 666.3L1356.6 666.3ZM1374.1 670.6L1382.3 670.6L1380.9 666.3L1372.8 666.3ZM1315.9 666.3L1324.1 666.3L1323.3 662L1315.2 662ZM1332.2 666.3L1340.3 666.3L1339.4 662L1331.3 662ZM1348.4 666.3L1356.6 666.3L1355.5 662L1347.4 662ZM1364.7 666.3L1372.8 666.3L1371.6 662L1363.5 662ZM1380.9 666.3L1389 666.3L1387.7 662L1379.6 662ZM1491.3 708.9L1500.1 708.9L1497.5 703.8L1488.8 703.8ZM1509 708.9L1517.8 708.9L1515 703.8L1506.3 703.8ZM1526.7 708.9L1535.5 708.9L1532.6 703.8L1523.8 703.8ZM1544.4 708.9L1553.2 708.9L1550.1 703.8L1541.3 703.8ZM1562.1 708.9L1570.9 708.9L1567.6 703.8L1558.8 703.8ZM1497.5 703.8L1506.3 703.8L1503.7 698.8L1495 698.8ZM1515 703.8L1523.8 703.8L1521 698.8L1512.3 698.8ZM1532.6 703.8L1541.3 703.8L1538.3 698.8L1529.7 698.8ZM1550.1 703.8L1558.8 703.8L1555.7 698.8L1547 698.8ZM1567.6 703.8L1576.4 703.8L1573 698.8L1564.4 698.8ZM1486.3 698.8L1495 698.8L1492.5 693.8L1483.9 693.8ZM1503.7 698.8L1512.3 698.8L1509.7 693.8L1501.1 693.8ZM1521 698.8L1529.7 698.8L1526.8 693.8L1518.2 693.8ZM1538.3 698.8L1547 698.8L1544 693.8L1535.4 693.8ZM1555.7 698.8L1564.4 698.8L1561.2 693.8L1552.6 693.8ZM1492.5 693.8L1501.1 693.8L1498.5 689L1490 689ZM1509.7 693.8L1518.2 693.8L1515.5 689L1507 689ZM1526.8 693.8L1535.4 693.8L1532.6 689L1524.1 689ZM1544 693.8L1552.6 693.8L1549.6 689L1541.1 689ZM1561.2 693.8L1569.8 693.8L1566.6 689L1558.1 689ZM1481.5 689L1490 689L1487.6 684.3L1479.2 684.3ZM1498.5 689L1507 689L1504.5 684.3L1496 684.3ZM1515.5 689L1524.1 689L1521.3 684.3L1512.9 684.3ZM1532.6 689L1541.1 689L1538.2 684.3L1529.8 684.3ZM1549.6 689L1558.1 689L1555 684.3L1546.6 684.3ZM1487.6 684.3L1496 684.3L1493.6 679.7L1485.2 679.7ZM1504.5 684.3L1512.9 684.3L1510.3 679.7L1501.9 679.7ZM1521.3 684.3L1529.8 684.3L1527 679.7L1518.6 679.7ZM1538.2 684.3L1546.6 684.3L1543.7 679.7L1535.3 679.7ZM1555 684.3L1563.5 684.3L1560.4 679.7L1552 679.7ZM1476.9 679.7L1485.2 679.7L1482.9 675.1L1474.6 675.1ZM1493.6 679.7L1501.9 679.7L1499.5 675.1L1491.2 675.1ZM1510.3 679.7L1518.6 679.7L1516 675.1L1507.7 675.1ZM1527 679.7L1535.3 679.7L1532.6 675.1L1524.3 675.1ZM1543.7 679.7L1552 679.7L1549.1 675.1L1540.8 675.1ZM1482.9 675.1L1491.2 675.1L1488.8 670.6L1480.6 670.6ZM1499.5 675.1L1507.7 675.1L1505.2 670.6L1497 670.6ZM1516 675.1L1524.3 675.1L1521.6 670.6L1513.4 670.6ZM1532.6 675.1L1540.8 675.1L1538 670.6L1529.8 670.6ZM1549.1 675.1L1557.4 675.1L1554.4 670.6L1546.2 670.6ZM1472.4 670.6L1480.6 670.6L1478.4 666.3L1470.3 666.3ZM1488.8 670.6L1497 670.6L1494.6 666.3L1486.5 666.3ZM1505.2 670.6L1513.4 670.6L1510.9 666.3L1502.8 666.3ZM1521.6 670.6L1529.8 670.6L1527.1 666.3L1519 666.3ZM1538 670.6L1546.2 670.6L1543.4 666.3L1535.3 666.3ZM1478.4 666.3L1486.5 666.3L1484.3 662L1476.2 662ZM1494.6 666.3L1502.8 666.3L1500.4 662L1492.3 662ZM1510.9 666.3L1519 666.3L1516.5 662L1508.4 662ZM1527.1 666.3L1535.3 666.3L1532.6 662L1524.5 662ZM1543.4 666.3L1551.5 666.3L1548.7 662L1540.6 662ZM904.7 662L912.7 662L915.6 657.7L907.6 657.7ZM920.8 662L928.8 662L931.5 657.7L923.6 657.7ZM936.9 662L944.9 662L947.5 657.7L939.5 657.7ZM953 662L961 662L963.5 657.7L955.5 657.7ZM969.1 662L977.1 662L979.4 657.7L971.4 657.7ZM915.6 657.7L923.6 657.7L926.3 653.6L918.4 653.6ZM931.5 657.7L939.5 657.7L942.1 653.6L934.2 653.6ZM947.5 657.7L955.5 657.7L957.9 653.6L950 653.6ZM963.5 657.7L971.4 657.7L973.8 653.6L965.9 653.6ZM979.4 657.7L987.4 657.7L989.6 653.6L981.7 653.6ZM910.5 653.6L918.4 653.6L921.2 649.5L913.3 649.5ZM926.3 653.6L934.2 653.6L936.9 649.5L929 649.5ZM942.1 653.6L950 653.6L952.5 649.5L944.7 649.5ZM957.9 653.6L965.9 653.6L968.2 649.5L960.4 649.5ZM973.8 653.6L981.7 653.6L983.9 649.5L976 649.5ZM921.2 649.5L929 649.5L931.7 645.5L923.9 645.5ZM936.9 649.5L944.7 649.5L947.2 645.5L939.4 645.5ZM952.5 649.5L960.4 649.5L962.7 645.5L955 645.5ZM968.2 649.5L976 649.5L978.3 645.5L970.5 645.5ZM983.9 649.5L991.7 649.5L993.8 645.5L986.1 645.5ZM916.1 645.5L923.9 645.5L926.6 641.5L918.9 641.5ZM931.7 645.5L939.4 645.5L942 641.5L934.3 641.5ZM947.2 645.5L955 645.5L957.4 641.5L949.7 641.5ZM962.7 645.5L970.5 645.5L972.8 641.5L965.1 641.5ZM978.3 645.5L986.1 645.5L988.2 641.5L980.5 641.5ZM926.6 641.5L934.3 641.5L936.8 637.7L929.2 637.7ZM942 641.5L949.7 641.5L952.1 637.7L944.5 637.7ZM957.4 641.5L965.1 641.5L967.4 637.7L959.8 637.7ZM972.8 641.5L980.5 641.5L982.7 637.7L975 637.7ZM988.2 641.5L995.9 641.5L997.9 637.7L990.3 637.7ZM921.6 637.7L929.2 637.7L931.8 633.9L924.2 633.9ZM936.8 637.7L944.5 637.7L946.9 633.9L939.4 633.9ZM952.1 637.7L959.8 637.7L962.1 633.9L954.5 633.9ZM967.4 637.7L975 637.7L977.2 633.9L969.7 633.9ZM982.7 637.7L990.3 637.7L992.4 633.9L984.8 633.9ZM931.8 633.9L939.4 633.9L941.8 630.1L934.3 630.1ZM946.9 633.9L954.5 633.9L956.9 630.1L949.4 630.1ZM962.1 633.9L969.7 633.9L971.9 630.1L964.4 630.1ZM977.2 633.9L984.8 633.9L986.9 630.1L979.4 630.1ZM992.4 633.9L999.9 633.9L1001.9 630.1L994.4 630.1ZM926.8 630.1L934.3 630.1L936.8 626.4L929.4 626.4ZM941.8 630.1L949.4 630.1L951.7 626.4L944.3 626.4ZM956.9 630.1L964.4 630.1L966.6 626.4L959.2 626.4ZM971.9 630.1L979.4 630.1L981.5 626.4L974.1 626.4ZM986.9 630.1L994.4 630.1L996.4 626.4L989 626.4ZM936.8 626.4L944.3 626.4L946.7 622.8L939.3 622.8ZM951.7 626.4L959.2 626.4L961.4 622.8L954.1 622.8ZM966.6 626.4L974.1 626.4L976.2 622.8L968.8 622.8ZM981.5 626.4L989 626.4L991 622.8L983.6 622.8ZM996.4 626.4L1003.8 626.4L1005.8 622.8L998.4 622.8ZM1065.7 662L1073.7 662L1075.1 657.7L1067.2 657.7ZM1081.8 662L1089.8 662L1091.1 657.7L1083.1 657.7ZM1097.9 662L1105.9 662L1107.1 657.7L1099.1 657.7ZM1114 662L1122 662L1123 657.7L1115 657.7ZM1130.1 662L1138.1 662L1139 657.7L1131 657.7ZM1075.1 657.7L1083.1 657.7L1084.5 653.6L1076.6 653.6ZM1091.1 657.7L1099.1 657.7L1100.3 653.6L1092.4 653.6ZM1107.1 657.7L1115 657.7L1116.1 653.6L1108.2 653.6ZM1123 657.7L1131 657.7L1131.9 653.6L1124 653.6ZM1139 657.7L1146.9 657.7L1147.7 653.6L1139.8 653.6ZM1068.6 653.6L1076.6 653.6L1077.9 649.5L1070.1 649.5ZM1084.5 653.6L1092.4 653.6L1093.6 649.5L1085.8 649.5ZM1100.3 653.6L1108.2 653.6L1109.3 649.5L1101.5 649.5ZM1116.1 653.6L1124 653.6L1125 649.5L1117.1 649.5ZM1131.9 653.6L1139.8 653.6L1140.6 649.5L1132.8 649.5ZM1077.9 649.5L1085.8 649.5L1087.1 645.5L1079.3 645.5ZM1093.6 649.5L1101.5 649.5L1102.6 645.5L1094.8 645.5ZM1109.3 649.5L1117.1 649.5L1118.1 645.5L1110.4 645.5ZM1125 649.5L1132.8 649.5L1133.7 645.5L1125.9 645.5ZM1140.6 649.5L1148.5 649.5L1149.2 645.5L1141.5 645.5ZM1071.5 645.5L1079.3 645.5L1080.6 641.5L1072.9 641.5ZM1087.1 645.5L1094.8 645.5L1096 641.5L1088.3 641.5ZM1102.6 645.5L1110.4 645.5L1111.4 641.5L1103.7 641.5ZM1118.1 645.5L1125.9 645.5L1126.9 641.5L1119.2 641.5ZM1133.7 645.5L1141.5 645.5L1142.3 641.5L1134.6 641.5ZM1080.6 641.5L1088.3 641.5L1089.6 637.7L1081.9 637.7ZM1096 641.5L1103.7 641.5L1104.9 637.7L1097.2 637.7ZM1111.4 641.5L1119.2 641.5L1120.1 637.7L1112.5 637.7ZM1126.9 641.5L1134.6 641.5L1135.4 637.7L1127.8 637.7ZM1142.3 641.5L1150 641.5L1150.7 637.7L1143 637.7ZM1074.3 637.7L1081.9 637.7L1083.2 633.9L1075.7 633.9ZM1089.6 637.7L1097.2 637.7L1098.4 633.9L1090.8 633.9ZM1104.9 637.7L1112.5 637.7L1113.5 633.9L1106 633.9ZM1120.1 637.7L1127.8 637.7L1128.7 633.9L1121.1 633.9ZM1135.4 637.7L1143 637.7L1143.8 633.9L1136.2 633.9ZM1083.2 633.9L1090.8 633.9L1092 630.1L1084.5 630.1ZM1098.4 633.9L1106 633.9L1107 630.1L1099.5 630.1ZM1113.5 633.9L1121.1 633.9L1122.1 630.1L1114.5 630.1ZM1128.7 633.9L1136.2 633.9L1137.1 630.1L1129.6 630.1ZM1143.8 633.9L1151.4 633.9L1152.1 630.1L1144.6 630.1ZM1077 630.1L1084.5 630.1L1085.8 626.4L1078.3 626.4ZM1092 630.1L1099.5 630.1L1100.7 626.4L1093.2 626.4ZM1107 630.1L1114.5 630.1L1115.5 626.4L1108.1 626.4ZM1122.1 630.1L1129.6 630.1L1130.4 626.4L1123 626.4ZM1137.1 630.1L1144.6 630.1L1145.3 626.4L1137.9 626.4ZM1085.8 626.4L1093.2 626.4L1094.4 622.8L1087 622.8ZM1100.7 626.4L1108.1 626.4L1109.1 622.8L1101.8 622.8ZM1115.5 626.4L1123 626.4L1123.9 622.8L1116.5 622.8ZM1130.4 626.4L1137.9 626.4L1138.7 622.8L1131.3 622.8ZM1145.3 626.4L1152.8 626.4L1153.5 622.8L1146.1 622.8ZM1226.7 662L1234.7 662L1234.7 657.7L1226.7 657.7ZM1242.8 662L1250.8 662L1250.7 657.7L1242.7 657.7ZM1258.9 662L1266.9 662L1266.6 657.7L1258.6 657.7ZM1275 662L1283 662L1282.6 657.7L1274.6 657.7ZM1291.1 662L1299.1 662L1298.5 657.7L1290.6 657.7ZM1234.7 657.7L1242.7 657.7L1242.6 653.6L1234.7 653.6ZM1250.7 657.7L1258.6 657.7L1258.4 653.6L1250.5 653.6ZM1266.6 657.7L1274.6 657.7L1274.2 653.6L1266.3 653.6ZM1282.6 657.7L1290.6 657.7L1290.1 653.6L1282.1 653.6ZM1298.5 657.7L1306.5 657.7L1305.9 653.6L1298 653.6ZM1226.8 653.6L1234.7 653.6L1234.7 649.5L1226.9 649.5ZM1242.6 653.6L1250.5 653.6L1250.4 649.5L1242.5 649.5ZM1258.4 653.6L1266.3 653.6L1266.1 649.5L1258.2 649.5ZM1274.2 653.6L1282.1 653.6L1281.7 649.5L1273.9 649.5ZM1290.1 653.6L1298 653.6L1297.4 649.5L1289.6 649.5ZM1234.7 649.5L1242.5 649.5L1242.5 645.5L1234.7 645.5ZM1250.4 649.5L1258.2 649.5L1258 645.5L1250.2 645.5ZM1266.1 649.5L1273.9 649.5L1273.5 645.5L1265.8 645.5ZM1281.7 649.5L1289.6 649.5L1289.1 645.5L1281.3 645.5ZM1297.4 649.5L1305.2 649.5L1304.6 645.5L1296.9 645.5ZM1226.9 645.5L1234.7 645.5L1234.7 641.5L1227 641.5ZM1242.5 645.5L1250.2 645.5L1250.1 641.5L1242.4 641.5ZM1258 645.5L1265.8 645.5L1265.5 641.5L1257.8 641.5ZM1273.5 645.5L1281.3 645.5L1280.9 641.5L1273.2 641.5ZM1289.1 645.5L1296.9 645.5L1296.3 641.5L1288.6 641.5ZM1234.7 641.5L1242.4 641.5L1242.3 637.7L1234.7 637.7ZM1250.1 641.5L1257.8 641.5L1257.6 637.7L1250 637.7ZM1265.5 641.5L1273.2 641.5L1272.9 637.7L1265.2 637.7ZM1280.9 641.5L1288.6 641.5L1288.2 637.7L1280.5 637.7ZM1296.3 641.5L1304 641.5L1303.4 637.7L1295.8 637.7ZM1227.1 637.7L1234.7 637.7L1234.7 633.9L1227.1 633.9ZM1242.3 637.7L1250 637.7L1249.8 633.9L1242.3 633.9ZM1257.6 637.7L1265.2 637.7L1265 633.9L1257.4 633.9ZM1272.9 637.7L1280.5 637.7L1280.1 633.9L1272.6 633.9ZM1288.2 637.7L1295.8 637.7L1295.3 633.9L1287.7 633.9ZM1234.7 633.9L1242.3 633.9L1242.2 630.1L1234.7 630.1ZM1249.8 633.9L1257.4 633.9L1257.2 630.1L1249.7 630.1ZM1265 633.9L1272.6 633.9L1272.2 630.1L1264.7 630.1ZM1280.1 633.9L1287.7 633.9L1287.2 630.1L1279.7 630.1ZM1295.3 633.9L1302.8 633.9L1302.3 630.1L1294.8 630.1ZM1227.2 630.1L1234.7 630.1L1234.7 626.4L1227.2 626.4ZM1242.2 630.1L1249.7 630.1L1249.6 626.4L1242.1 626.4ZM1257.2 630.1L1264.7 630.1L1264.5 626.4L1257 626.4ZM1272.2 630.1L1279.7 630.1L1279.4 626.4L1271.9 626.4ZM1287.2 630.1L1294.8 630.1L1294.3 626.4L1286.8 626.4ZM1234.7 626.4L1242.1 626.4L1242.1 622.8L1234.7 622.8ZM1249.6 626.4L1257 626.4L1256.8 622.8L1249.5 622.8ZM1264.5 626.4L1271.9 626.4L1271.6 622.8L1264.2 622.8ZM1279.4 626.4L1286.8 626.4L1286.4 622.8L1279 622.8ZM1294.3 626.4L1301.7 626.4L1301.1 622.8L1293.8 622.8ZM1387.7 662L1395.7 662L1394.3 657.7L1386.3 657.7ZM1403.8 662L1411.8 662L1410.2 657.7L1402.2 657.7ZM1419.9 662L1427.9 662L1426.2 657.7L1418.2 657.7ZM1436 662L1444 662L1442.1 657.7L1434.2 657.7ZM1452.1 662L1460.1 662L1458.1 657.7L1450.1 657.7ZM1394.3 657.7L1402.2 657.7L1400.8 653.6L1392.9 653.6ZM1410.2 657.7L1418.2 657.7L1416.6 653.6L1408.7 653.6ZM1426.2 657.7L1434.2 657.7L1432.4 653.6L1424.5 653.6ZM1442.1 657.7L1450.1 657.7L1448.2 653.6L1440.3 653.6ZM1458.1 657.7L1466.1 657.7L1464 653.6L1456.1 653.6ZM1384.9 653.6L1392.9 653.6L1391.5 649.5L1383.6 649.5ZM1400.8 653.6L1408.7 653.6L1407.1 649.5L1399.3 649.5ZM1416.6 653.6L1424.5 653.6L1422.8 649.5L1415 649.5ZM1432.4 653.6L1440.3 653.6L1438.5 649.5L1430.7 649.5ZM1448.2 653.6L1456.1 653.6L1454.2 649.5L1446.3 649.5ZM1391.5 649.5L1399.3 649.5L1397.9 645.5L1390.1 645.5ZM1407.1 649.5L1415 649.5L1413.4 645.5L1405.6 645.5ZM1422.8 649.5L1430.7 649.5L1428.9 645.5L1421.2 645.5ZM1438.5 649.5L1446.3 649.5L1444.5 645.5L1436.7 645.5ZM1454.2 649.5L1462 649.5L1460 645.5L1452.3 645.5ZM1382.3 645.5L1390.1 645.5L1388.8 641.5L1381.1 641.5ZM1397.9 645.5L1405.6 645.5L1404.2 641.5L1396.5 641.5ZM1413.4 645.5L1421.2 645.5L1419.6 641.5L1411.9 641.5ZM1428.9 645.5L1436.7 645.5L1435 641.5L1427.3 641.5ZM1444.5 645.5L1452.3 645.5L1450.4 641.5L1442.7 641.5ZM1388.8 641.5L1396.5 641.5L1395.1 637.7L1387.4 637.7ZM1404.2 641.5L1411.9 641.5L1410.3 637.7L1402.7 637.7ZM1419.6 641.5L1427.3 641.5L1425.6 637.7L1418 637.7ZM1435 641.5L1442.7 641.5L1440.9 637.7L1433.3 637.7ZM1450.4 641.5L1458.1 641.5L1456.2 637.7L1448.5 637.7ZM1379.8 637.7L1387.4 637.7L1386.1 633.9L1378.6 633.9ZM1395.1 637.7L1402.7 637.7L1401.3 633.9L1393.7 633.9ZM1410.3 637.7L1418 637.7L1416.4 633.9L1408.9 633.9ZM1425.6 637.7L1433.3 637.7L1431.6 633.9L1424 633.9ZM1440.9 637.7L1448.5 637.7L1446.7 633.9L1439.1 633.9ZM1386.1 633.9L1393.7 633.9L1392.4 630.1L1384.9 630.1ZM1401.3 633.9L1408.9 633.9L1407.4 630.1L1399.9 630.1ZM1416.4 633.9L1424 633.9L1422.4 630.1L1414.9 630.1ZM1431.6 633.9L1439.1 633.9L1437.4 630.1L1429.9 630.1ZM1446.7 633.9L1454.3 633.9L1452.4 630.1L1444.9 630.1ZM1377.4 630.1L1384.9 630.1L1383.6 626.4L1376.2 626.4ZM1392.4 630.1L1399.9 630.1L1398.5 626.4L1391.1 626.4ZM1407.4 630.1L1414.9 630.1L1413.4 626.4L1406 626.4ZM1422.4 630.1L1429.9 630.1L1428.3 626.4L1420.8 626.4ZM1437.4 630.1L1444.9 630.1L1443.2 626.4L1435.7 626.4ZM1383.6 626.4L1391.1 626.4L1389.8 622.8L1382.4 622.8ZM1398.5 626.4L1406 626.4L1404.5 622.8L1397.1 622.8ZM1413.4 626.4L1420.8 626.4L1419.3 622.8L1411.9 622.8ZM1428.3 626.4L1435.7 626.4L1434.1 622.8L1426.7 622.8ZM1443.2 626.4L1450.6 626.4L1448.8 622.8L1441.5 622.8ZM1548.7 662L1556.7 662L1553.8 657.7L1545.8 657.7ZM1564.8 662L1572.8 662L1569.8 657.7L1561.8 657.7ZM1580.9 662L1588.9 662L1585.7 657.7L1577.8 657.7ZM1597 662L1605 662L1601.7 657.7L1593.7 657.7ZM1613.1 662L1621.1 662L1617.6 657.7L1609.7 657.7ZM1553.8 657.7L1561.8 657.7L1558.9 653.6L1551 653.6ZM1569.8 657.7L1577.8 657.7L1574.7 653.6L1566.8 653.6ZM1585.7 657.7L1593.7 657.7L1590.5 653.6L1582.6 653.6ZM1601.7 657.7L1609.7 657.7L1606.4 653.6L1598.4 653.6ZM1617.6 657.7L1625.6 657.7L1622.2 653.6L1614.3 653.6ZM1543.1 653.6L1551 653.6L1548.2 649.5L1540.4 649.5ZM1558.9 653.6L1566.8 653.6L1563.9 649.5L1556.1 649.5ZM1574.7 653.6L1582.6 653.6L1579.6 649.5L1571.7 649.5ZM1590.5 653.6L1598.4 653.6L1595.3 649.5L1587.4 649.5ZM1606.4 653.6L1614.3 653.6L1610.9 649.5L1603.1 649.5ZM1548.2 649.5L1556.1 649.5L1553.3 645.5L1545.5 645.5ZM1563.9 649.5L1571.7 649.5L1568.8 645.5L1561 645.5ZM1579.6 649.5L1587.4 649.5L1584.3 645.5L1576.6 645.5ZM1595.3 649.5L1603.1 649.5L1599.9 645.5L1592.1 645.5ZM1610.9 649.5L1618.8 649.5L1615.4 645.5L1607.7 645.5ZM1537.7 645.5L1545.5 645.5L1542.8 641.5L1535.1 641.5ZM1553.3 645.5L1561 645.5L1558.2 641.5L1550.5 641.5ZM1568.8 645.5L1576.6 645.5L1573.6 641.5L1565.9 641.5ZM1584.3 645.5L1592.1 645.5L1589 641.5L1581.3 641.5ZM1599.9 645.5L1607.7 645.5L1604.4 641.5L1596.7 641.5ZM1542.8 641.5L1550.5 641.5L1547.8 637.7L1540.2 637.7ZM1558.2 641.5L1565.9 641.5L1563.1 637.7L1555.5 637.7ZM1573.6 641.5L1581.3 641.5L1578.4 637.7L1570.7 637.7ZM1589 641.5L1596.7 641.5L1593.6 637.7L1586 637.7ZM1604.4 641.5L1612.1 641.5L1608.9 637.7L1601.3 637.7ZM1532.5 637.7L1540.2 637.7L1537.6 633.9L1530 633.9ZM1547.8 637.7L1555.5 637.7L1552.7 633.9L1545.2 633.9ZM1563.1 637.7L1570.7 637.7L1567.9 633.9L1560.3 633.9ZM1578.4 637.7L1586 637.7L1583 633.9L1575.5 633.9ZM1593.6 637.7L1601.3 637.7L1598.2 633.9L1590.6 633.9ZM1537.6 633.9L1545.2 633.9L1542.6 630.1L1535 630.1ZM1552.7 633.9L1560.3 633.9L1557.6 630.1L1550.1 630.1ZM1567.9 633.9L1575.5 633.9L1572.6 630.1L1565.1 630.1ZM1583 633.9L1590.6 633.9L1587.6 630.1L1580.1 630.1ZM1598.2 633.9L1605.7 633.9L1602.6 630.1L1595.1 630.1ZM1527.5 630.1L1535 630.1L1532.5 626.4L1525.1 626.4ZM1542.6 630.1L1550.1 630.1L1547.4 626.4L1540 626.4ZM1557.6 630.1L1565.1 630.1L1562.3 626.4L1554.9 626.4ZM1572.6 630.1L1580.1 630.1L1577.2 626.4L1569.8 626.4ZM1587.6 630.1L1595.1 630.1L1592.1 626.4L1584.7 626.4ZM1532.5 626.4L1540 626.4L1537.5 622.8L1530.1 622.8ZM1547.4 626.4L1554.9 626.4L1552.2 622.8L1544.8 622.8ZM1562.3 626.4L1569.8 626.4L1567 622.8L1559.6 622.8ZM1577.2 626.4L1584.7 626.4L1581.8 622.8L1574.4 622.8ZM1592.1 626.4L1599.6 626.4L1596.5 622.8L1589.2 622.8ZM858.1 622.8L865.4 622.8L868.5 619.2L861.1 619.2ZM872.8 622.8L880.2 622.8L883.1 619.2L875.8 619.2ZM887.6 622.8L895 622.8L897.8 619.2L890.4 619.2ZM902.4 622.8L909.8 622.8L912.4 619.2L905.1 619.2ZM917.1 622.8L924.5 622.8L927.1 619.2L919.7 619.2ZM868.5 619.2L875.8 619.2L878.7 615.7L871.4 615.7ZM883.1 619.2L890.4 619.2L893.2 615.7L886 615.7ZM897.8 619.2L905.1 619.2L907.8 615.7L900.5 615.7ZM912.4 619.2L919.7 619.2L922.3 615.7L915 615.7ZM927.1 619.2L934.4 619.2L936.8 615.7L929.6 615.7ZM864.2 615.7L871.4 615.7L874.4 612.3L867.2 612.3ZM878.7 615.7L886 615.7L888.8 612.3L881.6 612.3ZM893.2 615.7L900.5 615.7L903.2 612.3L896 612.3ZM907.8 615.7L915 615.7L917.6 612.3L910.4 612.3ZM922.3 615.7L929.6 615.7L932 612.3L924.8 612.3ZM874.4 612.3L881.6 612.3L884.4 608.9L877.2 608.9ZM888.8 612.3L896 612.3L898.7 608.9L891.5 608.9ZM903.2 612.3L910.4 612.3L913 608.9L905.8 608.9ZM917.6 612.3L924.8 612.3L927.3 608.9L920.1 608.9ZM932 612.3L939.2 612.3L941.6 608.9L934.4 608.9ZM870.1 608.9L877.2 608.9L880.1 605.6L873 605.6ZM884.4 608.9L891.5 608.9L894.3 605.6L887.2 605.6ZM898.7 608.9L905.8 608.9L908.4 605.6L901.4 605.6ZM913 608.9L920.1 608.9L922.6 605.6L915.5 605.6ZM927.3 608.9L934.4 608.9L936.8 605.6L929.7 605.6ZM880.1 605.6L887.2 605.6L889.9 602.3L882.9 602.3ZM894.3 605.6L901.4 605.6L904 602.3L896.9 602.3ZM908.4 605.6L915.5 605.6L918 602.3L911 602.3ZM922.6 605.6L929.7 605.6L932.1 602.3L925.1 602.3ZM936.8 605.6L943.9 605.6L946.2 602.3L939.2 602.3ZM875.8 602.3L882.9 602.3L885.6 599L878.6 599ZM889.9 602.3L896.9 602.3L899.6 599L892.6 599ZM904 602.3L911 602.3L913.5 599L906.6 599ZM918 602.3L925.1 602.3L927.5 599L920.5 599ZM932.1 602.3L939.2 602.3L941.5 599L934.5 599ZM885.6 599L892.6 599L895.2 595.8L888.3 595.8ZM899.6 599L906.6 599L909.1 595.8L902.2 595.8ZM913.5 599L920.5 599L923 595.8L916 595.8ZM927.5 599L934.5 599L936.8 595.8L929.9 595.8ZM941.5 599L948.4 599L950.7 595.8L943.7 595.8ZM881.4 595.8L888.3 595.8L891 592.7L884.1 592.7ZM895.2 595.8L902.2 595.8L904.7 592.7L897.9 592.7ZM909.1 595.8L916 595.8L918.5 592.7L911.6 592.7ZM923 595.8L929.9 595.8L932.2 592.7L925.3 592.7ZM936.8 595.8L943.7 595.8L946 592.7L939.1 592.7ZM891 592.7L897.9 592.7L900.4 589.6L893.6 589.6ZM904.7 592.7L911.6 592.7L914.1 589.6L907.2 589.6ZM918.5 592.7L925.3 592.7L927.7 589.6L920.9 589.6ZM932.2 592.7L939.1 592.7L941.3 589.6L934.5 589.6ZM946 592.7L952.8 592.7L955 589.6L948.2 589.6ZM1005.8 622.8L1013.1 622.8L1015 619.2L1007.6 619.2ZM1020.5 622.8L1027.9 622.8L1029.6 619.2L1022.3 619.2ZM1035.3 622.8L1042.7 622.8L1044.2 619.2L1036.9 619.2ZM1050.1 622.8L1057.4 622.8L1058.9 619.2L1051.6 619.2ZM1064.8 622.8L1072.2 622.8L1073.5 619.2L1066.2 619.2ZM1015 619.2L1022.3 619.2L1024 615.7L1016.7 615.7ZM1029.6 619.2L1036.9 619.2L1038.5 615.7L1031.3 615.7ZM1044.2 619.2L1051.6 619.2L1053.1 615.7L1045.8 615.7ZM1058.9 619.2L1066.2 619.2L1067.6 615.7L1060.3 615.7ZM1073.5 619.2L1080.9 619.2L1082.1 615.7L1074.9 615.7ZM1009.5 615.7L1016.7 615.7L1018.5 612.3L1011.3 612.3ZM1024 615.7L1031.3 615.7L1032.9 612.3L1025.7 612.3ZM1038.5 615.7L1045.8 615.7L1047.3 612.3L1040.1 612.3ZM1053.1 615.7L1060.3 615.7L1061.7 612.3L1054.5 612.3ZM1067.6 615.7L1074.9 615.7L1076.1 612.3L1068.9 612.3ZM1018.5 612.3L1025.7 612.3L1027.4 608.9L1020.2 608.9ZM1032.9 612.3L1040.1 612.3L1041.7 608.9L1034.5 608.9ZM1047.3 612.3L1054.5 612.3L1056 608.9L1048.8 608.9ZM1061.7 612.3L1068.9 612.3L1070.3 608.9L1063.1 608.9ZM1076.1 612.3L1083.3 612.3L1084.6 608.9L1077.4 608.9ZM1013.1 608.9L1020.2 608.9L1021.9 605.6L1014.8 605.6ZM1027.4 608.9L1034.5 608.9L1036.1 605.6L1029 605.6ZM1041.7 608.9L1048.8 608.9L1050.3 605.6L1043.2 605.6ZM1056 608.9L1063.1 608.9L1064.5 605.6L1057.4 605.6ZM1070.3 608.9L1077.4 608.9L1078.7 605.6L1071.6 605.6ZM1021.9 605.6L1029 605.6L1030.6 602.3L1023.6 602.3ZM1036.1 605.6L1043.2 605.6L1044.7 602.3L1037.7 602.3ZM1050.3 605.6L1057.4 605.6L1058.8 602.3L1051.7 602.3ZM1064.5 605.6L1071.6 605.6L1072.8 602.3L1065.8 602.3ZM1078.7 605.6L1085.7 605.6L1086.9 602.3L1079.9 602.3ZM1016.6 602.3L1023.6 602.3L1025.2 599L1018.3 599ZM1030.6 602.3L1037.7 602.3L1039.2 599L1032.2 599ZM1044.7 602.3L1051.7 602.3L1053.2 599L1046.2 599ZM1058.8 602.3L1065.8 602.3L1067.1 599L1060.1 599ZM1072.8 602.3L1079.9 602.3L1081.1 599L1074.1 599ZM1025.2 599L1032.2 599L1033.8 595.8L1026.9 595.8ZM1039.2 599L1046.2 599L1047.6 595.8L1040.7 595.8ZM1053.2 599L1060.1 599L1061.5 595.8L1054.6 595.8ZM1067.1 599L1074.1 599L1075.3 595.8L1068.4 595.8ZM1081.1 599L1088.1 599L1089.2 595.8L1082.3 595.8ZM1019.9 595.8L1026.9 595.8L1028.5 592.7L1021.6 592.7ZM1033.8 595.8L1040.7 595.8L1042.2 592.7L1035.3 592.7ZM1047.6 595.8L1054.6 595.8L1055.9 592.7L1049.1 592.7ZM1061.5 595.8L1068.4 595.8L1069.7 592.7L1062.8 592.7ZM1075.3 595.8L1082.3 595.8L1083.4 592.7L1076.6 592.7ZM1028.5 592.7L1035.3 592.7L1036.8 589.6L1030 589.6ZM1042.2 592.7L1049.1 592.7L1050.5 589.6L1043.7 589.6ZM1055.9 592.7L1062.8 592.7L1064.1 589.6L1057.3 589.6ZM1069.7 592.7L1076.6 592.7L1077.8 589.6L1071 589.6ZM1083.4 592.7L1090.3 592.7L1091.4 589.6L1084.6 589.6ZM1153.5 622.8L1160.8 622.8L1161.4 619.2L1154.1 619.2ZM1168.2 622.8L1175.6 622.8L1176.1 619.2L1168.8 619.2ZM1183 622.8L1190.4 622.8L1190.7 619.2L1183.4 619.2ZM1197.8 622.8L1205.1 622.8L1205.4 619.2L1198.1 619.2ZM1212.5 622.8L1219.9 622.8L1220 619.2L1212.7 619.2ZM1161.4 619.2L1168.8 619.2L1169.3 615.7L1162 615.7ZM1176.1 619.2L1183.4 619.2L1183.8 615.7L1176.6 615.7ZM1190.7 619.2L1198.1 619.2L1198.4 615.7L1191.1 615.7ZM1205.4 619.2L1212.7 619.2L1212.9 615.7L1205.6 615.7ZM1220 619.2L1227.4 619.2L1227.4 615.7L1220.1 615.7ZM1154.8 615.7L1162 615.7L1162.6 612.3L1155.4 612.3ZM1169.3 615.7L1176.6 615.7L1177 612.3L1169.8 612.3ZM1183.8 615.7L1191.1 615.7L1191.4 612.3L1184.2 612.3ZM1198.4 615.7L1205.6 615.7L1205.9 612.3L1198.6 612.3ZM1212.9 615.7L1220.1 615.7L1220.3 612.3L1213.1 612.3ZM1162.6 612.3L1169.8 612.3L1170.3 608.9L1163.2 608.9ZM1177 612.3L1184.2 612.3L1184.6 608.9L1177.5 608.9ZM1191.4 612.3L1198.6 612.3L1198.9 608.9L1191.8 608.9ZM1205.9 612.3L1213.1 612.3L1213.2 608.9L1206.1 608.9ZM1220.3 612.3L1227.5 612.3L1227.5 608.9L1220.4 608.9ZM1156 608.9L1163.2 608.9L1163.8 605.6L1156.7 605.6ZM1170.3 608.9L1177.5 608.9L1177.9 605.6L1170.8 605.6ZM1184.6 608.9L1191.8 608.9L1192.1 605.6L1185 605.6ZM1198.9 608.9L1206.1 608.9L1206.3 605.6L1199.2 605.6ZM1213.2 608.9L1220.4 608.9L1220.5 605.6L1213.4 605.6ZM1163.8 605.6L1170.8 605.6L1171.3 602.3L1164.3 602.3ZM1177.9 605.6L1185 605.6L1185.4 602.3L1178.4 602.3ZM1192.1 605.6L1199.2 605.6L1199.5 602.3L1192.5 602.3ZM1206.3 605.6L1213.4 605.6L1213.6 602.3L1206.5 602.3ZM1220.5 605.6L1227.6 605.6L1227.6 602.3L1220.6 602.3ZM1157.3 602.3L1164.3 602.3L1164.9 599L1157.9 599ZM1171.3 602.3L1178.4 602.3L1178.8 599L1171.8 599ZM1185.4 602.3L1192.5 602.3L1192.8 599L1185.8 599ZM1199.5 602.3L1206.5 602.3L1206.7 599L1199.8 599ZM1213.6 602.3L1220.6 602.3L1220.7 599L1213.7 599ZM1164.9 599L1171.8 599L1172.3 595.8L1165.4 595.8ZM1178.8 599L1185.8 599L1186.2 595.8L1179.2 595.8ZM1192.8 599L1199.8 599L1200 595.8L1193.1 595.8ZM1206.7 599L1213.7 599L1213.9 595.8L1207 595.8ZM1220.7 599L1227.7 599L1227.7 595.8L1220.8 595.8ZM1158.5 595.8L1165.4 595.8L1165.9 592.7L1159.1 592.7ZM1172.3 595.8L1179.2 595.8L1179.7 592.7L1172.8 592.7ZM1186.2 595.8L1193.1 595.8L1193.4 592.7L1186.5 592.7ZM1200 595.8L1207 595.8L1207.2 592.7L1200.3 592.7ZM1213.9 595.8L1220.8 595.8L1220.9 592.7L1214 592.7ZM1165.9 592.7L1172.8 592.7L1173.3 589.6L1166.4 589.6ZM1179.7 592.7L1186.5 592.7L1186.9 589.6L1180.1 589.6ZM1193.4 592.7L1200.3 592.7L1200.6 589.6L1193.7 589.6ZM1207.2 592.7L1214 592.7L1214.2 589.6L1207.4 589.6ZM1220.9 592.7L1227.8 592.7L1227.8 589.6L1221 589.6ZM1301.1 622.8L1308.5 622.8L1307.9 619.2L1300.6 619.2ZM1315.9 622.8L1323.3 622.8L1322.6 619.2L1315.2 619.2ZM1330.7 622.8L1338.1 622.8L1337.2 619.2L1329.9 619.2ZM1345.5 622.8L1352.8 622.8L1351.9 619.2L1344.5 619.2ZM1360.2 622.8L1367.6 622.8L1366.5 619.2L1359.2 619.2ZM1307.9 619.2L1315.2 619.2L1314.6 615.7L1307.3 615.7ZM1322.6 619.2L1329.9 619.2L1329.1 615.7L1321.9 615.7ZM1337.2 619.2L1344.5 619.2L1343.6 615.7L1336.4 615.7ZM1351.9 619.2L1359.2 619.2L1358.2 615.7L1350.9 615.7ZM1366.5 619.2L1373.8 619.2L1372.7 615.7L1365.4 615.7ZM1300.1 615.7L1307.3 615.7L1306.7 612.3L1299.5 612.3ZM1314.6 615.7L1321.9 615.7L1321.2 612.3L1313.9 612.3ZM1329.1 615.7L1336.4 615.7L1335.6 612.3L1328.4 612.3ZM1343.6 615.7L1350.9 615.7L1350 612.3L1342.8 612.3ZM1358.2 615.7L1365.4 615.7L1364.4 612.3L1357.2 612.3ZM1306.7 612.3L1313.9 612.3L1313.3 608.9L1306.2 608.9ZM1321.2 612.3L1328.4 612.3L1327.6 608.9L1320.5 608.9ZM1335.6 612.3L1342.8 612.3L1341.9 608.9L1334.8 608.9ZM1350 612.3L1357.2 612.3L1356.2 608.9L1349.1 608.9ZM1364.4 612.3L1371.6 612.3L1370.5 608.9L1363.3 608.9ZM1299 608.9L1306.2 608.9L1305.6 605.6L1298.5 605.6ZM1313.3 608.9L1320.5 608.9L1319.8 605.6L1312.7 605.6ZM1327.6 608.9L1334.8 608.9L1334 605.6L1326.9 605.6ZM1341.9 608.9L1349.1 608.9L1348.1 605.6L1341 605.6ZM1356.2 608.9L1363.3 608.9L1362.3 605.6L1355.2 605.6ZM1305.6 605.6L1312.7 605.6L1312.1 602.3L1305 602.3ZM1319.8 605.6L1326.9 605.6L1326.1 602.3L1319.1 602.3ZM1334 605.6L1341 605.6L1340.2 602.3L1333.2 602.3ZM1348.1 605.6L1355.2 605.6L1354.3 602.3L1347.2 602.3ZM1362.3 605.6L1369.4 605.6L1368.4 602.3L1361.3 602.3ZM1298 602.3L1305 602.3L1304.5 599L1297.5 599ZM1312.1 602.3L1319.1 602.3L1318.4 599L1311.5 599ZM1326.1 602.3L1333.2 602.3L1332.4 599L1325.4 599ZM1340.2 602.3L1347.2 602.3L1346.4 599L1339.4 599ZM1354.3 602.3L1361.3 602.3L1360.3 599L1353.3 599ZM1304.5 599L1311.5 599L1310.9 595.8L1303.9 595.8ZM1318.4 599L1325.4 599L1324.7 595.8L1317.8 595.8ZM1332.4 599L1339.4 599L1338.6 595.8L1331.6 595.8ZM1346.4 599L1353.3 599L1352.4 595.8L1345.5 595.8ZM1360.3 599L1367.3 599L1366.3 595.8L1359.4 595.8ZM1297 595.8L1303.9 595.8L1303.4 592.7L1296.5 592.7ZM1310.9 595.8L1317.8 595.8L1317.1 592.7L1310.3 592.7ZM1324.7 595.8L1331.6 595.8L1330.9 592.7L1324 592.7ZM1338.6 595.8L1345.5 595.8L1344.6 592.7L1337.8 592.7ZM1352.4 595.8L1359.4 595.8L1358.4 592.7L1351.5 592.7ZM1303.4 592.7L1310.3 592.7L1309.7 589.6L1302.9 589.6ZM1317.1 592.7L1324 592.7L1323.3 589.6L1316.5 589.6ZM1330.9 592.7L1337.8 592.7L1337 589.6L1330.2 589.6ZM1344.6 592.7L1351.5 592.7L1350.6 589.6L1343.8 589.6ZM1358.4 592.7L1365.3 592.7L1364.3 589.6L1357.4 589.6ZM1448.8 622.8L1456.2 622.8L1454.4 619.2L1447.1 619.2ZM1463.6 622.8L1471 622.8L1469.1 619.2L1461.7 619.2ZM1478.4 622.8L1485.8 622.8L1483.7 619.2L1476.4 619.2ZM1493.2 622.8L1500.5 622.8L1498.4 619.2L1491 619.2ZM1507.9 622.8L1515.3 622.8L1513 619.2L1505.7 619.2ZM1454.4 619.2L1461.7 619.2L1459.9 615.7L1452.6 615.7ZM1469.1 619.2L1476.4 619.2L1474.4 615.7L1467.2 615.7ZM1483.7 619.2L1491 619.2L1488.9 615.7L1481.7 615.7ZM1498.4 619.2L1505.7 619.2L1503.5 615.7L1496.2 615.7ZM1513 619.2L1520.3 619.2L1518 615.7L1510.7 615.7ZM1445.4 615.7L1452.6 615.7L1450.9 612.3L1443.7 612.3ZM1459.9 615.7L1467.2 615.7L1465.3 612.3L1458.1 612.3ZM1474.4 615.7L1481.7 615.7L1479.7 612.3L1472.5 612.3ZM1488.9 615.7L1496.2 615.7L1494.1 612.3L1486.9 612.3ZM1503.5 615.7L1510.7 615.7L1508.5 612.3L1501.3 612.3ZM1450.9 612.3L1458.1 612.3L1456.3 608.9L1449.1 608.9ZM1465.3 612.3L1472.5 612.3L1470.6 608.9L1463.4 608.9ZM1479.7 612.3L1486.9 612.3L1484.9 608.9L1477.7 608.9ZM1494.1 612.3L1501.3 612.3L1499.2 608.9L1492 608.9ZM1508.5 612.3L1515.7 612.3L1513.5 608.9L1506.3 608.9ZM1442 608.9L1449.1 608.9L1447.4 605.6L1440.3 605.6ZM1456.3 608.9L1463.4 608.9L1461.6 605.6L1454.5 605.6ZM1470.6 608.9L1477.7 608.9L1475.8 605.6L1468.7 605.6ZM1484.9 608.9L1492 608.9L1490 605.6L1482.9 605.6ZM1499.2 608.9L1506.3 608.9L1504.2 605.6L1497.1 605.6ZM1447.4 605.6L1454.5 605.6L1452.8 602.3L1445.8 602.3ZM1461.6 605.6L1468.7 605.6L1466.9 602.3L1459.8 602.3ZM1475.8 605.6L1482.9 605.6L1480.9 602.3L1473.9 602.3ZM1490 605.6L1497.1 605.6L1495 602.3L1488 602.3ZM1504.2 605.6L1511.3 605.6L1509.1 602.3L1502 602.3ZM1438.7 602.3L1445.8 602.3L1444.1 599L1437.1 599ZM1452.8 602.3L1459.8 602.3L1458.1 599L1451.1 599ZM1466.9 602.3L1473.9 602.3L1472 599L1465 599ZM1480.9 602.3L1488 602.3L1486 599L1479 599ZM1495 602.3L1502 602.3L1499.9 599L1493 599ZM1444.1 599L1451.1 599L1449.4 595.8L1442.5 595.8ZM1458.1 599L1465 599L1463.3 595.8L1456.3 595.8ZM1472 599L1479 599L1477.1 595.8L1470.2 595.8ZM1486 599L1493 599L1491 595.8L1484 595.8ZM1499.9 599L1506.9 599L1504.8 595.8L1497.9 595.8ZM1435.5 595.8L1442.5 595.8L1440.9 592.7L1434 592.7ZM1449.4 595.8L1456.3 595.8L1454.6 592.7L1447.7 592.7ZM1463.3 595.8L1470.2 595.8L1468.4 592.7L1461.5 592.7ZM1477.1 595.8L1484 595.8L1482.1 592.7L1475.2 592.7ZM1491 595.8L1497.9 595.8L1495.9 592.7L1489 592.7ZM1440.9 592.7L1447.7 592.7L1446.1 589.6L1439.3 589.6ZM1454.6 592.7L1461.5 592.7L1459.8 589.6L1452.9 589.6ZM1468.4 592.7L1475.2 592.7L1473.4 589.6L1466.6 589.6ZM1482.1 592.7L1489 592.7L1487 589.6L1480.2 589.6ZM1495.9 592.7L1502.7 592.7L1500.7 589.6L1493.9 589.6ZM955 589.6L961.8 589.6L963.9 586.6L957.1 586.6ZM968.6 589.6L975.5 589.6L977.4 586.6L970.6 586.6ZM982.3 589.6L989.1 589.6L991 586.6L984.2 586.6ZM995.9 589.6L1002.7 589.6L1004.5 586.6L997.7 586.6ZM1009.6 589.6L1016.4 589.6L1018 586.6L1011.3 586.6ZM963.9 586.6L970.6 586.6L972.6 583.6L965.9 583.6ZM977.4 586.6L984.2 586.6L986.1 583.6L979.3 583.6ZM991 586.6L997.7 586.6L999.5 583.6L992.8 583.6ZM1004.5 586.6L1011.3 586.6L1012.9 583.6L1006.2 583.6ZM1018 586.6L1024.8 586.6L1026.4 583.6L1019.7 583.6ZM959.2 583.6L965.9 583.6L967.9 580.6L961.2 580.6ZM972.6 583.6L979.3 583.6L981.2 580.6L974.6 580.6ZM986.1 583.6L992.8 583.6L994.6 580.6L987.9 580.6ZM999.5 583.6L1006.2 583.6L1007.9 580.6L1001.3 580.6ZM1012.9 583.6L1019.7 583.6L1021.3 580.6L1014.6 580.6ZM967.9 580.6L974.6 580.6L976.5 577.7L969.9 577.7ZM981.2 580.6L987.9 580.6L989.7 577.7L983.1 577.7ZM994.6 580.6L1001.3 580.6L1003 577.7L996.4 577.7ZM1007.9 580.6L1014.6 580.6L1016.2 577.7L1009.6 577.7ZM1021.3 580.6L1027.9 580.6L1029.5 577.7L1022.8 577.7ZM963.3 577.7L969.9 577.7L971.8 574.9L965.3 574.9ZM976.5 577.7L983.1 577.7L985 574.9L978.4 574.9ZM989.7 577.7L996.4 577.7L998.1 574.9L991.5 574.9ZM1003 577.7L1009.6 577.7L1011.3 574.9L1004.7 574.9ZM1016.2 577.7L1022.8 577.7L1024.4 574.9L1017.8 574.9ZM971.8 574.9L978.4 574.9L980.3 572L973.7 572ZM985 574.9L991.5 574.9L993.3 572L986.8 572ZM998.1 574.9L1004.7 574.9L1006.4 572L999.8 572ZM1011.3 574.9L1017.8 574.9L1019.4 572L1012.9 572ZM1024.4 574.9L1031 574.9L1032.4 572L1025.9 572ZM967.2 572L973.7 572L975.6 569.3L969.2 569.3ZM980.3 572L986.8 572L988.6 569.3L982.1 569.3ZM993.3 572L999.8 572L1001.5 569.3L995.1 569.3ZM1006.4 572L1012.9 572L1014.5 569.3L1008 569.3ZM1019.4 572L1025.9 572L1027.4 569.3L1021 569.3ZM975.6 569.3L982.1 569.3L983.9 566.5L977.5 566.5ZM988.6 569.3L995.1 569.3L996.8 566.5L990.4 566.5ZM1001.5 569.3L1008 569.3L1009.6 566.5L1003.2 566.5ZM1014.5 569.3L1021 569.3L1022.5 566.5L1016.1 566.5ZM1027.4 569.3L1033.9 569.3L1035.4 566.5L1028.9 566.5ZM971.1 566.5L977.5 566.5L979.3 563.8L972.9 563.8ZM983.9 566.5L990.4 566.5L992.1 563.8L985.7 563.8ZM996.8 566.5L1003.2 566.5L1004.9 563.8L998.5 563.8ZM1009.6 566.5L1016.1 566.5L1017.6 563.8L1011.2 563.8ZM1022.5 566.5L1028.9 566.5L1030.4 563.8L1024 563.8ZM979.3 563.8L985.7 563.8L987.5 561.1L981.1 561.1ZM992.1 563.8L998.5 563.8L1000.1 561.1L993.8 561.1ZM1004.9 563.8L1011.2 563.8L1012.8 561.1L1006.5 561.1ZM1017.6 563.8L1024 563.8L1025.5 561.1L1019.2 561.1ZM1030.4 563.8L1036.8 563.8L1038.2 561.1L1031.8 561.1ZM1091.4 589.6L1098.2 589.6L1099.3 586.6L1092.5 586.6ZM1105.1 589.6L1111.9 589.6L1112.8 586.6L1106 586.6ZM1118.7 589.6L1125.5 589.6L1126.3 586.6L1119.6 586.6ZM1132.3 589.6L1139.2 589.6L1139.9 586.6L1133.1 586.6ZM1146 589.6L1152.8 589.6L1153.4 586.6L1146.7 586.6ZM1099.3 586.6L1106 586.6L1107 583.6L1100.3 583.6ZM1112.8 586.6L1119.6 586.6L1120.4 583.6L1113.7 583.6ZM1126.3 586.6L1133.1 586.6L1133.9 583.6L1127.2 583.6ZM1139.9 586.6L1146.7 586.6L1147.3 583.6L1140.6 583.6ZM1153.4 586.6L1160.2 586.6L1160.8 583.6L1154 583.6ZM1093.6 583.6L1100.3 583.6L1101.3 580.6L1094.6 580.6ZM1107 583.6L1113.7 583.6L1114.6 580.6L1108 580.6ZM1120.4 583.6L1127.2 583.6L1128 580.6L1121.3 580.6ZM1133.9 583.6L1140.6 583.6L1141.3 580.6L1134.6 580.6ZM1147.3 583.6L1154 583.6L1154.6 580.6L1148 580.6ZM1101.3 580.6L1108 580.6L1108.9 577.7L1102.3 577.7ZM1114.6 580.6L1121.3 580.6L1122.1 577.7L1115.5 577.7ZM1128 580.6L1134.6 580.6L1135.4 577.7L1128.7 577.7ZM1141.3 580.6L1148 580.6L1148.6 577.7L1142 577.7ZM1154.6 580.6L1161.3 580.6L1161.8 577.7L1155.2 577.7ZM1095.6 577.7L1102.3 577.7L1103.2 574.9L1096.7 574.9ZM1108.9 577.7L1115.5 577.7L1116.4 574.9L1109.8 574.9ZM1122.1 577.7L1128.7 577.7L1129.5 574.9L1123 574.9ZM1135.4 577.7L1142 577.7L1142.7 574.9L1136.1 574.9ZM1148.6 577.7L1155.2 577.7L1155.8 574.9L1149.2 574.9ZM1103.2 574.9L1109.8 574.9L1110.7 572L1104.2 572ZM1116.4 574.9L1123 574.9L1123.8 572L1117.2 572ZM1129.5 574.9L1136.1 574.9L1136.8 572L1130.3 572ZM1142.7 574.9L1149.2 574.9L1149.9 572L1143.3 572ZM1155.8 574.9L1162.4 574.9L1162.9 572L1156.4 572ZM1097.7 572L1104.2 572L1105.1 569.3L1098.7 569.3ZM1110.7 572L1117.2 572L1118.1 569.3L1111.6 569.3ZM1123.8 572L1130.3 572L1131 569.3L1124.6 569.3ZM1136.8 572L1143.3 572L1144 569.3L1137.5 569.3ZM1149.9 572L1156.4 572L1156.9 569.3L1150.5 569.3ZM1105.1 569.3L1111.6 569.3L1112.5 566.5L1106.1 566.5ZM1118.1 569.3L1124.6 569.3L1125.4 566.5L1118.9 566.5ZM1131 569.3L1137.5 569.3L1138.2 566.5L1131.8 566.5ZM1144 569.3L1150.5 569.3L1151.1 566.5L1144.6 566.5ZM1156.9 569.3L1163.4 569.3L1163.9 566.5L1157.5 566.5ZM1099.6 566.5L1106.1 566.5L1107 563.8L1100.6 563.8ZM1112.5 566.5L1118.9 566.5L1119.8 563.8L1113.4 563.8ZM1125.4 566.5L1131.8 566.5L1132.5 563.8L1126.1 563.8ZM1138.2 566.5L1144.6 566.5L1145.3 563.8L1138.9 563.8ZM1151.1 566.5L1157.5 566.5L1158 563.8L1151.7 563.8ZM1107 563.8L1113.4 563.8L1114.2 561.1L1107.9 561.1ZM1119.8 563.8L1126.1 563.8L1126.9 561.1L1120.6 561.1ZM1132.5 563.8L1138.9 563.8L1139.6 561.1L1133.2 561.1ZM1145.3 563.8L1151.7 563.8L1152.3 561.1L1145.9 561.1ZM1158 563.8L1164.4 563.8L1164.9 561.1L1158.6 561.1ZM1227.8 589.6L1234.7 589.6L1234.7 586.6L1227.9 586.6ZM1241.5 589.6L1248.3 589.6L1248.2 586.6L1241.4 586.6ZM1255.1 589.6L1261.9 589.6L1261.7 586.6L1255 586.6ZM1268.8 589.6L1275.6 589.6L1275.3 586.6L1268.5 586.6ZM1282.4 589.6L1289.2 589.6L1288.8 586.6L1282 586.6ZM1234.7 586.6L1241.4 586.6L1241.4 583.6L1234.7 583.6ZM1248.2 586.6L1255 586.6L1254.8 583.6L1248.1 583.6ZM1261.7 586.6L1268.5 586.6L1268.3 583.6L1261.5 583.6ZM1275.3 586.6L1282 586.6L1281.7 583.6L1275 583.6ZM1288.8 586.6L1295.6 586.6L1295.1 583.6L1288.4 583.6ZM1227.9 583.6L1234.7 583.6L1234.7 580.6L1228 580.6ZM1241.4 583.6L1248.1 583.6L1248 580.6L1241.3 580.6ZM1254.8 583.6L1261.5 583.6L1261.3 580.6L1254.7 580.6ZM1268.3 583.6L1275 583.6L1274.7 580.6L1268 580.6ZM1281.7 583.6L1288.4 583.6L1288 580.6L1281.3 580.6ZM1234.7 580.6L1241.3 580.6L1241.3 577.7L1234.7 577.7ZM1248 580.6L1254.7 580.6L1254.5 577.7L1247.9 577.7ZM1261.3 580.6L1268 580.6L1267.7 577.7L1261.1 577.7ZM1274.7 580.6L1281.3 580.6L1281 577.7L1274.4 577.7ZM1288 580.6L1294.7 580.6L1294.2 577.7L1287.6 577.7ZM1228 577.7L1234.7 577.7L1234.7 574.9L1228.1 574.9ZM1241.3 577.7L1247.9 577.7L1247.8 574.9L1241.2 574.9ZM1254.5 577.7L1261.1 577.7L1260.9 574.9L1254.4 574.9ZM1267.7 577.7L1274.4 577.7L1274.1 574.9L1267.5 574.9ZM1281 577.7L1287.6 577.7L1287.2 574.9L1280.6 574.9ZM1234.7 574.9L1241.2 574.9L1241.2 572L1234.6 572ZM1247.8 574.9L1254.4 574.9L1254.2 572L1247.7 572ZM1260.9 574.9L1267.5 574.9L1267.3 572L1260.7 572ZM1274.1 574.9L1280.6 574.9L1280.3 572L1273.8 572ZM1287.2 574.9L1293.8 574.9L1293.4 572L1286.8 572ZM1228.1 572L1234.6 572L1234.6 569.3L1228.2 569.3ZM1241.2 572L1247.7 572L1247.6 569.3L1241.1 569.3ZM1254.2 572L1260.7 572L1260.5 569.3L1254.1 569.3ZM1267.3 572L1273.8 572L1273.5 569.3L1267 569.3ZM1280.3 572L1286.8 572L1286.5 569.3L1280 569.3ZM1234.6 569.3L1241.1 569.3L1241.1 566.5L1234.6 566.5ZM1247.6 569.3L1254.1 569.3L1253.9 566.5L1247.5 566.5ZM1260.5 569.3L1267 569.3L1266.8 566.5L1260.4 566.5ZM1273.5 569.3L1280 569.3L1279.6 566.5L1273.2 566.5ZM1286.5 569.3L1292.9 569.3L1292.5 566.5L1286.1 566.5ZM1228.2 566.5L1234.6 566.5L1234.6 563.8L1228.3 563.8ZM1241.1 566.5L1247.5 566.5L1247.4 563.8L1241 563.8ZM1253.9 566.5L1260.4 566.5L1260.2 563.8L1253.8 563.8ZM1266.8 566.5L1273.2 566.5L1272.9 563.8L1266.6 563.8ZM1279.6 566.5L1286.1 566.5L1285.7 563.8L1279.3 563.8ZM1234.6 563.8L1241 563.8L1241 561.1L1234.6 561.1ZM1247.4 563.8L1253.8 563.8L1253.7 561.1L1247.3 561.1ZM1260.2 563.8L1266.6 563.8L1266.3 561.1L1260 561.1ZM1272.9 563.8L1279.3 563.8L1279 561.1L1272.7 561.1ZM1285.7 563.8L1292.1 563.8L1291.7 561.1L1285.3 561.1ZM1364.3 589.6L1371.1 589.6L1370.1 586.6L1363.3 586.6ZM1377.9 589.6L1384.7 589.6L1383.6 586.6L1376.8 586.6ZM1391.6 589.6L1398.4 589.6L1397.1 586.6L1390.4 586.6ZM1405.2 589.6L1412 589.6L1410.7 586.6L1403.9 586.6ZM1418.8 589.6L1425.7 589.6L1424.2 586.6L1417.4 586.6ZM1370.1 586.6L1376.8 586.6L1375.8 583.6L1369 583.6ZM1383.6 586.6L1390.4 586.6L1389.2 583.6L1382.5 583.6ZM1397.1 586.6L1403.9 586.6L1402.6 583.6L1395.9 583.6ZM1410.7 586.6L1417.4 586.6L1416.1 583.6L1409.3 583.6ZM1424.2 586.6L1431 586.6L1429.5 583.6L1422.8 583.6ZM1362.3 583.6L1369 583.6L1368 580.6L1361.4 580.6ZM1375.8 583.6L1382.5 583.6L1381.4 580.6L1374.7 580.6ZM1389.2 583.6L1395.9 583.6L1394.7 580.6L1388 580.6ZM1402.6 583.6L1409.3 583.6L1408 580.6L1401.4 580.6ZM1416.1 583.6L1422.8 583.6L1421.4 580.6L1414.7 580.6ZM1368 580.6L1374.7 580.6L1373.7 577.7L1367 577.7ZM1381.4 580.6L1388 580.6L1386.9 577.7L1380.3 577.7ZM1394.7 580.6L1401.4 580.6L1400.1 577.7L1393.5 577.7ZM1408 580.6L1414.7 580.6L1413.4 577.7L1406.8 577.7ZM1421.4 580.6L1428 580.6L1426.6 577.7L1420 577.7ZM1360.4 577.7L1367 577.7L1366.1 574.9L1359.5 574.9ZM1373.7 577.7L1380.3 577.7L1379.2 574.9L1372.6 574.9ZM1386.9 577.7L1393.5 577.7L1392.3 574.9L1385.8 574.9ZM1400.1 577.7L1406.8 577.7L1405.5 574.9L1398.9 574.9ZM1413.4 577.7L1420 577.7L1418.6 574.9L1412.1 574.9ZM1366.1 574.9L1372.6 574.9L1371.6 572L1365.1 572ZM1379.2 574.9L1385.8 574.9L1384.7 572L1378.1 572ZM1392.3 574.9L1398.9 574.9L1397.7 572L1391.2 572ZM1405.5 574.9L1412.1 574.9L1410.8 572L1404.2 572ZM1418.6 574.9L1425.2 574.9L1423.8 572L1417.3 572ZM1358.6 572L1365.1 572L1364.2 569.3L1357.7 569.3ZM1371.6 572L1378.1 572L1377.1 569.3L1370.6 569.3ZM1384.7 572L1391.2 572L1390.1 569.3L1383.6 569.3ZM1397.7 572L1404.2 572L1403 569.3L1396.5 569.3ZM1410.8 572L1417.3 572L1416 569.3L1409.5 569.3ZM1364.2 569.3L1370.6 569.3L1369.7 566.5L1363.2 566.5ZM1377.1 569.3L1383.6 569.3L1382.5 566.5L1376.1 566.5ZM1390.1 569.3L1396.5 569.3L1395.4 566.5L1388.9 566.5ZM1403 569.3L1409.5 569.3L1408.2 566.5L1401.8 566.5ZM1416 569.3L1422.4 569.3L1421.1 566.5L1414.7 566.5ZM1356.8 566.5L1363.2 566.5L1362.3 563.8L1355.9 563.8ZM1369.7 566.5L1376.1 566.5L1375.1 563.8L1368.7 563.8ZM1382.5 566.5L1388.9 566.5L1387.8 563.8L1381.5 563.8ZM1395.4 566.5L1401.8 566.5L1400.6 563.8L1394.2 563.8ZM1408.2 566.5L1414.7 566.5L1413.4 563.8L1407 563.8ZM1362.3 563.8L1368.7 563.8L1367.7 561.1L1361.4 561.1ZM1375.1 563.8L1381.5 563.8L1380.4 561.1L1374.1 561.1ZM1387.8 563.8L1394.2 563.8L1393.1 561.1L1386.7 561.1ZM1400.6 563.8L1407 563.8L1405.8 561.1L1399.4 561.1ZM1413.4 563.8L1419.7 563.8L1418.4 561.1L1412.1 561.1ZM1500.7 589.6L1507.5 589.6L1505.4 586.6L1498.7 586.6ZM1514.3 589.6L1521.2 589.6L1519 586.6L1512.2 586.6ZM1528 589.6L1534.8 589.6L1532.5 586.6L1525.8 586.6ZM1541.6 589.6L1548.4 589.6L1546.1 586.6L1539.3 586.6ZM1555.3 589.6L1562.1 589.6L1559.6 586.6L1552.8 586.6ZM1505.4 586.6L1512.2 586.6L1510.1 583.6L1503.4 583.6ZM1519 586.6L1525.8 586.6L1523.6 583.6L1516.8 583.6ZM1532.5 586.6L1539.3 586.6L1537 583.6L1530.3 583.6ZM1546.1 586.6L1552.8 586.6L1550.4 583.6L1543.7 583.6ZM1559.6 586.6L1566.4 586.6L1563.9 583.6L1557.2 583.6ZM1496.7 583.6L1503.4 583.6L1501.4 580.6L1494.7 580.6ZM1510.1 583.6L1516.8 583.6L1514.7 580.6L1508.1 580.6ZM1523.6 583.6L1530.3 583.6L1528.1 580.6L1521.4 580.6ZM1537 583.6L1543.7 583.6L1541.4 580.6L1534.7 580.6ZM1550.4 583.6L1557.2 583.6L1554.7 580.6L1548.1 580.6ZM1501.4 580.6L1508.1 580.6L1506 577.7L1499.4 577.7ZM1514.7 580.6L1521.4 580.6L1519.3 577.7L1512.7 577.7ZM1528.1 580.6L1534.7 580.6L1532.5 577.7L1525.9 577.7ZM1541.4 580.6L1548.1 580.6L1545.8 577.7L1539.1 577.7ZM1554.7 580.6L1561.4 580.6L1559 577.7L1552.4 577.7ZM1492.8 577.7L1499.4 577.7L1497.5 574.9L1490.9 574.9ZM1506 577.7L1512.7 577.7L1510.6 574.9L1504 574.9ZM1519.3 577.7L1525.9 577.7L1523.8 574.9L1517.2 574.9ZM1532.5 577.7L1539.1 577.7L1536.9 574.9L1530.3 574.9ZM1545.8 577.7L1552.4 577.7L1550 574.9L1543.5 574.9ZM1497.5 574.9L1504 574.9L1502.1 572L1495.6 572ZM1510.6 574.9L1517.2 574.9L1515.1 572L1508.6 572ZM1523.8 574.9L1530.3 574.9L1528.2 572L1521.6 572ZM1536.9 574.9L1543.5 574.9L1541.2 572L1534.7 572ZM1550 574.9L1556.6 574.9L1554.3 572L1547.7 572ZM1489 572L1495.6 572L1493.7 569.3L1487.2 569.3ZM1502.1 572L1508.6 572L1506.6 569.3L1500.1 569.3ZM1515.1 572L1521.6 572L1519.6 569.3L1513.1 569.3ZM1528.2 572L1534.7 572L1532.5 569.3L1526 569.3ZM1541.2 572L1547.7 572L1545.5 569.3L1539 569.3ZM1493.7 569.3L1500.1 569.3L1498.2 566.5L1491.8 566.5ZM1506.6 569.3L1513.1 569.3L1511.1 566.5L1504.7 566.5ZM1519.6 569.3L1526 569.3L1523.9 566.5L1517.5 566.5ZM1532.5 569.3L1539 569.3L1536.8 566.5L1530.4 566.5ZM1545.5 569.3L1551.9 569.3L1549.7 566.5L1543.2 566.5ZM1485.4 566.5L1491.8 566.5L1490 563.8L1483.6 563.8ZM1498.2 566.5L1504.7 566.5L1502.7 563.8L1496.3 563.8ZM1511.1 566.5L1517.5 566.5L1515.5 563.8L1509.1 563.8ZM1523.9 566.5L1530.4 566.5L1528.3 563.8L1521.9 563.8ZM1536.8 566.5L1543.2 566.5L1541 563.8L1534.6 563.8ZM1490 563.8L1496.3 563.8L1494.5 561.1L1488.1 561.1ZM1502.7 563.8L1509.1 563.8L1507.2 561.1L1500.8 561.1ZM1515.5 563.8L1521.9 563.8L1519.8 561.1L1513.5 561.1ZM1528.3 563.8L1534.6 563.8L1532.5 561.1L1526.2 561.1ZM1541 563.8L1547.4 563.8L1545.2 561.1L1538.9 561.1ZM911.4 561.1L917.8 561.1L920 558.5L913.7 558.5ZM924.1 561.1L930.4 561.1L932.6 558.5L926.3 558.5ZM936.8 561.1L943.1 561.1L945.2 558.5L938.9 558.5ZM949.4 561.1L955.8 561.1L957.7 558.5L951.5 558.5ZM962.1 561.1L968.5 561.1L970.3 558.5L964 558.5ZM920 558.5L926.3 558.5L928.4 555.9L922.2 555.9ZM932.6 558.5L938.9 558.5L940.9 555.9L934.7 555.9ZM945.2 558.5L951.5 558.5L953.4 555.9L947.2 555.9ZM957.7 558.5L964 558.5L965.9 555.9L959.7 555.9ZM970.3 558.5L976.6 558.5L978.4 555.9L972.2 555.9ZM915.9 555.9L922.2 555.9L924.4 553.4L918.1 553.4ZM928.4 555.9L934.7 555.9L936.8 553.4L930.6 553.4ZM940.9 555.9L947.2 555.9L949.2 553.4L943 553.4ZM953.4 555.9L959.7 555.9L961.6 553.4L955.4 553.4ZM965.9 555.9L972.2 555.9L974 553.4L967.8 553.4ZM924.4 553.4L930.6 553.4L932.7 550.9L926.5 550.9ZM936.8 553.4L943 553.4L945 550.9L938.8 550.9ZM949.2 553.4L955.4 553.4L957.3 550.9L951.1 550.9ZM961.6 553.4L967.8 553.4L969.6 550.9L963.5 550.9ZM974 553.4L980.2 553.4L982 550.9L975.8 550.9ZM920.3 550.9L926.5 550.9L928.6 548.4L922.5 548.4ZM932.7 550.9L938.8 550.9L940.8 548.4L934.7 548.4ZM945 550.9L951.1 550.9L953.1 548.4L947 548.4ZM957.3 550.9L963.5 550.9L965.3 548.4L959.2 548.4ZM969.6 550.9L975.8 550.9L977.6 548.4L971.4 548.4ZM928.6 548.4L934.7 548.4L936.8 545.9L930.7 545.9ZM940.8 548.4L947 548.4L948.9 545.9L942.8 545.9ZM953.1 548.4L959.2 548.4L961.1 545.9L955 545.9ZM965.3 548.4L971.4 548.4L973.2 545.9L967.2 545.9ZM977.6 548.4L983.7 548.4L985.4 545.9L979.3 545.9ZM924.6 545.9L930.7 545.9L932.7 543.5L926.7 543.5ZM936.8 545.9L942.8 545.9L944.8 543.5L938.8 543.5ZM948.9 545.9L955 545.9L956.9 543.5L950.8 543.5ZM961.1 545.9L967.2 545.9L969 543.5L962.9 543.5ZM973.2 545.9L979.3 545.9L981 543.5L975 543.5ZM932.7 543.5L938.8 543.5L940.8 541.1L934.8 541.1ZM944.8 543.5L950.8 543.5L952.7 541.1L946.8 541.1ZM956.9 543.5L962.9 543.5L964.7 541.1L958.7 541.1ZM969 543.5L975 543.5L976.7 541.1L970.7 541.1ZM981 543.5L987.1 543.5L988.7 541.1L982.7 541.1ZM928.8 541.1L934.8 541.1L936.8 538.8L930.8 538.8ZM940.8 541.1L946.8 541.1L948.7 538.8L942.7 538.8ZM952.7 541.1L958.7 541.1L960.6 538.8L954.6 538.8ZM964.7 541.1L970.7 541.1L972.5 538.8L966.5 538.8ZM976.7 541.1L982.7 541.1L984.4 538.8L978.5 538.8ZM936.8 538.8L942.7 538.8L944.6 536.4L938.7 536.4ZM948.7 538.8L954.6 538.8L956.5 536.4L950.6 536.4ZM960.6 538.8L966.5 538.8L968.3 536.4L962.4 536.4ZM972.5 538.8L978.5 538.8L980.1 536.4L974.2 536.4ZM984.4 538.8L990.4 538.8L992 536.4L986.1 536.4ZM1038.2 561.1L1044.5 561.1L1045.9 558.5L1039.6 558.5ZM1050.9 561.1L1057.2 561.1L1058.4 558.5L1052.1 558.5ZM1063.5 561.1L1069.9 561.1L1071 558.5L1064.7 558.5ZM1076.2 561.1L1082.5 561.1L1083.6 558.5L1077.3 558.5ZM1088.9 561.1L1095.2 561.1L1096.2 558.5L1089.9 558.5ZM1045.9 558.5L1052.1 558.5L1053.4 555.9L1047.2 555.9ZM1058.4 558.5L1064.7 558.5L1065.9 555.9L1059.7 555.9ZM1071 558.5L1077.3 558.5L1078.4 555.9L1072.2 555.9ZM1083.6 558.5L1089.9 558.5L1090.9 555.9L1084.7 555.9ZM1096.2 558.5L1102.5 558.5L1103.4 555.9L1097.2 555.9ZM1040.9 555.9L1047.2 555.9L1048.5 553.4L1042.3 553.4ZM1053.4 555.9L1059.7 555.9L1060.9 553.4L1054.7 553.4ZM1065.9 555.9L1072.2 555.9L1073.3 553.4L1067.1 553.4ZM1078.4 555.9L1084.7 555.9L1085.7 553.4L1079.5 553.4ZM1090.9 555.9L1097.2 555.9L1098.1 553.4L1091.9 553.4ZM1048.5 553.4L1054.7 553.4L1055.9 550.9L1049.7 550.9ZM1060.9 553.4L1067.1 553.4L1068.2 550.9L1062.1 550.9ZM1073.3 553.4L1079.5 553.4L1080.6 550.9L1074.4 550.9ZM1085.7 553.4L1091.9 553.4L1092.9 550.9L1086.7 550.9ZM1098.1 553.4L1104.3 553.4L1105.2 550.9L1099.1 550.9ZM1043.6 550.9L1049.7 550.9L1051 548.4L1044.9 548.4ZM1055.9 550.9L1062.1 550.9L1063.3 548.4L1057.1 548.4ZM1068.2 550.9L1074.4 550.9L1075.5 548.4L1069.4 548.4ZM1080.6 550.9L1086.7 550.9L1087.7 548.4L1081.6 548.4ZM1092.9 550.9L1099.1 550.9L1100 548.4L1093.9 548.4ZM1051 548.4L1057.1 548.4L1058.3 545.9L1052.3 545.9ZM1063.3 548.4L1069.4 548.4L1070.5 545.9L1064.4 545.9ZM1075.5 548.4L1081.6 548.4L1082.7 545.9L1076.6 545.9ZM1087.7 548.4L1093.9 548.4L1094.8 545.9L1088.7 545.9ZM1100 548.4L1106.1 548.4L1107 545.9L1100.9 545.9ZM1046.2 545.9L1052.3 545.9L1053.5 543.5L1047.5 543.5ZM1058.3 545.9L1064.4 545.9L1065.6 543.5L1059.5 543.5ZM1070.5 545.9L1076.6 545.9L1077.6 543.5L1071.6 543.5ZM1082.7 545.9L1088.7 545.9L1089.7 543.5L1083.7 543.5ZM1094.8 545.9L1100.9 545.9L1101.8 543.5L1095.8 543.5ZM1053.5 543.5L1059.5 543.5L1060.7 541.1L1054.7 541.1ZM1065.6 543.5L1071.6 543.5L1072.7 541.1L1066.7 541.1ZM1077.6 543.5L1083.7 543.5L1084.7 541.1L1078.7 541.1ZM1089.7 543.5L1095.8 543.5L1096.7 541.1L1090.7 541.1ZM1101.8 543.5L1107.8 543.5L1108.7 541.1L1102.7 541.1ZM1048.7 541.1L1054.7 541.1L1055.9 538.8L1049.9 538.8ZM1060.7 541.1L1066.7 541.1L1067.8 538.8L1061.9 538.8ZM1072.7 541.1L1078.7 541.1L1079.7 538.8L1073.8 538.8ZM1084.7 541.1L1090.7 541.1L1091.6 538.8L1085.7 538.8ZM1096.7 541.1L1102.7 541.1L1103.6 538.8L1097.6 538.8ZM1055.9 538.8L1061.9 538.8L1063 536.4L1057.1 536.4ZM1067.8 538.8L1073.8 538.8L1074.8 536.4L1068.9 536.4ZM1079.7 538.8L1085.7 538.8L1086.7 536.4L1080.8 536.4ZM1091.6 538.8L1097.6 538.8L1098.5 536.4L1092.6 536.4ZM1103.6 538.8L1109.5 538.8L1110.3 536.4L1104.4 536.4ZM1164.9 561.1L1171.3 561.1L1171.7 558.5L1165.4 558.5ZM1177.6 561.1L1183.9 561.1L1184.3 558.5L1178 558.5ZM1190.3 561.1L1196.6 561.1L1196.9 558.5L1190.6 558.5ZM1203 561.1L1209.3 561.1L1209.5 558.5L1203.2 558.5ZM1215.6 561.1L1222 561.1L1222.1 558.5L1215.8 558.5ZM1171.7 558.5L1178 558.5L1178.4 555.9L1172.1 555.9ZM1184.3 558.5L1190.6 558.5L1190.9 555.9L1184.6 555.9ZM1196.9 558.5L1203.2 558.5L1203.4 555.9L1197.1 555.9ZM1209.5 558.5L1215.8 558.5L1215.9 555.9L1209.6 555.9ZM1222.1 558.5L1228.3 558.5L1228.4 555.9L1222.1 555.9ZM1165.9 555.9L1172.1 555.9L1172.6 553.4L1166.4 553.4ZM1178.4 555.9L1184.6 555.9L1185 553.4L1178.8 553.4ZM1190.9 555.9L1197.1 555.9L1197.4 553.4L1191.2 553.4ZM1203.4 555.9L1209.6 555.9L1209.8 553.4L1203.6 553.4ZM1215.9 555.9L1222.1 555.9L1222.2 553.4L1216 553.4ZM1172.6 553.4L1178.8 553.4L1179.2 550.9L1173 550.9ZM1185 553.4L1191.2 553.4L1191.5 550.9L1185.3 550.9ZM1197.4 553.4L1203.6 553.4L1203.8 550.9L1197.7 550.9ZM1209.8 553.4L1216 553.4L1216.1 550.9L1210 550.9ZM1222.2 553.4L1228.4 553.4L1228.5 550.9L1222.3 550.9ZM1166.8 550.9L1173 550.9L1173.4 548.4L1167.3 548.4ZM1179.2 550.9L1185.3 550.9L1185.7 548.4L1179.5 548.4ZM1191.5 550.9L1197.7 550.9L1197.9 548.4L1191.8 548.4ZM1203.8 550.9L1210 550.9L1210.2 548.4L1204 548.4ZM1216.1 550.9L1222.3 550.9L1222.4 548.4L1216.3 548.4ZM1173.4 548.4L1179.5 548.4L1179.9 545.9L1173.8 545.9ZM1185.7 548.4L1191.8 548.4L1192.1 545.9L1186 545.9ZM1197.9 548.4L1204 548.4L1204.2 545.9L1198.2 545.9ZM1210.2 548.4L1216.3 548.4L1216.4 545.9L1210.3 545.9ZM1222.4 548.4L1228.5 548.4L1228.6 545.9L1222.5 545.9ZM1167.8 545.9L1173.8 545.9L1174.3 543.5L1168.2 543.5ZM1179.9 545.9L1186 545.9L1186.3 543.5L1180.3 543.5ZM1192.1 545.9L1198.2 545.9L1198.4 543.5L1192.4 543.5ZM1204.2 545.9L1210.3 545.9L1210.5 543.5L1204.4 543.5ZM1216.4 545.9L1222.5 545.9L1222.6 543.5L1216.5 543.5ZM1174.3 543.5L1180.3 543.5L1180.7 541.1L1174.7 541.1ZM1186.3 543.5L1192.4 543.5L1192.6 541.1L1186.6 541.1ZM1198.4 543.5L1204.4 543.5L1204.6 541.1L1198.6 541.1ZM1210.5 543.5L1216.5 543.5L1216.6 541.1L1210.6 541.1ZM1222.6 543.5L1228.6 543.5L1228.6 541.1L1222.6 541.1ZM1168.7 541.1L1174.7 541.1L1175.1 538.8L1169.1 538.8ZM1180.7 541.1L1186.6 541.1L1187 538.8L1181 538.8ZM1192.6 541.1L1198.6 541.1L1198.9 538.8L1192.9 538.8ZM1204.6 541.1L1210.6 541.1L1210.8 538.8L1204.8 538.8ZM1216.6 541.1L1222.6 541.1L1222.7 538.8L1216.8 538.8ZM1175.1 538.8L1181 538.8L1181.4 536.4L1175.4 536.4ZM1187 538.8L1192.9 538.8L1193.2 536.4L1187.3 536.4ZM1198.9 538.8L1204.8 538.8L1205 536.4L1199.1 536.4ZM1210.8 538.8L1216.8 538.8L1216.9 536.4L1211 536.4ZM1222.7 538.8L1228.7 538.8L1228.7 536.4L1222.8 536.4ZM1291.7 561.1L1298 561.1L1297.6 558.5L1291.3 558.5ZM1304.4 561.1L1310.7 561.1L1310.2 558.5L1303.9 558.5ZM1317 561.1L1323.4 561.1L1322.7 558.5L1316.5 558.5ZM1329.7 561.1L1336 561.1L1335.3 558.5L1329 558.5ZM1342.4 561.1L1348.7 561.1L1347.9 558.5L1341.6 558.5ZM1297.6 558.5L1303.9 558.5L1303.4 555.9L1297.1 555.9ZM1310.2 558.5L1316.5 558.5L1315.9 555.9L1309.6 555.9ZM1322.7 558.5L1329 558.5L1328.4 555.9L1322.1 555.9ZM1335.3 558.5L1341.6 558.5L1340.9 555.9L1334.6 555.9ZM1347.9 558.5L1354.2 558.5L1353.4 555.9L1347.1 555.9ZM1290.9 555.9L1297.1 555.9L1296.7 553.4L1290.5 553.4ZM1303.4 555.9L1309.6 555.9L1309.1 553.4L1302.9 553.4ZM1315.9 555.9L1322.1 555.9L1321.5 553.4L1315.3 553.4ZM1328.4 555.9L1334.6 555.9L1333.9 553.4L1327.7 553.4ZM1340.9 555.9L1347.1 555.9L1346.3 553.4L1340.1 553.4ZM1296.7 553.4L1302.9 553.4L1302.4 550.9L1296.3 550.9ZM1309.1 553.4L1315.3 553.4L1314.8 550.9L1308.6 550.9ZM1321.5 553.4L1327.7 553.4L1327.1 550.9L1320.9 550.9ZM1333.9 553.4L1340.1 553.4L1339.4 550.9L1333.2 550.9ZM1346.3 553.4L1352.5 553.4L1351.7 550.9L1345.6 550.9ZM1290.1 550.9L1296.3 550.9L1295.8 548.4L1289.7 548.4ZM1302.4 550.9L1308.6 550.9L1308.1 548.4L1302 548.4ZM1314.8 550.9L1320.9 550.9L1320.3 548.4L1314.2 548.4ZM1327.1 550.9L1333.2 550.9L1332.6 548.4L1326.4 548.4ZM1339.4 550.9L1345.6 550.9L1344.8 548.4L1338.7 548.4ZM1295.8 548.4L1302 548.4L1301.5 545.9L1295.4 545.9ZM1308.1 548.4L1314.2 548.4L1313.7 545.9L1307.6 545.9ZM1320.3 548.4L1326.4 548.4L1325.8 545.9L1319.7 545.9ZM1332.6 548.4L1338.7 548.4L1338 545.9L1331.9 545.9ZM1344.8 548.4L1350.9 548.4L1350.1 545.9L1344.1 545.9ZM1289.3 545.9L1295.4 545.9L1295 543.5L1289 543.5ZM1301.5 545.9L1307.6 545.9L1307.1 543.5L1301 543.5ZM1313.7 545.9L1319.7 545.9L1319.2 543.5L1313.1 543.5ZM1325.8 545.9L1331.9 545.9L1331.2 543.5L1325.2 543.5ZM1338 545.9L1344.1 545.9L1343.3 543.5L1337.3 543.5ZM1295 543.5L1301 543.5L1300.6 541.1L1294.6 541.1ZM1307.1 543.5L1313.1 543.5L1312.6 541.1L1306.6 541.1ZM1319.2 543.5L1325.2 543.5L1324.6 541.1L1318.6 541.1ZM1331.2 543.5L1337.3 543.5L1336.6 541.1L1330.6 541.1ZM1343.3 543.5L1349.4 543.5L1348.6 541.1L1342.6 541.1ZM1288.6 541.1L1294.6 541.1L1294.2 538.8L1288.2 538.8ZM1300.6 541.1L1306.6 541.1L1306.1 538.8L1300.2 538.8ZM1312.6 541.1L1318.6 541.1L1318 538.8L1312.1 538.8ZM1324.6 541.1L1330.6 541.1L1329.9 538.8L1324 538.8ZM1336.6 541.1L1342.6 541.1L1341.9 538.8L1335.9 538.8ZM1294.2 538.8L1300.2 538.8L1299.7 536.4L1293.8 536.4ZM1306.1 538.8L1312.1 538.8L1311.6 536.4L1305.6 536.4ZM1318 538.8L1324 538.8L1323.4 536.4L1317.5 536.4ZM1329.9 538.8L1335.9 538.8L1335.2 536.4L1329.3 536.4ZM1341.9 538.8L1347.8 538.8L1347.1 536.4L1341.2 536.4ZM1418.4 561.1L1424.8 561.1L1423.4 558.5L1417.1 558.5ZM1431.1 561.1L1437.4 561.1L1436 558.5L1429.7 558.5ZM1443.8 561.1L1450.1 561.1L1448.6 558.5L1442.3 558.5ZM1456.5 561.1L1462.8 561.1L1461.2 558.5L1454.9 558.5ZM1469.1 561.1L1475.5 561.1L1473.8 558.5L1467.5 558.5ZM1423.4 558.5L1429.7 558.5L1428.4 555.9L1422.1 555.9ZM1436 558.5L1442.3 558.5L1440.9 555.9L1434.6 555.9ZM1448.6 558.5L1454.9 558.5L1453.4 555.9L1447.1 555.9ZM1461.2 558.5L1467.5 558.5L1465.9 555.9L1459.6 555.9ZM1473.8 558.5L1480.1 558.5L1478.4 555.9L1472.1 555.9ZM1415.9 555.9L1422.1 555.9L1420.8 553.4L1414.6 553.4ZM1428.4 555.9L1434.6 555.9L1433.2 553.4L1427 553.4ZM1440.9 555.9L1447.1 555.9L1445.6 553.4L1439.4 553.4ZM1453.4 555.9L1459.6 555.9L1458 553.4L1451.8 553.4ZM1465.9 555.9L1472.1 555.9L1470.5 553.4L1464.2 553.4ZM1420.8 553.4L1427 553.4L1425.7 550.9L1419.5 550.9ZM1433.2 553.4L1439.4 553.4L1438 550.9L1431.8 550.9ZM1445.6 553.4L1451.8 553.4L1450.3 550.9L1444.2 550.9ZM1458 553.4L1464.2 553.4L1462.7 550.9L1456.5 550.9ZM1470.5 553.4L1476.7 553.4L1475 550.9L1468.8 550.9ZM1413.4 550.9L1419.5 550.9L1418.3 548.4L1412.1 548.4ZM1425.7 550.9L1431.8 550.9L1430.5 548.4L1424.4 548.4ZM1438 550.9L1444.2 550.9L1442.7 548.4L1436.6 548.4ZM1450.3 550.9L1456.5 550.9L1455 548.4L1448.9 548.4ZM1462.7 550.9L1468.8 550.9L1467.2 548.4L1461.1 548.4ZM1418.3 548.4L1424.4 548.4L1423.1 545.9L1417 545.9ZM1430.5 548.4L1436.6 548.4L1435.2 545.9L1429.2 545.9ZM1442.7 548.4L1448.9 548.4L1447.4 545.9L1441.3 545.9ZM1455 548.4L1461.1 548.4L1459.6 545.9L1453.5 545.9ZM1467.2 548.4L1473.3 548.4L1471.7 545.9L1465.6 545.9ZM1410.9 545.9L1417 545.9L1415.8 543.5L1409.7 543.5ZM1423.1 545.9L1429.2 545.9L1427.8 543.5L1421.8 543.5ZM1435.2 545.9L1441.3 545.9L1439.9 543.5L1433.9 543.5ZM1447.4 545.9L1453.5 545.9L1452 543.5L1446 543.5ZM1459.6 545.9L1465.6 545.9L1464.1 543.5L1458 543.5ZM1415.8 543.5L1421.8 543.5L1420.6 541.1L1414.6 541.1ZM1427.8 543.5L1433.9 543.5L1432.5 541.1L1426.5 541.1ZM1439.9 543.5L1446 543.5L1444.5 541.1L1438.5 541.1ZM1452 543.5L1458 543.5L1456.5 541.1L1450.5 541.1ZM1464.1 543.5L1470.1 543.5L1468.5 541.1L1462.5 541.1ZM1408.6 541.1L1414.6 541.1L1413.4 538.8L1407.4 538.8ZM1420.6 541.1L1426.5 541.1L1425.3 538.8L1419.3 538.8ZM1432.5 541.1L1438.5 541.1L1437.2 538.8L1431.2 538.8ZM1444.5 541.1L1450.5 541.1L1449.1 538.8L1443.1 538.8ZM1456.5 541.1L1462.5 541.1L1461 538.8L1455.1 538.8ZM1413.4 538.8L1419.3 538.8L1418.1 536.4L1412.2 536.4ZM1425.3 538.8L1431.2 538.8L1429.9 536.4L1424 536.4ZM1437.2 538.8L1443.1 538.8L1441.8 536.4L1435.8 536.4ZM1449.1 538.8L1455.1 538.8L1453.6 536.4L1447.7 536.4ZM1461 538.8L1467 538.8L1465.4 536.4L1459.5 536.4Z" fill="#303341"/><path d="M593.2 928.8 L1851.4 928.8 L1490.7 495.7 L968.1 495.7Z" fill="url(#ffog)"/><path d="M593.2 928.8 L1851.4 928.8 L1833.7 971.6 L613.2 971.6Z" fill="#303138" stroke="#303138" stroke-width=".6"/><path d="M593.2 928.8 L719.0 928.8 L722.8 938.8 L597.9 938.8Z" fill="#2f3037"/><path d="M597.9 938.8 L722.8 938.8 L735.2 971.6 L613.2 971.6Z" fill="#383940"/><path d="M719.0 928.8 L844.8 928.8 L847.8 938.8 L722.8 938.8Z" fill="#3c3d46"/><path d="M722.8 938.8 L847.8 938.8 L857.3 971.6 L735.2 971.6Z" fill="#2b2c32"/><path d="M844.8 928.8 L970.7 928.8 L972.7 938.8 L847.8 938.8Z" fill="#2f3037"/><path d="M847.8 938.8 L972.7 938.8 L979.4 971.6 L857.3 971.6Z" fill="#383940"/><path d="M970.7 928.8 L1096.5 928.8 L1097.6 938.8 L972.7 938.8Z" fill="#3c3d46"/><path d="M972.7 938.8 L1097.6 938.8 L1101.4 971.6 L979.4 971.6Z" fill="#2b2c32"/><path d="M1096.5 928.8 L1222.3 928.8 L1222.6 938.8 L1097.6 938.8Z" fill="#2f3037"/><path d="M1097.6 938.8 L1222.6 938.8 L1223.5 971.6 L1101.4 971.6Z" fill="#383940"/><path d="M1222.3 928.8 L1348.1 928.8 L1347.5 938.8 L1222.6 938.8Z" fill="#3c3d46"/><path d="M1222.6 938.8 L1347.5 938.8 L1345.5 971.6 L1223.5 971.6Z" fill="#2b2c32"/><path d="M1348.1 928.8 L1473.9 928.8 L1472.4 938.8 L1347.5 938.8Z" fill="#2f3037"/><path d="M1347.5 938.8 L1472.4 938.8 L1467.6 971.6 L1345.5 971.6Z" fill="#383940"/><path d="M1473.9 928.8 L1599.8 928.8 L1597.4 938.8 L1472.4 938.8Z" fill="#3c3d46"/><path d="M1472.4 938.8 L1597.4 938.8 L1589.6 971.6 L1467.6 971.6Z" fill="#2b2c32"/><path d="M1599.8 928.8 L1725.6 928.8 L1722.3 938.8 L1597.4 938.8Z" fill="#2f3037"/><path d="M1597.4 938.8 L1722.3 938.8 L1711.7 971.6 L1589.6 971.6Z" fill="#383940"/><path d="M1725.6 928.8 L1851.4 928.8 L1847.3 938.8 L1722.3 938.8Z" fill="#3c3d46"/><path d="M1722.3 938.8 L1847.3 938.8 L1833.7 971.6 L1711.7 971.6Z" fill="#2b2c32"/><path d="M593.2 928.8 L1851.4 928.8 L1833.7 971.6 L613.2 971.6Z" fill="url(#ffx)"/><path d="M1074 186 L1097 205" stroke="#ececec" stroke-width="2.4"/><path d="M1100 208 L1090 205 L1096 198Z" fill="#e8e8e8"/><g transform="translate(1056 169.7)"><rect x="-4" y="-27" width="8" height="11.5" rx="1" fill="#e2e2e2" stroke="#000" stroke-width="1.7" transform="rotate(-10)"/><rect x="-4" y="-27" width="8" height="11.5" rx="1" fill="#e2e2e2" stroke="#000" stroke-width="1.7" transform="rotate(27)"/><rect x="-4" y="-27" width="8" height="11.5" rx="1" fill="#e2e2e2" stroke="#000" stroke-width="1.7" transform="rotate(70)"/><rect x="-4" y="-27" width="8" height="11.5" rx="1" fill="#e2e2e2" stroke="#000" stroke-width="1.7" transform="rotate(118)"/><rect x="-4" y="-27" width="8" height="11.5" rx="1" fill="#e2e2e2" stroke="#000" stroke-width="1.7" transform="rotate(160)"/><rect x="-4" y="-27" width="8" height="11.5" rx="1" fill="#e2e2e2" stroke="#000" stroke-width="1.7" transform="rotate(200)"/><rect x="-4" y="-27" width="8" height="11.5" rx="1" fill="#e2e2e2" stroke="#000" stroke-width="1.7" transform="rotate(250)"/><rect x="-4" y="-27" width="8" height="11.5" rx="1" fill="#e2e2e2" stroke="#000" stroke-width="1.7" transform="rotate(297)"/><circle r="13.5" fill="url(#sunb)" stroke="#000" stroke-width="2"/></g><g stroke="#4a4a4a" stroke-width="1" fill="#dadada"><path d="M1200 126 C1197 121 1202 118 1206 119.500 C1208 116 1216 116.500 1218 118 C1222 115 1231 116 1233 118.500 C1238 117 1243 121 1241.500 125 C1246 126 1247 132 1243 134 C1244 137 1239 139 1236 137 C1233 139 1228 138 1227 136 C1222 137 1217 135 1215 133 C1210 134 1205 132 1204 129.500 C1201 129.500 1199.500 128 1200 126Z"/>
<path d="M1199 141 C1196 137 1200 133 1204 134 C1206 131 1212 131 1214 133.500 C1219 133 1222 137 1220 140 C1224 142 1222 147 1218 147 C1215 149.500 1209 149 1208 147 C1203 147.500 1199 145 1199 141Z"/><path d="M1232 145 C1230 141 1234 138 1238 139.500 C1241 137 1247 138.500 1247.500 141.500 C1252 142 1254 146 1251 148.500 C1251 151.500 1246 152.500 1243 150.500 C1239 152 1234 150 1232 145Z"/></g>
<path d="M1214.500 160.500 C1224 158 1230.500 150 1229 139 L1222 139 C1225.500 148 1222 156 1214.500 160.500Z" fill="#9c9c9c" stroke="#3a3a3a" stroke-width=".9"/><path d="M1221.500 133 h6.500 v9 h-6.500z" fill="#6f9ae8"/><path d="M1221 134 L1225 129.500 L1229.500 134.500Z" fill="#555"/><path d="M1142 256 C1140 224 1166 198 1198 198 C1232 198 1257 224 1255 255 L1251 256 C1236 240 1218 238 1198 238 C1176 238 1158 244 1146 257 Z" fill="url(#dome)" stroke="#2a2a2a" stroke-width="1"/>
<path d="M1144 256 C1142 226 1166 200.500 1198 200.500 C1230 200.500 1255 226 1253 255" fill="none" stroke="#f4f4f4" stroke-width="3"/>
<g stroke="#9a9a9a" stroke-width="3" fill="#9a9a9a"><path d="M1181 209 L1186 222"/><path d="M1217 209 L1212 222"/><path d="M1156 232 L1168 238"/><path d="M1242 230 L1230 238"/></g>
<g fill="#9a9a9a"><path d="M1181 222 L1191 219 L1188 228Z"/><path d="M1217 222 L1207 219 L1210 228Z"/><path d="M1163 241 L1171 232 L1172 242Z"/><path d="M1235 241 L1227 232 L1226 242Z"/></g><g transform="translate(1219.3 447.8)"><circle r="19" fill="url(#rsph)"/><path d="M-17 2 C-16 12 -8 18 2 18 C-4 14 -9 8 -10 -2 C-12 -8 -8 -14 -2 -17 C-10 -16 -17 -8 -17 2Z" fill="#0a0a0a" opacity=".85"/><path d="M4 -17 C12 -15 17 -9 18 -1 C14 -7 10 -11 4 -12Z" fill="#fafafa" opacity=".9"/><ellipse cx="1" cy="1" rx="8.500" ry="7.500" fill="none" stroke="#1a1a1a" stroke-width="2.400" transform="rotate(-30)"/><ellipse cx="1.500" cy="1.500" rx="5" ry="4.300" fill="#bbb" stroke="#f4f4f4" stroke-width="1.600" transform="rotate(-30)"/><ellipse cx="1" cy=".5" rx="2.600" ry="2" fill="#333" transform="rotate(-30)"/><path d="M6 12 C10 10 14 6 15 2 C16 8 12 14 6 16Z" fill="#f0f0f0" opacity=".8"/><circle r="19" fill="none" stroke="#151515" stroke-width="1.200"/></g><ellipse cx="1218.500" cy="578" rx="8.500" ry="4.200" fill="#d8d8d8"/><ellipse cx="1218.500" cy="577" rx="7" ry="3" fill="#e8e8e8"/><path d="M1209.500 537.500 L1227 541.500 L1213 552Z" fill="#b0b0b0"/><path d="M1209.500 537.500 L1218.500 577" stroke="#d4d4d4" stroke-width="2.200"/>
<path d="M1228.300 541 V556" stroke="#7098e4" stroke-width="3"/><circle cx="1228.300" cy="540" r="3.300" fill="#7098e4"/><circle cx="1228.300" cy="541.500" r="1.200" fill="#363949"/>
<g transform="rotate(9 1230 565)"><path d="M1216 558 C1221 553 1240 552 1245 556 C1248 562 1249 570 1247 575 C1243 579 1238 576 1236 570 L1227 571 C1225 577 1219 580 1216 575 C1214 570 1214 563 1216 558Z" fill="#d2d2d2"/><path d="M1216 558 C1221 553 1240 552 1245 556 C1240 556 1222 557 1217 561Z" fill="#2a2a2a"/><path d="M1236 570 C1238 576 1243 579 1247 575 C1248 571 1248 566 1247 562 C1246 568 1242 572 1236 570Z" fill="#9a9a9a"/>
<path d="M1220 562.500 h4 M1222 560.500 v4" stroke="#333" stroke-width="1.200"/><circle cx="1237" cy="561" r=".9" fill="#333"/><circle cx="1240" cy="563" r=".9" fill="#333"/><circle cx="1237" cy="565" r=".9" fill="#333"/><circle cx="1234.500" cy="563" r=".9" fill="#333"/><rect x="1227" y="561.500" width="5" height="2" rx="1" fill="#6f9ae8"/></g><path d="M458.300 976 V997.400" stroke="#1c2cff" stroke-width="1.1"/><path d="M458 997.400 H483" stroke="#17e817" stroke-width="1.1"/>
<text x="461" y="980" font-size="11.500" fill="#2a3cff" font-family="Liberation Sans, sans-serif">Z</text><text x="461" y="992.500" font-size="11.500" fill="#ff2020" font-family="Liberation Sans, sans-serif">X</text><text x="485" y="1002.500" font-size="11.500" fill="#22e022" font-family="Liberation Sans, sans-serif">Y</text>
<circle cx="449.200" cy="1007.500" r="5" fill="#8a8ea8" opacity=".8"/><text x="446.700" y="1010.800" font-size="8.500" font-weight="bold" fill="#c4c6da" font-family="Liberation Sans, sans-serif">?</text></g><path d="M427 1029.500 V115 H2044 V116.700 H428.700 V1029.500Z" fill="#2c2f38"/><path d="M2042.300 116.700 H2044 V1029.500 H428.700 V1027.700 H2042.300Z" fill="#4a4a4a"/><rect x="429.35" y="117.35" width="1612.3" height="909.7" fill="none" stroke="#e9a80c" stroke-width="1.25"/><path d="M427 115 H438 L427 126Z" fill="#d9a51a"/><path d="M430 118 H436 L430 124Z" fill="#e0a878"/></svg><div class="a" style="left:433px;top:121px;width:22px;height:25.6px;box-sizing:border-box;border:1.3px solid #3a3a3a;border-radius:6px;background:#c9c8cc;"><svg style="left:5.5px;top:9px" width="9" height="6"><path d="M0 0 H9 L4.5 5Z" fill="#222"/></svg></div><div class="a" style="left:459px;top:121px;width:95px;height:25.6px;box-sizing:border-box;border:1.3px solid #3a3a3a;border-radius:6px;background:#c9c8cc;"><svg style="left:6px;top:5px" width="17" height="13" viewBox="0 0 17 13"><path d="M1 8 L5 3 L12 1 L16 3 L15 7 L6 12 L2 11Z" fill="#4f86f0"/><path d="M6 3.5 L11 2 L13 3.500 L8 5.500Z" fill="#a8c6fa"/></svg><div class="a b" style="left:25px;top:6.4px;font-size:11.8px;letter-spacing:-.4px;color:#303030">Perspective</div></div><div class="a" style="left:558px;top:121px;width:47px;height:25.6px;box-sizing:border-box;border:1.3px solid #3a3a3a;border-radius:6px;background:#c9c8cc;"><svg style="left:5.5px;top:4px" width="17" height="17" viewBox="0 0 17 17"><path d="M1 4 L8.500 1 L16 4 L16 12 L8.500 16 L1 12Z" fill="#3f72e0"/><path d="M1 4 L8.500 1 L16 4 L8.500 7Z" fill="#8fb4f6"/><path d="M8.500 7 L16 4 V12 L8.500 16Z" fill="#2f5cc4"/></svg><div class="a b" style="left:26px;top:6.4px;font-size:11.8px;letter-spacing:-.3px;color:#303030">Lit</div></div><div class="a" style="left:609px;top:121px;width:44px;height:25.6px;box-sizing:border-box;border:1.3px solid #3a3a3a;border-radius:6px;background:#c9c8cc;"><div class="a b" style="left:6.5px;top:6.4px;font-size:11.8px;letter-spacing:-.4px;color:#303030">Show</div></div><div class="a" style="left:1646px;top:121px;width:71.5px;height:25.6px;box-sizing:border-box;border:1.3px solid #3a3a3a;border-radius:6px;background:#c9c8cc;"><div class="a" style="left:0;top:0;width:23px;height:23px;background:#c4872f;border-radius:4.700px 0 0 4.700px;border-right:1px solid #3a3a3a"></div><svg style="left:4px;top:3.5px" width="17" height="17" viewBox="0 0 17 17"><path d="M8.500 0 L11.500 4 H9.700 V7.300 H13 V5.500 L17 8.500 L13 11.500 V9.700 H9.700 V13 H11.500 L8.500 17 L5.500 13 H7.300 V9.700 H4 V11.500 L0 8.500 L4 5.500 V7.300 H7.300 V4 H5.500Z" fill="#1c1c1c"/><rect x="6" y="6" width="5" height="5" fill="#6f9ae8" stroke="#1c1c1c" stroke-width=".8"/></svg><svg style="left:28px;top:4px" width="17" height="17" viewBox="0 0 17 17"><path d="M13.500 5 A6 6 0 1 1 6 3.200" fill="none" stroke="#333" stroke-width="2"/><path d="M12 1 L15.500 6 L10 6.500Z" fill="#333"/><circle cx="8.500" cy="9" r="3.600" fill="#5f8ae0"/></svg><svg style="left:51px;top:4px" width="17" height="17" viewBox="0 0 17 17"><path d="M3 14 L14 3" stroke="#222" stroke-width="2"/><path d="M9 1.500 H15.500 V8Z" fill="#222"/><path d="M1.500 9 V15.500 H8Z" fill="#222"/><rect x="5.500" y="6.500" width="5" height="5" fill="#6f9ae8" transform="rotate(0)"/></svg></div><div class="a" style="left:1721.2px;top:121px;width:24px;height:25.6px;box-sizing:border-box;border:1.3px solid #3a3a3a;border-radius:6px;background:#c9c8cc;"><svg style="left:3px;top:3px" width="17" height="17" viewBox="0 0 17 17"><circle cx="8.500" cy="8.500" r="7" fill="#d8d8dc" stroke="#333" stroke-width="1.300"/><path d="M4 4 C6 3 8 4 7 6 C6 8 4 7 3.500 9 C5 10 6 12 5 14 M10 2.500 C9 5 12 5 12 7 C11 9 9.500 9 10 11.500 C11 13 12.500 12 14 11" fill="none" stroke="#333" stroke-width="1.300"/></svg></div><div class="a" style="left:1748.4px;top:121px;width:81.5px;height:25.6px;box-sizing:border-box;border:1.3px solid #3a3a3a;border-radius:6px;background:#c9c8cc;"><div class="a" style="left:23.500px;top:0;width:25px;height:23px;background:#c4872f;border-left:1px solid #3a3a3a;border-right:1px solid #3a3a3a"></div><svg style="left:4px;top:3px" width="17" height="17" viewBox="0 0 17 17"><path d="M2 11 L6 5 L11 9 L15 3" fill="none" stroke="#444" stroke-width="1.300"/><path d="M8.500 1 V8" stroke="#7a7a7a" stroke-width="1.200"/><path d="M6.500 12.500 H10.500 L8.500 15Z" fill="#222"/></svg><svg style="left:29px;top:4.500px" width="15" height="15" viewBox="0 0 15 15"><path d="M1 1 H14 V14 H1Z M1 4.200 H14 M1 7.500 H14 M1 10.800 H14 M4.200 1 V14 M7.500 1 V14 M10.800 1 V14" fill="none" stroke="#1c1c1c" stroke-width="1.100"/></svg><div class="a" style="left:50px;top:3px;width:29px;text-align:center;font-size:12.200px;color:#2a2a2a;text-shadow:0 0 .4px #2a2a2a">10</div><svg style="left:62.0px;top:17.500px" width="5" height="3"><path d="M0 0 H5 L2.500 3Z" fill="#222"/></svg></div><div class="a" style="left:1834px;top:121px;width:53.5px;height:25.6px;box-sizing:border-box;border:1.3px solid #3a3a3a;border-radius:6px;background:#c9c8cc;"><div class="a" style="left:0;top:0;width:23.500px;height:23px;background:#c4872f;border-radius:4.700px 0 0 4.700px;border-right:1px solid #3a3a3a"></div><svg style="left:3.500px;top:3.500px" width="17" height="17" viewBox="0 0 17 17"><path d="M2 14.500 L9 2 L15.500 14.500Z" fill="none" stroke="#1c1c1c" stroke-width="1.500"/><path d="M6.500 14 A5 5 0 0 0 10.500 8" fill="none" stroke="#1c1c1c" stroke-width="1.200"/></svg><div class="a" style="left:25px;top:3px;width:27px;text-align:center;font-size:12.200px;color:#2a2a2a;text-shadow:0 0 .4px #2a2a2a">5°</div><svg style="left:36.0px;top:17.500px" width="5" height="3"><path d="M0 0 H5 L2.500 3Z" fill="#222"/></svg></div><div class="a" style="left:1894.3px;top:121px;width:67px;height:25.6px;box-sizing:border-box;border:1.3px solid #3a3a3a;border-radius:6px;background:#c9c8cc;"><div class="a" style="left:0;top:0;width:23.500px;height:23px;background:#c4872f;border-radius:4.700px 0 0 4.700px;border-right:1px solid #3a3a3a"></div><svg style="left:4px;top:4px" width="16" height="16" viewBox="0 0 16 16"><path d="M3 13 L11 5" stroke="#1c1c1c" stroke-width="2.200"/><path d="M7 3 H13 V9Z" fill="#1c1c1c"/><rect x="2" y="11" width="3.500" height="3.500" fill="#1c1c1c"/></svg><div class="a" style="left:25px;top:3px;width:40px;text-align:center;font-size:12.200px;color:#2a2a2a;text-shadow:0 0 .4px #2a2a2a">0.25</div><svg style="left:42.5px;top:17.500px" width="5" height="3"><path d="M0 0 H5 L2.500 3Z" fill="#222"/></svg></div><div class="a" style="left:1966px;top:121px;width:48px;height:25.6px;box-sizing:border-box;border:1.3px solid #3a3a3a;border-radius:6px;background:#c9c8cc;"><svg style="left:6px;top:5px" width="20" height="14" viewBox="0 0 20 14"><path d="M7 5 H16 V12 H7Z M16 7 L19.500 5 V12 L16 10Z" fill="#333"/><circle cx="9.500" cy="3.500" r="2.600" fill="#333"/><circle cx="14" cy="3.500" r="2.600" fill="#333"/><path d="M0 6 H6 M1.500 8.500 H6 M3 11 H6" stroke="#333" stroke-width="1.200"/></svg><div class="a" style="left:27px;top:3px;width:16px;text-align:center;font-size:12.200px;color:#2a2a2a;text-shadow:0 0 .4px #2a2a2a">4</div><svg style="left:32.5px;top:17.500px" width="5" height="3"><path d="M0 0 H5 L2.500 3Z" fill="#222"/></svg></div><svg style="left:2023.500px;top:128.500px" width="13" height="12" viewBox="0 0 13 12"><rect x="3.800" y=".8" width="8.200" height="7" fill="none" stroke="#f2f2f4" stroke-width="1.500"/><rect x=".8" y="3.800" width="8.200" height="7" fill="#b4b2bf" stroke="#f2f2f4" stroke-width="1.500"/><rect x="3.300" y="6" width="3.200" height="2.800" fill="none" stroke="#f2f2f4" stroke-width="1.100"/></svg>
<div class="tab" style="left:2053px;top:47px;width:150px"><div class="t">World Outliner</div><div class="x">✕</div>
<svg style="left:6px;top:3px" width="16" height="16" viewBox="0 0 16 16"><g stroke="#e8ecf8" stroke-width="1.800"><path d="M4 2 H15 M4 6 H15 M4 10 H15 M4 14 H15"/></g><g fill="#6f8fe0"><rect x="0" y="1" width="3" height="2.500"/><rect x="0" y="5" width="3" height="2.500"/><rect x="0" y="9" width="3" height="2.500"/><rect x="0" y="13" width="3" height="2.500"/></g></svg></div>
<div class="panel" style="left:2049px;top:69px;width:511px;height:409px"></div>
<div class="search" style="left:2057px;top:79px;width:467px;height:18px"><span>Search...</span>
<svg style="right:1px;top:0.5px" width="18" height="18" viewBox="0 0 18 18"><circle cx="11" cy="7.3" r="5" fill="none" stroke="#111" stroke-width="2.2"/><path d="M7.2 11.2 L3 15.4" stroke="#111" stroke-width="3" stroke-linecap="round"/></svg></div>
<svg style="left:2531px;top:79px" width="18" height="16" viewBox="0 0 18 16"><path d="M8 3 L15 0 L17 2 V10 L10 13 L8 11Z" fill="#7f98dc"/><path d="M8 3 L10 5 V13 L8 11Z" fill="#a8baf0"/><path d="M5 7 V15 M1 11 H9" stroke="#f4f4f4" stroke-width="2"/></svg>
<div class="a" style="left:2057px;top:102px;width:495px;height:22.500px;background:linear-gradient(#242424,#161616);border-top:1px solid #2e2e2e;box-sizing:border-box"></div>
<div class="a" style="left:2072px;top:102px;width:1px;height:22px;background:#0e0e0e"></div>
<div class="a" style="left:2414px;top:102px;width:1px;height:22px;background:#0e0e0e"></div>
<div class="a sh" style="left:2077px;top:107px;font-size:12.1px;color:#e8e8e8">Label</div>
<div class="a sh" style="left:2419.500px;top:107px;font-size:12.1px;color:#e8e8e8">Type</div>
<svg style="left:2239.500px;top:104px" width="9" height="5"><path d="M0 5 H9 L4.500 0Z" fill="#e4e4e4"/></svg>
<svg style="left:2538.500px;top:117px" width="9" height="6"><path d="M0 0 H9 V1 H0Z M0 2 H9 L4.500 6Z" fill="#8a8a8a"/></svg>
<svg style="left:2057.5px;top:128.0px" width="15.5" height="11" viewBox="0 0 17 11" preserveAspectRatio="none"><path d="M.5 5.500 C4 .5 13 .5 16.500 5.500 C13 10.500 4 10.500 .5 5.500Z" fill="#eef0f8" stroke="#4f63a8" stroke-width="1.300"/><circle cx="8.500" cy="5.500" r="3.300" fill="#5a70b8"/><circle cx="8.500" cy="5.500" r="1.600" fill="#101020"/><circle cx="7.600" cy="4.300" r=".8" fill="#fff"/></svg><svg style="left:2080px;top:128.5px" width="8" height="8"><path d="M7 0 V7 H0Z" fill="#9a9a9a"/></svg><svg style="left:2088px;top:124.5px" width="18" height="17" viewBox="0 0 18 17"><path d="M1 9 L6 2 L9 8 L12 1 L17 9 L8 16Z" fill="#d8d8d8"/><path d="M1 9 L8 16 L8 11Z M17 9 L8 16 L9 8Z" fill="#a0a0a0"/></svg><div class="a sh" style="left:2113px;top:127.5px;font-size:12.1px;color:#dcdcdc">Untitled (Editor)</div><div class="a" style="left:2415px;top:127.5px;font-size:12.1px;color:#9a9a9a">World</div><svg style="left:2057.5px;top:146.0px" width="15.5" height="11" viewBox="0 0 17 11" preserveAspectRatio="none"><path d="M.5 5.500 C4 .5 13 .5 16.500 5.500 C13 10.500 4 10.500 .5 5.500Z" fill="#eef0f8" stroke="#4f63a8" stroke-width="1.300"/><circle cx="8.500" cy="5.500" r="3.300" fill="#5a70b8"/><circle cx="8.500" cy="5.500" r="1.600" fill="#101020"/><circle cx="7.600" cy="4.300" r=".8" fill="#fff"/></svg><svg style="left:2102.500px;top:143.0px" width="17" height="17" viewBox="0 0 17 17"><circle cx="3" cy="3" r="2.600" fill="#e89a30"/><path d="M3 12 C3 9 7 8 8 10 C9 6 14 7 14 10 C17 10 17 13 15 13 H4Z" fill="#f0f0f0"/><path d="M9 6 C10 3 14 3 15 6Z" fill="#e8e8e8"/><path d="M2 14.500 H16 V16 H2Z" fill="#111"/></svg><div class="a sh" style="left:2125px;top:145.5px;font-size:12.1px;color:#dcdcdc">Atmospheric Fog</div><div class="a" style="left:2415px;top:145.5px;font-size:12.1px;color:#9a9a9a">AtmosphericFog</div><svg style="left:2057.5px;top:164.0px" width="15.5" height="11" viewBox="0 0 17 11" preserveAspectRatio="none"><path d="M.5 5.500 C4 .5 13 .5 16.500 5.500 C13 10.500 4 10.500 .5 5.500Z" fill="#eef0f8" stroke="#4f63a8" stroke-width="1.300"/><circle cx="8.500" cy="5.500" r="3.300" fill="#5a70b8"/><circle cx="8.500" cy="5.500" r="1.600" fill="#101020"/><circle cx="7.600" cy="4.300" r=".8" fill="#fff"/></svg><svg style="left:2102.500px;top:161.0px" width="17" height="17" viewBox="0 0 17 17"><path d="M1 9 L8 2 L15 9 L13 9 L13 16 L10 16 L10 11 L6 11 L6 16 L3 16 L3 9Z" fill="#c0c0c0"/><path d="M8 2 L15 9 L13 9 L8 4.500Z" fill="#8a8a8a"/><path d="M12 1.500 h2.500 v4 l-2.500 -2.500z" fill="#9a9a9a"/></svg><div class="a sh" style="left:2125px;top:163.5px;font-size:12.1px;color:#dcdcdc">Floor</div><div class="a" style="left:2415px;top:163.5px;font-size:12.1px;color:#9a9a9a">StaticMeshActor</div><svg style="left:2057.5px;top:182.0px" width="15.5" height="11" viewBox="0 0 17 11" preserveAspectRatio="none"><path d="M.5 5.500 C4 .5 13 .5 16.500 5.500 C13 10.500 4 10.500 .5 5.500Z" fill="#eef0f8" stroke="#4f63a8" stroke-width="1.300"/><circle cx="8.500" cy="5.500" r="3.300" fill="#5a70b8"/><circle cx="8.500" cy="5.500" r="1.600" fill="#101020"/><circle cx="7.600" cy="4.300" r=".8" fill="#fff"/></svg><svg style="left:2102.500px;top:179.0px" width="17" height="17" viewBox="0 0 17 17"><circle cx="2.600" cy="2.600" r="2.600" fill="#f4d020"/><circle cx="11" cy="6" r="3.200" fill="#f4f4f4"/><g stroke="#f0f0f0" stroke-width="1.200"><path d="M11 0 V2 M11 10 V12 M5.500 6 H7.500 M14.500 6 H16.500 M7 2 L8.500 3.500 M15 2 L13.500 3.500 M15 10 L13.500 8.500"/></g><path d="M2 14 L9 9" stroke="#f0f0f0" stroke-width="1.800"/><path d="M1 16 L2 11.500 L5.500 15.500Z" fill="#f0f0f0"/></svg><div class="a sh" style="left:2125px;top:181.5px;font-size:12.1px;color:#dcdcdc">Light Source</div><div class="a" style="left:2415px;top:181.5px;font-size:12.1px;color:#9a9a9a">DirectionalLight</div><svg style="left:2057.5px;top:200.0px" width="15.5" height="11" viewBox="0 0 17 11" preserveAspectRatio="none"><path d="M.5 5.500 C4 .5 13 .5 16.500 5.500 C13 10.500 4 10.500 .5 5.500Z" fill="#eef0f8" stroke="#4f63a8" stroke-width="1.300"/><circle cx="8.500" cy="5.500" r="3.300" fill="#5a70b8"/><circle cx="8.500" cy="5.500" r="1.600" fill="#101020"/><circle cx="7.600" cy="4.300" r=".8" fill="#fff"/></svg><svg style="left:2102.500px;top:197.0px" width="17" height="17" viewBox="0 0 17 17"><path d="M2 1 L9 3 L4 6Z" fill="#d0d0d0"/><path d="M2 1 L5 15" stroke="#e4e4e4" stroke-width="1.300"/><ellipse cx="6" cy="15" rx="4" ry="1.600" fill="#e8e8e8"/><path d="M6 9 C8 6.500 14 6.500 15 9 L16 14 C15 16 13 15 12 13 L9 13 C8 15 6 15 6 13Z" fill="#e8e8e8"/></svg><div class="a sh" style="left:2125px;top:199.5px;font-size:12.1px;color:#dcdcdc">Player Start</div><div class="a" style="left:2415px;top:199.5px;font-size:12.1px;color:#9a9a9a">PlayerStart</div><svg style="left:2057.5px;top:219.0px" width="15.5" height="11" viewBox="0 0 17 11" preserveAspectRatio="none"><path d="M.5 5.500 C4 .5 13 .5 16.500 5.500 C13 10.500 4 10.500 .5 5.500Z" fill="#eef0f8" stroke="#4f63a8" stroke-width="1.300"/><circle cx="8.500" cy="5.500" r="3.300" fill="#5a70b8"/><circle cx="8.500" cy="5.500" r="1.600" fill="#101020"/><circle cx="7.600" cy="4.300" r=".8" fill="#fff"/></svg><svg style="left:2102.500px;top:216.0px" width="17" height="17" viewBox="0 0 17 17"><circle cx="8.500" cy="8.500" r="6.500" fill="url(#sph)"/></svg><div class="a sh" style="left:2125px;top:218.5px;font-size:12.1px;letter-spacing:-.3px;color:#dcdcdc">Sky Sphere</div><div class="a" style="left:2417px;top:218.5px;font-size:12.1px;color:#7fa2ee;border-bottom:1px dotted #7fa2ee;padding-bottom:1px">Edit BP_Sky_Sphere</div><svg style="left:2057.5px;top:237.1px" width="15.5" height="11" viewBox="0 0 17 11" preserveAspectRatio="none"><path d="M.5 5.500 C4 .5 13 .5 16.500 5.500 C13 10.500 4 10.500 .5 5.500Z" fill="#eef0f8" stroke="#4f63a8" stroke-width="1.300"/><circle cx="8.500" cy="5.500" r="3.300" fill="#5a70b8"/><circle cx="8.500" cy="5.500" r="1.600" fill="#101020"/><circle cx="7.600" cy="4.300" r=".8" fill="#fff"/></svg><svg style="left:2102.500px;top:234.1px" width="17" height="17" viewBox="0 0 17 17"><path d="M1 13 C1 2 16 2 16 13 L14 13 C11 10.500 6 10.500 3 13Z" fill="#202020" stroke="#f0f0f0" stroke-width="1.300"/><path d="M6 6 L7 9 M11 6 L10 9 M3.500 9 L5.500 10.500 M13.500 9 L11.500 10.500" stroke="#d0d0d0" stroke-width="1.100"/></svg><div class="a sh" style="left:2125px;top:236.6px;font-size:12.1px;color:#dcdcdc">SkyLight</div><div class="a" style="left:2415px;top:236.6px;font-size:12.1px;color:#9a9a9a">SkyLight</div><svg style="left:2057.5px;top:255.0px" width="15.5" height="11" viewBox="0 0 17 11" preserveAspectRatio="none"><path d="M.5 5.500 C4 .5 13 .5 16.500 5.500 C13 10.500 4 10.500 .5 5.500Z" fill="#eef0f8" stroke="#4f63a8" stroke-width="1.300"/><circle cx="8.500" cy="5.500" r="3.300" fill="#5a70b8"/><circle cx="8.500" cy="5.500" r="1.600" fill="#101020"/><circle cx="7.600" cy="4.300" r=".8" fill="#fff"/></svg><svg style="left:2102.500px;top:252.0px" width="17" height="17" viewBox="0 0 17 17"><circle cx="8" cy="8.500" r="7" fill="#f0f0f0" stroke="#222" stroke-width="1"/><path d="M3 9 C4 5 8 4 11 5 L9 8 L12 12 C9 14 5 13 3 9Z" fill="#222"/><circle cx="10" cy="10" r="2" fill="#f0f0f0"/><circle cx="13.500" cy="14" r="1.800" fill="#e0e0e0" stroke="#222" stroke-width=".6"/></svg><div class="a sh" style="left:2125px;top:254.5px;font-size:12.1px;color:#dcdcdc">SphereReflectionCapture</div><div class="a" style="left:2415px;top:254.5px;font-size:12.1px;color:#9a9a9a">SphereReflectionCapture</div>
<div class="a" style="left:2058px;top:443px;width:494px;height:1px;background:#6a6a6a"></div>
<div class="a" style="left:2065px;top:451.500px;font-size:12.1px;color:#dcdcdc">7 actors</div>
<svg style="left:2446px;top:453px" width="18" height="10" viewBox="0 0 18 10"><path d="M.5 5 C4 .5 14 .5 17.500 5 C14 9.500 4 9.500 .5 5Z" fill="#e4e4e8"/><circle cx="9" cy="5" r="2.800" fill="#4a5890"/></svg>
<div class="a" style="left:2467px;top:451.500px;font-size:12.1px;color:#dcdcdc">View Options</div>
<svg style="left:2540px;top:456px" width="9" height="5"><path d="M0 0 H9 L4.500 5Z" fill="#dcdcdc"/></svg>
<div class="tab" style="left:2053px;top:483px;width:150px"><div class="t">Details</div><div class="x">✕</div>
<svg style="left:5px;top:2px" width="18" height="18" viewBox="0 0 18 18"><circle cx="7.500" cy="7.500" r="6" fill="#e8ecf8" stroke="#6f8fe0" stroke-width="1.600"/><path d="M11.500 12 L16.500 17" stroke="#6f8fe0" stroke-width="2"/><text x="5.300" y="11.500" font-size="10" font-weight="bold" fill="#333" font-family="Liberation Serif, serif">i</text></svg></div>
<div class="panel" style="left:2049px;top:505px;width:511px;height:1054px"></div>
<div class="a sh" style="left:2220px;top:531.500px;font-size:12.1px;color:#dcdcdc">Select an object to view details.</div>
<!-- bird badge -->
<svg style="left:2466px;top:862px" width="50" height="56" viewBox="0 0 50 56"><path d="M25 3.5 L45.500 15.500 V40.500 L25 52.500 L4.500 40.500 V15.500Z" fill="#4a8af8" stroke="#4a8af8" stroke-width="6" stroke-linejoin="round"/><path d="M25 28 L25 1 L48 14.500Z M25 28 L48 41.500 L25 55Z M25 28 L2 41.500 L2 14.500Z" fill="#fff" opacity=".09"/><path d="M25 2 L47 14.700 V41.300 L25 54 L3 41.300 V14.700Z" fill="none" stroke="#8fbaff" stroke-width="1.300" stroke-linejoin="round"/>
<path d="M5.400 15.500 L14.700 17.200 C18 17.500 20 19 21.200 21.300 C27 17 34 13 40.700 10.700 C38 17 36 22 33.700 26.900 L43 31.100 C38 32 33 33 28.200 34.800 L32.800 47.800 C28 43 22 39 17.500 35.700 C15 33 14 31 13.800 28.300 C13.500 25 13.500 23 12.800 20.900 C11 18.500 8 16.500 5.400 15.500Z" fill="#eef3fc"/></svg>

<div class="tab" style="left:4px;top:1035px;width:150px"><div class="t">Content Browser</div><div class="x">✕</div>
<svg style="left:6px;top:3px" width="17" height="16" viewBox="0 0 17 16"><path d="M1 2 H16 L17 15 H0Z" fill="#5a76c8"/><g fill="#e6eaf8"><rect x="2.500" y="4" width="3" height="2.500"/><rect x="7" y="4" width="3" height="2.500"/><rect x="11.500" y="4" width="3" height="2.500"/><rect x="2.500" y="8" width="3" height="2.500"/><rect x="7" y="8" width="3" height="2.500"/><rect x="11.500" y="8" width="3" height="2.500"/><rect x="2.500" y="12" width="3" height="2"/><rect x="7" y="12" width="3" height="2"/><rect x="11.500" y="12" width="3" height="2"/></g></svg></div>
<div class="panel" style="left:0;top:1057px;width:2044px;height:502px"></div>
<div class="a" style="left:5.500px;top:1062.500px;width:121px;height:26px;background:#4ea654;border-radius:2px;box-shadow:inset 0 0 0 1px #3f8a45"></div>
<svg style="left:13px;top:1068px" width="13" height="16" viewBox="0 0 13 16"><path d="M0 0 H8 L13 5 V16 H0Z" fill="#fff"/><path d="M8 0 V5 H13Z" fill="#cfe8d0"/></svg>
<div class="a b sh" style="left:31px;top:1067.500px;font-size:14.4px;letter-spacing:-.2px;color:#fff">Add/Import</div>
<svg style="left:110px;top:1074px" width="10" height="6"><path d="M0 0 H10 L5 6Z" fill="#fff"/></svg>
<svg style="left:135px;top:1068.500px" width="14" height="14" viewBox="0 0 14 14"><path d="M1 1 H10.500 L13 3.500 V13 H1Z" fill="none" stroke="#f0f0f0" stroke-width="1.500"/><rect x="3.500" y="1" width="6" height="4" fill="none" stroke="#f0f0f0" stroke-width="1.200"/><rect x="3.500" y="8" width="7" height="5" fill="none" stroke="#f0f0f0" stroke-width="1.200"/></svg>
<div class="a b sh" style="left:153.500px;top:1067.500px;font-size:14.4px;letter-spacing:-.2px;color:#f4f4f4">Save All</div>
<svg style="left:231px;top:1069px" width="14" height="14" viewBox="0 0 14 14"><path d="M7 1 L1 7 L7 13 M1.500 7 H14" fill="none" stroke="#f0f0f0" stroke-width="2.600"/></svg>
<svg style="left:250px;top:1069px" width="14" height="14" viewBox="0 0 14 14"><path d="M7 1 L13 7 L7 13 M12.500 7 H0" fill="none" stroke="#8a8a8a" stroke-width="2.600"/></svg>
<div class="a" style="left:272px;top:1063.500px;width:1px;height:24px;background:#5a5a5a"></div>
<svg style="left:281.500px;top:1069px" width="17" height="13" viewBox="0 0 17 13"><path d="M0 1 H5 L6.500 2.500 H13 V5 H4 L1 12 H0Z" fill="#f0f0f0"/><path d="M4.500 6 H17 L14 13 H1.500Z" fill="#f0f0f0"/></svg>
<div class="a b sh" style="left:308px;top:1067.500px;font-size:14.4px;letter-spacing:-.2px;color:#f4f4f4">Content</div>
<svg style="left:375px;top:1071px" width="6" height="9"><path d="M0 0 L6 4.500 L0 9Z" fill="#f0f0f0"/></svg>
<div class="a b sh" style="left:393px;top:1067.500px;font-size:14.4px;letter-spacing:-.2px;color:#f4f4f4">MetaHumans</div>
<svg style="left:498px;top:1071px" width="6" height="9"><path d="M0 0 L6 4.500 L0 9Z" fill="#f0f0f0"/></svg>
<div class="a b sh" style="left:516px;top:1067.500px;font-size:14.4px;letter-spacing:-.2px;color:#f4f4f4">Bernice</div>
<svg style="left:582px;top:1071px" width="6" height="9"><path d="M0 0 L6 4.500 L0 9Z" fill="#f0f0f0"/></svg>
<svg style="left:2021.500px;top:1068.500px" width="14" height="14" viewBox="0 0 14 14"><path d="M1 9.500 V4.500 C1 .3 6.300 .3 6.300 4.500 V7" fill="none" stroke="#e8e8e8" stroke-width="1.400"/><rect x="3.500" y="7.500" width="10" height="6" rx=".8" fill="#e8e8e8"/><rect x="7.800" y="9" width="1.600" height="3" fill="#444"/></svg>
<div class="a" style="left:4px;top:1091.500px;width:2038px;height:2px;background:#2a2a2a"></div>
<!-- sources panel -->
<svg style="left:8px;top:1101px" width="17" height="15" viewBox="0 0 17 15"><path d="M0 1 H17 M7 5.500 H17 M7 10 H17 M0 14 H17" stroke="#e4e4e4" stroke-width="1.800"/><path d="M5 4.500 V11.500 L0 8Z" fill="#e4e4e4"/></svg>
<div class="search" style="left:29px;top:1099.500px;width:456px;height:19px"><span>Search Paths</span>
<svg style="right:1px;top:0.5px" width="18" height="18" viewBox="0 0 18 18"><circle cx="11" cy="7.3" r="5" fill="none" stroke="#111" stroke-width="2.2"/><path d="M7.2 11.2 L3 15.4" stroke="#111" stroke-width="3" stroke-linecap="round"/></svg></div>
<svg style="left:491px;top:1102px" width="14" height="14" viewBox="0 0 14 14"><rect x=".8" y=".8" width="12.400" height="12.400" fill="#1c1c1c" stroke="#e8e8e8" stroke-width="1.400"/><path d="M3 4.300 H11 M3 7 H11 M3 9.700 H11" stroke="#e8e8e8" stroke-width="1.600"/></svg>
<div class="a" style="left:5px;top:1120.500px;width:504px;height:37.500px;background:#5b5b5b"></div>
<div class="a" style="left:5px;top:1158px;width:504px;height:16px;background:#8c8c8c"></div>
<div class="a" style="left:512px;top:1096px;width:3px;height:462px;background:#2a2a2a"></div>
<svg style="left:6px;top:1124px" width="8" height="8"><path d="M7 0 V7 H0Z" fill="#c8c8c8"/></svg><svg style="left:15px;top:1127px" width="17" height="13" viewBox="0 0 17 13"><path d="M1 1 H6 L7.500 2.500 H14 V12 H1Z" fill="#a8a8a8"/><path d="M3 5 H17 L14.500 12.500 H.5Z" fill="#d4d4d4" stroke="#3a3a3a" stroke-width=".6"/></svg><div class="a sh" style="left:35px;top:1123.500px;font-size:16.400px;color:#dcdcdc">Content</div><svg style="left:16px;top:1145px" width="8" height="8"><path d="M7 0 V7 H0Z" fill="#c8c8c8"/></svg><svg style="left:25px;top:1145px" width="17" height="13" viewBox="0 0 17 13"><path d="M1 1 H6 L7.500 2.500 H14 V12 H1Z" fill="#a8a8a8"/><path d="M3 5 H17 L14.500 12.500 H.5Z" fill="#d4d4d4" stroke="#3a3a3a" stroke-width=".6"/></svg><div class="a sh" style="left:45.500px;top:1144.500px;font-size:12.300px;color:#dcdcdc">MetaHumans</div><svg style="left:25px;top:1161px" width="7" height="9"><path d="M.7 .7 L6 4.500 L.7 8.300Z" fill="none" stroke="#1a1a1a" stroke-width="1.100"/></svg><svg style="left:35px;top:1160px" width="16" height="13" viewBox="0 0 16 13"><path d="M.5 1 H6 L7.500 2.500 H15.500 V12.500 H.5Z" fill="#bcbcbc" stroke="#3a3a3a" stroke-width=".6"/></svg><div class="a" style="left:55.500px;top:1160.700px;font-size:12.300px;color:#141414">Bernice</div><svg style="left:25px;top:1177px" width="7" height="9"><path d="M.7 .7 L6 4.500 L.7 8.300Z" fill="none" stroke="#d0d0d0" stroke-width="1.100"/></svg><svg style="left:35px;top:1176px" width="16" height="13" viewBox="0 0 16 13"><path d="M.5 1 H6 L7.500 2.500 H15.500 V12.500 H.5Z" fill="#d4d4d4" stroke="#3a3a3a" stroke-width=".6"/></svg><div class="a sh" style="left:55.500px;top:1176.700px;font-size:12.300px;color:#dcdcdc">Common</div>
<svg style="left:524px;top:1103px" width="10" height="11" viewBox="0 0 10 11"><path d="M0 0 H10 L6.300 4.500 V10.500 L3.700 9 V4.500Z" fill="#f0f0f0"/></svg>
<div class="a b sh" style="left:536px;top:1102.500px;font-size:12px;letter-spacing:-.35px;color:#f0f0f0">Filters</div>
<svg style="left:572px;top:1107px" width="9" height="5"><path d="M0 0 H9 L4.500 5Z" fill="#f0f0f0"/></svg>
<div class="search" style="left:589px;top:1100px;width:1431px;height:19px"><span>Search Bernice</span>
<svg style="right:1px;top:0.5px" width="18" height="18" viewBox="0 0 18 18"><circle cx="11" cy="7.3" r="5" fill="none" stroke="#111" stroke-width="2.2"/><path d="M7.2 11.2 L3 15.4" stroke="#111" stroke-width="3" stroke-linecap="round"/></svg></div>
<svg style="left:2024px;top:1103px" width="13" height="13" viewBox="0 0 13 13"><path d="M1 1 H10 L12 3 V12 H1Z" fill="none" stroke="#7a7a7a" stroke-width="1.400"/><rect x="3.500" y="1" width="5" height="3.500" fill="#7a7a7a"/><rect x="3.500" y="7.500" width="6" height="4.500" fill="none" stroke="#7a7a7a" stroke-width="1.100"/></svg>
<svg width="0" height="0"><defs><linearGradient id="fold" x1="0" y1="0" x2="0" y2="1"><stop offset="0" stop-color="#c8c8c8"/><stop offset=".15" stop-color="#b6b6b6"/><stop offset="1" stop-color="#8a8a8a"/></linearGradient>
<linearGradient id="foldt" x1="0" y1="0" x2="0" y2="1"><stop offset="0" stop-color="#d0d0d0"/><stop offset="1" stop-color="#a6a6a6"/></linearGradient>
<pattern id="dots" width="2.400" height="2.400" patternUnits="userSpaceOnUse"><rect width="2.400" height="2.400" fill="#4a1a1e"/><circle cx="1.200" cy="1.200" r=".75" fill="#8a6458"/></pattern><radialGradient id="foldh" cx=".45" cy=".05" r=".6"><stop offset="0" stop-color="#fff" stop-opacity=".25"/><stop offset="1" stop-color="#fff" stop-opacity="0"/></radialGradient></defs></svg>
<svg style="left:524.3px;top:1139px" width="94" height="66" viewBox="0 0 94 66"><path d="M88 48 L93 47 L90 63 L88 63Z" fill="#1c1c1c" opacity=".7"/><path d="M3 12 L7 1.500 C7.500 .5 8 .5 9 .5 H36 C37 .5 37.500 1 38 2 L41 8 H89 V14 H3Z" fill="url(#foldt)"/><path d="M3 11 H89 V13 H3Z" fill="#9c9c9c"/><path d="M1 12 H91 V62 C91 63 90.500 63.500 89.500 63.500 H2.500 C1.500 63.500 1 63 1 62Z" fill="url(#fold)"/><path d="M1 12 H91 V62 H1Z" fill="url(#foldh)"/><path d="M1 62.500 H91 V64.500 H1Z" fill="#2c2c2c" opacity=".6"/></svg><div class="a sh" style="left:517.3px;top:1241px;width:106px;text-align:center;font-size:12.300px;color:#dcdcdc">Body</div><svg style="left:631.8px;top:1139px" width="94" height="66" viewBox="0 0 94 66"><path d="M88 48 L93 47 L90 63 L88 63Z" fill="#1c1c1c" opacity=".7"/><path d="M3 12 L7 1.500 C7.500 .5 8 .5 9 .5 H36 C37 .5 37.500 1 38 2 L41 8 H89 V14 H3Z" fill="url(#foldt)"/><path d="M3 11 H89 V13 H3Z" fill="#9c9c9c"/><path d="M1 12 H91 V62 C91 63 90.500 63.500 89.500 63.500 H2.500 C1.500 63.500 1 63 1 62Z" fill="url(#fold)"/><path d="M1 12 H91 V62 H1Z" fill="url(#foldh)"/><path d="M1 62.500 H91 V64.500 H1Z" fill="#2c2c2c" opacity=".6"/></svg><div class="a sh" style="left:624.8px;top:1241px;width:106px;text-align:center;font-size:12.300px;color:#dcdcdc">Face</div><svg style="left:739.3px;top:1139px" width="94" height="66" viewBox="0 0 94 66"><path d="M88 48 L93 47 L90 63 L88 63Z" fill="#1c1c1c" opacity=".7"/><path d="M3 12 L7 1.500 C7.500 .5 8 .5 9 .5 H36 C37 .5 37.500 1 38 2 L41 8 H89 V14 H3Z" fill="url(#foldt)"/><path d="M3 11 H89 V13 H3Z" fill="#9c9c9c"/><path d="M1 12 H91 V62 C91 63 90.500 63.500 89.500 63.500 H2.500 C1.500 63.500 1 63 1 62Z" fill="url(#fold)"/><path d="M1 12 H91 V62 H1Z" fill="url(#foldh)"/><path d="M1 62.500 H91 V64.500 H1Z" fill="#2c2c2c" opacity=".6"/></svg><div class="a sh" style="left:732.3px;top:1241px;width:106px;text-align:center;font-size:12.300px;color:#dcdcdc">Female</div><svg style="left:846.8px;top:1139px" width="94" height="66" viewBox="0 0 94 66"><path d="M88 48 L93 47 L90 63 L88 63Z" fill="#1c1c1c" opacity=".7"/><path d="M3 12 L7 1.500 C7.500 .5 8 .5 9 .5 H36 C37 .5 37.500 1 38 2 L41 8 H89 V14 H3Z" fill="url(#foldt)"/><path d="M3 11 H89 V13 H3Z" fill="#9c9c9c"/><path d="M1 12 H91 V62 C91 63 90.500 63.500 89.500 63.500 H2.500 C1.500 63.500 1 63 1 62Z" fill="url(#fold)"/><path d="M1 12 H91 V62 H1Z" fill="url(#foldh)"/><path d="M1 62.500 H91 V64.500 H1Z" fill="#2c2c2c" opacity=".6"/></svg><div class="a sh" style="left:839.8px;top:1241px;width:106px;text-align:center;font-size:12.300px;color:#dcdcdc">FemaleHair</div><svg style="left:954.3px;top:1139px" width="94" height="66" viewBox="0 0 94 66"><path d="M88 48 L93 47 L90 63 L88 63Z" fill="#1c1c1c" opacity=".7"/><path d="M3 12 L7 1.500 C7.500 .5 8 .5 9 .5 H36 C37 .5 37.500 1 38 2 L41 8 H89 V14 H3Z" fill="url(#foldt)"/><path d="M3 11 H89 V13 H3Z" fill="#9c9c9c"/><path d="M1 12 H91 V62 C91 63 90.500 63.500 89.500 63.500 H2.500 C1.500 63.500 1 63 1 62Z" fill="url(#fold)"/><path d="M1 12 H91 V62 H1Z" fill="url(#foldh)"/><path d="M1 62.500 H91 V64.500 H1Z" fill="#2c2c2c" opacity=".6"/></svg><div class="a sh" style="left:947.3px;top:1241px;width:106px;text-align:center;font-size:12.300px;color:#dcdcdc">MaleHair</div><svg style="left:1061.8px;top:1139px" width="94" height="66" viewBox="0 0 94 66"><path d="M88 48 L93 47 L90 63 L88 63Z" fill="#1c1c1c" opacity=".7"/><path d="M3 12 L7 1.500 C7.500 .5 8 .5 9 .5 H36 C37 .5 37.500 1 38 2 L41 8 H89 V14 H3Z" fill="url(#foldt)"/><path d="M3 11 H89 V13 H3Z" fill="#9c9c9c"/><path d="M1 12 H91 V62 C91 63 90.500 63.500 89.500 63.500 H2.500 C1.500 63.500 1 63 1 62Z" fill="url(#fold)"/><path d="M1 12 H91 V62 H1Z" fill="url(#foldh)"/><path d="M1 62.500 H91 V64.500 H1Z" fill="#2c2c2c" opacity=".6"/></svg><div class="a sh" style="left:1054.8px;top:1241px;width:106px;text-align:center;font-size:12.300px;color:#dcdcdc">Materials</div><div class="a" style="left:1167.3px;top:1126px;width:98px;height:98px;background:#b8bcc2;box-shadow:0 0 3px #1a1a1a;overflow:hidden"><div class="a" style="left:0;top:0;width:98px;height:98px;background:linear-gradient(#bdbfc2 0,#c3c6c9 22%,#b6babd 30%,#adb2b6 100%)"></div>
<svg style="left:0;top:0" width="98" height="98" viewBox="0 0 98 98"><g fill="#9aa0a6" opacity=".5"><path d="M0 40 L34 36 L24 50 L0 54Z M62 34 L98 38 L98 46 L72 42Z M24 50 L54 47 L50 64 L10 70Z M72 42 L98 46 L98 64 L78 58Z M50 64 L78 58 L90 90 L46 98Z M0 76 L10 70 L0 98Z M34 36 L62 34 L54 47 L24 50Z" opacity=".0"/><path d="M0 40 L34 36 L24 50 L0 54Z M62 34 L98 38 L98 46 L72 42Z M24 50 L54 47 L50 64 L10 70Z M72 42 L98 46 L98 64 L78 58Z M50 64 L78 58 L90 90 L46 98Z M0 76 L10 70 L0 98Z"/></g>
<path d="M14 70 L44 80 L56 96 L40 98 L22 84Z" fill="#6f7686" opacity=".5"/>
<circle cx="49" cy="17" r="4.300" fill="#c9a58e"/><path d="M45 15.500 C44.500 10.500 53 10 54 15 C54.500 18 53 18 53 16 C51 13.500 47 13.500 45 15.500Z" fill="#151515"/>
<path d="M44.500 23 C47 21.500 52 21.500 54.500 23 L58 33 L64.500 47 L62.500 48.500 L55 37 L55 48 H44 L44.500 37 L31 46 L29.500 44 L42 31Z" fill="#1b1c1f"/>
<path d="M44 48 H55 L54.500 62 L52.500 80 H49.500 L49.500 58 L47 80 H44 L43.500 62Z" fill="#25272b"/><path d="M41 80.500 L47 79.500 L47 83 L40 83.500Z M49.500 79.500 L53 79.500 L55.500 84 L50 84Z" fill="#f2f2f2"/><circle cx="29.500" cy="46" r="1.600" fill="#c9a58e"/><circle cx="64.500" cy="49" r="1.600" fill="#c9a58e"/>
<ellipse cx="89.500" cy="88.500" rx="6" ry="3" fill="#333" opacity=".6"/><circle cx="87.500" cy="85.500" r="6.300" fill="url(#sph)" stroke="#1a1a1a" stroke-width="1.200"/></svg><div class="a" style="left:0;top:95px;width:98px;height:3px;background:#3f7df0"></div></div><div class="a" style="left:1274.8px;top:1126px;width:98px;height:98px;background:#571c25;box-shadow:0 0 3px #1a1a1a;overflow:hidden"><div class="a" style="left:0;top:0;width:98px;height:98px;background:#561b23"></div>
<svg style="left:0;top:0" width="98" height="98" viewBox="0 0 98 98"><path d="M19 96 C27 84 37 76.500 48 76.500 C59 76.500 71 85 79 96Z" fill="url(#dots)"/><path d="M24 76 L40 70 L62 66 L80 56 L78 61 L64 72 L42 78 L26 79Z" fill="#2c0d12" opacity=".75"/>
<g fill="none" stroke="#e8e8e8" stroke-width="2.600"><path d="M21 37 V20.500 H37"/><path d="M55 20.500 H68.500 V35"/><path d="M22 58 V75.500 H37"/><path d="M68.500 55 V69 L57 71"/></g>
<circle cx="35.500" cy="27" r="3.400" fill="#a4a4a4"/><path d="M34 30.500 L41 32 L46 42 L43 50 L50 60 L60 64 L59 67 L47 64 L41 55 L37 63 L36 74 L32 74 L32.500 62 L36 48 L35 41 L29 43 L28.500 40 L34 37Z" fill="#8e8e8e"/><path d="M34 30.500 L41 32 L44 38 L38 40 L34 37Z" fill="#a8a8a8"/></svg><div class="a" style="left:0;top:95px;width:98px;height:3px;background:#e01e28"></div></div><div class="a" style="left:1382.3px;top:1126px;width:98px;height:98px;background:#571c25;box-shadow:0 0 3px #1a1a1a;overflow:hidden"><div class="a" style="left:0;top:0;width:98px;height:98px;background:#561b23"></div>
<svg style="left:0;top:0" width="98" height="98" viewBox="0 0 98 98"><path d="M19 96 C27 84 37 76.500 48 76.500 C59 76.500 71 85 79 96Z" fill="url(#dots)"/><path d="M24 76 L40 70 L62 66 L80 56 L78 61 L64 72 L42 78 L26 79Z" fill="#2c0d12" opacity=".75"/>
<g fill="none" stroke="#e8e8e8" stroke-width="2.600"><path d="M21 37 V20.500 H37"/><path d="M55 20.500 H68.500 V35"/><path d="M22 58 V75.500 H37"/><path d="M68.500 55 V69 L57 71"/></g>
<circle cx="35.500" cy="27" r="3.400" fill="#a4a4a4"/><path d="M34 30.500 L41 32 L46 42 L43 50 L50 60 L60 64 L59 67 L47 64 L41 55 L37 63 L36 74 L32 74 L32.500 62 L36 48 L35 41 L29 43 L28.500 40 L34 37Z" fill="#8e8e8e"/><path d="M34 30.500 L41 32 L44 38 L38 40 L34 37Z" fill="#a8a8a8"/></svg><div class="a" style="left:0;top:95px;width:98px;height:3px;background:#e01e28"></div></div><div class="a" style="left:1489.8px;top:1126px;width:98px;height:98px;background:#5a4e28;box-shadow:0 0 3px #1a1a1a;overflow:hidden"><div class="a" style="left:0;top:0;width:98px;height:98px;background:radial-gradient(circle at 50% 50%,#665a2e,#574c26 75%,#4e4422)"></div>
<div class="a sh" style="left:0;top:33px;width:98px;text-align:center;font-size:12.300px;color:#e4e4e4;line-height:16px;white-space:normal">NANSENSE<br>Remap Asset</div><div class="a" style="left:0;top:95px;width:98px;height:3px;background:#f2da3a"></div></div><div class="a sh" style="left:1159.3px;top:1241px;width:112px;height:25px;overflow:hidden;text-align:center;font-size:12.300px;color:#dcdcdc;line-height:13.800px;white-space:normal;letter-spacing:-0.3px">BP_Bernice</div><div class="a sh" style="left:1266.8px;top:1229.5px;width:112px;height:36.5px;overflow:hidden;text-align:center;font-size:12.300px;color:#dcdcdc;line-height:13.800px;white-space:normal;letter-spacing:-0.4px">Face_Archetype_<br>Skeleton_Pose<br>Asset</div><div class="a sh" style="left:1374.3px;top:1233.5px;width:112px;height:32.5px;overflow:hidden;text-align:center;font-size:12.300px;color:#dcdcdc;line-height:13.800px;white-space:normal;letter-spacing:-0.3px">metahuman_base_<br>skel_PoseAsset</div><div class="a sh" style="left:1481.8px;top:1233.5px;width:112px;height:32.5px;overflow:hidden;text-align:center;font-size:12.300px;color:#dcdcdc;line-height:13.800px;white-space:normal;letter-spacing:-0.6px">NANSENSERemap<br>Asset</div>
<div class="a" style="left:525px;top:1537px;font-size:12.300px;color:#dcdcdc">10 items</div>
<svg style="left:1934px;top:1539px" width="18" height="10" viewBox="0 0 18 10"><path d="M.5 5 C4 .5 14 .5 17.500 5 C14 9.500 4 9.500 .5 5Z" fill="#e4e4e8"/><circle cx="9" cy="5" r="2.800" fill="#4a5890"/></svg>
<div class="a" style="left:1955px;top:1537px;font-size:12.300px;color:#dcdcdc">View Options</div>
<svg style="left:2028px;top:1542px" width="9" height="5"><path d="M0 0 H9 L4.500 5Z" fill="#dcdcdc"/></svg>
<!-- bottom strip (taskbar peek) -->
<div class="a" style="left:0;top:1559px;width:2560px;height:9px;background:linear-gradient(90deg,#262626 0,#282828 40%,#2e2b26 70%,#2a2823 100%)"></div>
<div class="a" style="left:638px;top:1560px;width:48px;height:8px;background:#5a5a5a"></div>
<div class="a" style="left:2278px;top:1564px;font-size:11px;color:#e8e8e8;height:4px;overflow:hidden"><span style="position:relative;top:0px">2017</span></div>
<div class="a" style="left:2456px;top:1564px;font-size:11px;color:#e8e8e8;height:4px;overflow:hidden">10:31</div>
</body></html>
